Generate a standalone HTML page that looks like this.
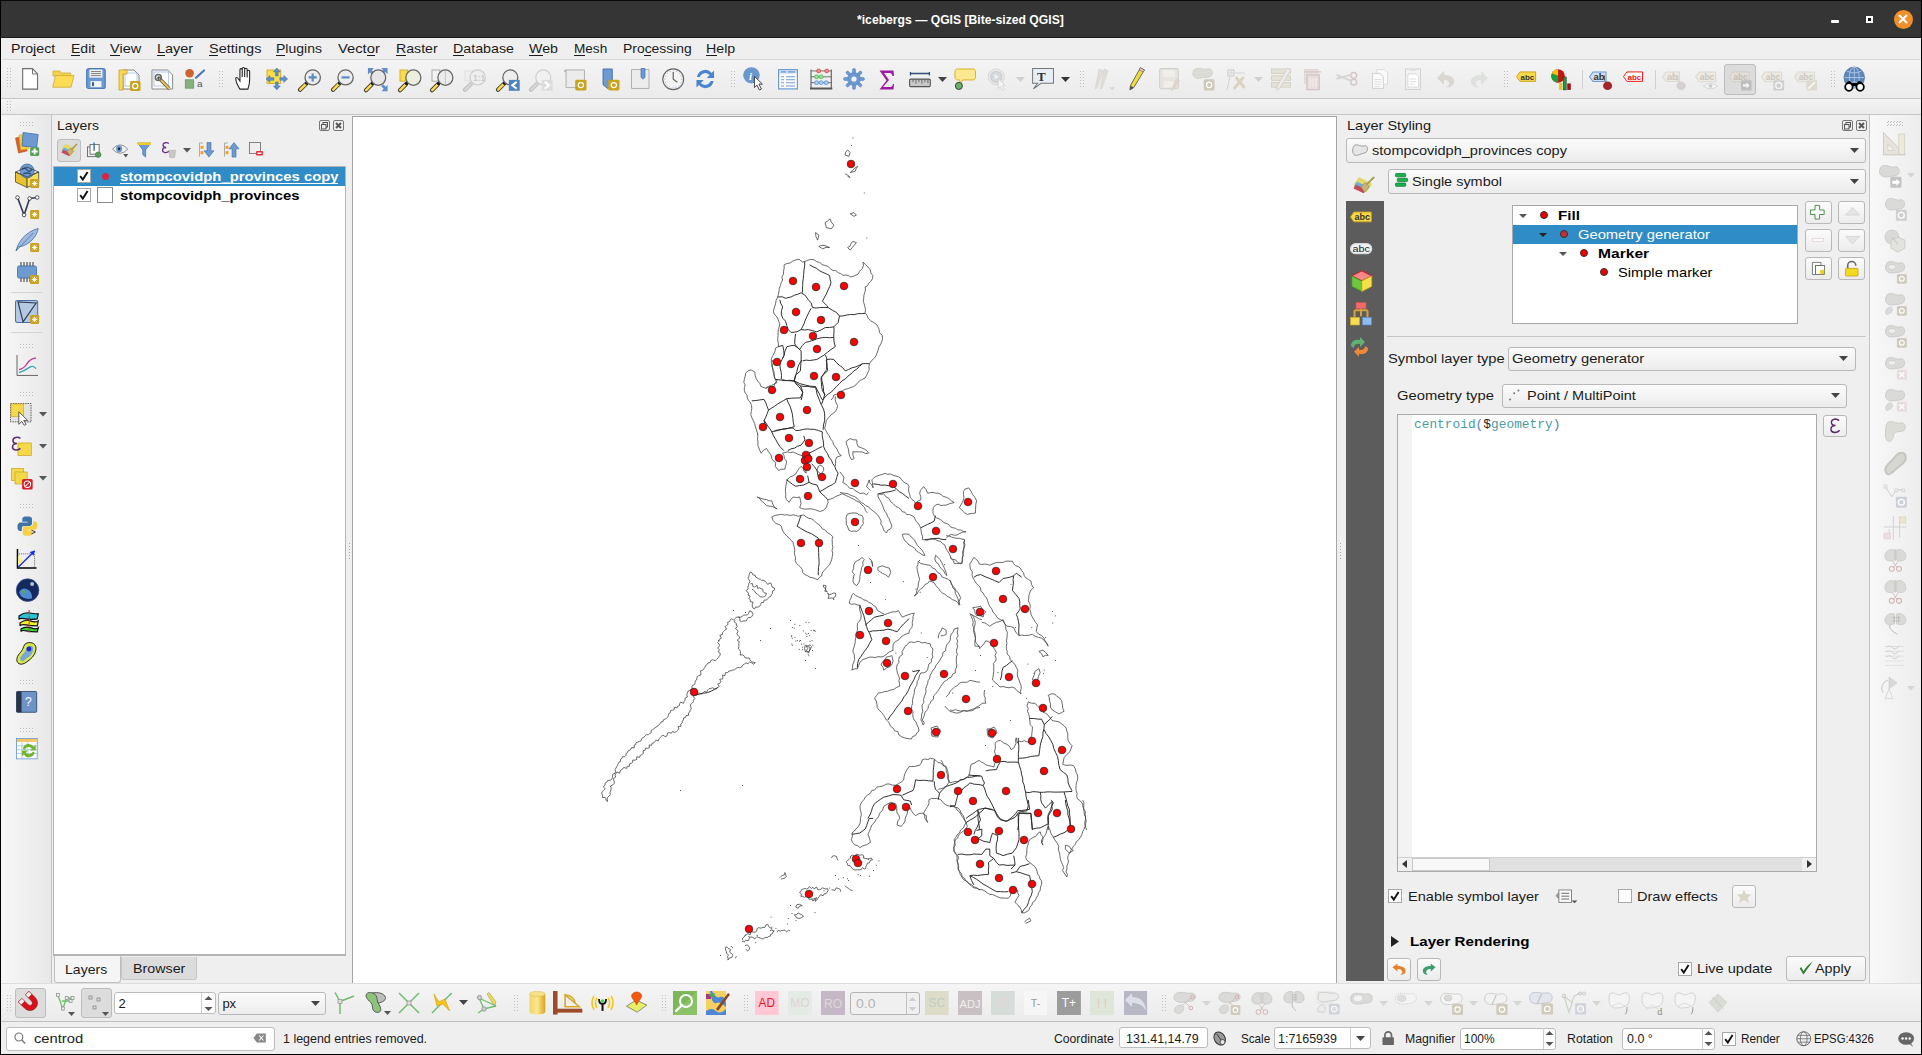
<!DOCTYPE html><html><head><meta charset="utf-8"><style>
*{margin:0;padding:0;box-sizing:border-box}
html,body{width:1922px;height:1055px;overflow:hidden;background:#efefef;font-family:"Liberation Sans",sans-serif;font-size:13px;color:#1b1b1b}
.a{position:absolute}
.t{position:absolute;white-space:nowrap;line-height:1;transform-origin:0 0}
svg{position:absolute;overflow:visible}
.btn{position:absolute;border:1px solid #b8b8b8;border-radius:3px;background:linear-gradient(#fbfbfb,#ececec)}
.pr{position:absolute;border:1px solid #bdbdbd;border-radius:3px;background:#dcdcdc}
.inp{position:absolute;border:1px solid #bcbcbc;border-radius:3px;background:#fff}
.cb{position:absolute;width:14px;height:14px;border:1px solid #a8a8a8;background:#fff}
</style></head><body><div class="a" style="left:0px;top:0px;width:1922px;height:38px;background:#353535"></div><div class="a" style="left:0px;top:0px;width:1922px;height:1px;background:#0a0a0a"></div><div class="a" style="left:0px;top:37px;width:1922px;height:1px;background:#1a1a1a"></div><div class="t" style="left:857.00px;top:13.00px;font-size:13.2px;font-family:'Liberation Sans',sans-serif;font-weight:bold;color:#ffffff;transform:scaleX(0.9222);">*icebergs — QGIS [Bite-sized QGIS]</div><div class="a" style="left:1831px;top:20px;width:8px;height:3px;background:#fff;border-radius:1px"></div><div class="a" style="left:1866px;top:16px;width:7px;height:7px;border:2px solid #fff;background:#111"></div><div class="a" style="left:1893.5px;top:9.6px;width:19px;height:19px;border-radius:50%;background:#f0902a"></div><svg style="left:1898px;top:14px" width="10" height="10" viewBox="0 0 10 10"><path d="M1 1L9 9M9 1L1 9" stroke="#fff" stroke-width="2"/></svg><div class="a" style="left:1px;top:38px;width:1920px;height:21px;background:#efefef"></div><div class="t" style="left:11.20px;top:43.00px;font-size:12.2px;font-family:'Liberation Sans',sans-serif;font-weight:normal;color:#1b1b1b;transform:scaleX(1.1649);">Project</div><div class="a" style="left:33.3px;top:55px;width:3.2px;height:1.1px;background:#1b1b1b"></div><div class="t" style="left:70.70px;top:43.00px;font-size:12.2px;font-family:'Liberation Sans',sans-serif;font-weight:normal;color:#1b1b1b;transform:scaleX(1.1499);">Edit</div><div class="a" style="left:70.7px;top:55px;width:9.4px;height:1.1px;background:#1b1b1b"></div><div class="t" style="left:109.90px;top:43.00px;font-size:12.2px;font-family:'Liberation Sans',sans-serif;font-weight:normal;color:#1b1b1b;transform:scaleX(1.1895);">View</div><div class="a" style="left:109.9px;top:55px;width:9.7px;height:1.1px;background:#1b1b1b"></div><div class="t" style="left:156.60px;top:43.00px;font-size:12.2px;font-family:'Liberation Sans',sans-serif;font-weight:normal;color:#1b1b1b;transform:scaleX(1.1869);">Layer</div><div class="a" style="left:156.6px;top:55px;width:8.1px;height:1.1px;background:#1b1b1b"></div><div class="t" style="left:208.50px;top:43.00px;font-size:12.2px;font-family:'Liberation Sans',sans-serif;font-weight:normal;color:#1b1b1b;transform:scaleX(1.1904);">Settings</div><div class="a" style="left:208.5px;top:55px;width:9.7px;height:1.1px;background:#1b1b1b"></div><div class="t" style="left:276.00px;top:43.00px;font-size:12.2px;font-family:'Liberation Sans',sans-serif;font-weight:normal;color:#1b1b1b;transform:scaleX(1.1495);">Plugins</div><div class="a" style="left:276.0px;top:55px;width:9.4px;height:1.1px;background:#1b1b1b"></div><div class="t" style="left:337.70px;top:43.00px;font-size:12.2px;font-family:'Liberation Sans',sans-serif;font-weight:normal;color:#1b1b1b;transform:scaleX(1.2114);">Vector</div><div class="a" style="left:366.5px;top:55px;width:8.2px;height:1.1px;background:#1b1b1b"></div><div class="t" style="left:395.90px;top:43.00px;font-size:12.2px;font-family:'Liberation Sans',sans-serif;font-weight:normal;color:#1b1b1b;transform:scaleX(1.1606);">Raster</div><div class="a" style="left:395.9px;top:55px;width:10.2px;height:1.1px;background:#1b1b1b"></div><div class="t" style="left:453.30px;top:43.00px;font-size:12.2px;font-family:'Liberation Sans',sans-serif;font-weight:normal;color:#1b1b1b;transform:scaleX(1.1682);">Database</div><div class="a" style="left:453.3px;top:55px;width:10.3px;height:1.1px;background:#1b1b1b"></div><div class="t" style="left:529.30px;top:43.00px;font-size:12.2px;font-family:'Liberation Sans',sans-serif;font-weight:normal;color:#1b1b1b;transform:scaleX(1.1652);">Web</div><div class="a" style="left:529.3px;top:55px;width:13.4px;height:1.1px;background:#1b1b1b"></div><div class="t" style="left:573.80px;top:43.00px;font-size:12.2px;font-family:'Liberation Sans',sans-serif;font-weight:normal;color:#1b1b1b;transform:scaleX(1.1130);">Mesh</div><div class="a" style="left:573.8px;top:55px;width:11.3px;height:1.1px;background:#1b1b1b"></div><div class="t" style="left:622.50px;top:43.00px;font-size:12.2px;font-family:'Liberation Sans',sans-serif;font-weight:normal;color:#1b1b1b;transform:scaleX(1.1404);">Processing</div><div class="a" style="left:644.2px;top:55px;width:7.0px;height:1.1px;background:#1b1b1b"></div><div class="t" style="left:706.30px;top:43.00px;font-size:12.2px;font-family:'Liberation Sans',sans-serif;font-weight:normal;color:#1b1b1b;transform:scaleX(1.1647);">Help</div><div class="a" style="left:706.3px;top:55px;width:10.3px;height:1.1px;background:#1b1b1b"></div><div class="a" style="left:1px;top:59px;width:1920px;height:1px;background:#d9d9d9"></div><div class="a" style="left:1px;top:60px;width:1920px;height:38px;background:linear-gradient(#f4f4f4,#ebebeb)"></div><div class="a" style="left:1px;top:98px;width:1920px;height:1px;background:#c6c6c6"></div><div class="a" style="left:1px;top:99px;width:1920px;height:15px;background:linear-gradient(#f4f4f4,#ebebeb)"></div><div class="a" style="left:1px;top:114px;width:1920px;height:1px;background:#c6c6c6"></div><svg style="left:7px;top:68px" width="6" height="21" viewBox="0 0 6 21" shape-rendering="crispEdges"><g fill="#bdbdbd"><rect x="0" y="0" width="1" height="1"/><rect x="0" y="3" width="1" height="1"/><rect x="0" y="6" width="1" height="1"/><rect x="0" y="9" width="1" height="1"/><rect x="0" y="12" width="1" height="1"/><rect x="0" y="15" width="1" height="1"/><rect x="0" y="18" width="1" height="1"/><rect x="3" y="0" width="1" height="1"/><rect x="3" y="3" width="1" height="1"/><rect x="3" y="6" width="1" height="1"/><rect x="3" y="9" width="1" height="1"/><rect x="3" y="12" width="1" height="1"/><rect x="3" y="15" width="1" height="1"/><rect x="3" y="18" width="1" height="1"/></g></svg><svg style="left:7px;top:101px" width="6" height="12" viewBox="0 0 6 12" shape-rendering="crispEdges"><g fill="#bdbdbd"><rect x="0" y="0" width="1" height="1"/><rect x="0" y="3" width="1" height="1"/><rect x="0" y="6" width="1" height="1"/><rect x="0" y="9" width="1" height="1"/><rect x="3" y="0" width="1" height="1"/><rect x="3" y="3" width="1" height="1"/><rect x="3" y="6" width="1" height="1"/><rect x="3" y="9" width="1" height="1"/></g></svg><div class="pr" style="left:1724.4px;top:64px;width:31.6px;height:30.5px"></div><svg style="left:21.9px;top:68px" width="16.20" height="21.80" viewBox="0 0 17 22" preserveAspectRatio="none"><path d="M0.7 0.7H11L16.3 6V21.3H0.7Z" fill="#fff" stroke="#6e6e6e" stroke-width="1.2"/><path d="M11 0.7V6H16.3" fill="none" stroke="#6e6e6e" stroke-width="1"/></svg><svg style="left:51.8px;top:70px" width="22.50" height="18.00" viewBox="0 0 23 18" preserveAspectRatio="none"><path d="M1 1H8L9.5 3H19V6H1Z" fill="#f5d04a" stroke="#cfae3a" stroke-width="0.8"/><path d="M0.8 17.2L3.5 5.5H22.5L19.5 17.2Z" fill="#fcdb55" stroke="#d2b03c" stroke-width="0.9"/></svg><svg style="left:86.2px;top:68px" width="19.90" height="21.20" viewBox="0 0 20 21" preserveAspectRatio="none"><rect x="0.7" y="0.7" width="18.6" height="19.6" rx="2" fill="#6b9ad3" stroke="#4c7bb8" stroke-width="1.2"/><rect x="3.5" y="1.5" width="13" height="8" fill="#f2f2f2"/><path d="M5 3.5H15M5 5.5H15M5 7.5H15" stroke="#666" stroke-width="0.8"/><rect x="4.5" y="13" width="11" height="6" fill="#f2f2f2"/><rect x="6" y="14" width="2" height="4" fill="#3d5f8c"/></svg><svg style="left:118px;top:69px" width="23.00" height="22.00" viewBox="0 0 23 22" preserveAspectRatio="none"><path d="M5 1H16L21 6V20H5Z" fill="#fff" stroke="#888" stroke-width="1"/><rect x="7" y="4" width="12" height="13" fill="none" stroke="#9db9e8" stroke-width="0.8"/><path d="M1 1H9V5H5V21H1Z" fill="#f7d85a" stroke="#c9a21e" stroke-width="0.8"/><rect x="12" y="12" width="10.5" height="10" rx="1.5" fill="#c9a21e"/><circle cx="17.2" cy="17" r="2.6" fill="none" stroke="#fff" stroke-width="1.2"/></svg><svg style="left:151px;top:69px" width="22.60" height="22.00" viewBox="0 0 23 22" preserveAspectRatio="none"><path d="M1 1H17L22 6V20H1Z" fill="#fff" stroke="#888" stroke-width="1"/><rect x="3" y="3" width="15" height="14" fill="none" stroke="#9db9e8" stroke-width="0.8"/><path d="M8 9L18 19" stroke="#555" stroke-width="3.4" stroke-linecap="round"/><path d="M9 10L18.5 19.5" stroke="#e9c34a" stroke-width="2" stroke-linecap="round"/><circle cx="7.5" cy="8.5" r="3" fill="none" stroke="#666" stroke-width="1.6"/></svg><svg style="left:184.8px;top:69px" width="20.00" height="19.60" viewBox="0 0 20 20" preserveAspectRatio="none"><circle cx="4.6" cy="4.4" r="4.3" fill="#d0622b"/><path d="M11 9L19 1.5" stroke="#4f76b6" stroke-width="2.2" stroke-linecap="round"/><rect x="0.2" y="11" width="8.6" height="8.6" fill="#86b07e" stroke="#5c8a55" stroke-width="0.6"/><text x="12" y="18.5" font-size="10" font-family="Liberation Sans" fill="#555">a</text></svg><svg style="left:235px;top:66.8px" width="18.80" height="23.10" viewBox="0 0 19 23" preserveAspectRatio="none"><path d="M5 22C3 19 1 15 0.8 12C0.6 10 2.5 10 3.5 12L5 14V3C5 1.2 7.2 1.2 7.3 3V10V1.8C7.3 0 9.7 0 9.8 1.8V10V2.5C9.9 0.8 12.2 0.8 12.3 2.5V10.5V4.5C12.4 2.8 14.8 2.8 14.8 4.5V13C14.8 17 14 19 13 22Z" fill="#fff" stroke="#222" stroke-width="1.1"/></svg><svg style="left:266.3px;top:68px" width="21.70" height="21.90" viewBox="0 0 22 22" preserveAspectRatio="none"><rect x="1" y="2" width="14" height="13.5" fill="#f9dd4b" stroke="#c9a21e" stroke-width="0.8"/><path d="M11 0L14.5 4H12.3V8H9.7V4H7.5Z M11 22L7.5 18H9.7V14H12.3V18H14.5Z M0 11L4 7.5V9.7H8V12.3H4V14.5Z M22 11L18 14.5V12.3H14V9.7H18V7.5Z" fill="#5f8fc9" stroke="#466fa5" stroke-width="0.5"/></svg><svg style="left:298px;top:68px" width="23.30" height="22.80" viewBox="0 0 23 23" preserveAspectRatio="none"><path d="M2 22L8 16" stroke="#333" stroke-width="4.2" stroke-linecap="round"/><path d="M2.2 21.8L7.6 16.4" stroke="#fbd84a" stroke-width="2.6" stroke-linecap="round"/><circle cx="8.6" cy="15.4" r="1.6" fill="#111"/><circle cx="14.5" cy="9.5" r="7.6" fill="#ececec" stroke="#666" stroke-width="1.3"/><path d="M14.5 5.5V13.5M10.5 9.5H18.5" stroke="#5a8ac6" stroke-width="2.2"/></svg><svg style="left:331.3px;top:68px" width="23.10" height="22.80" viewBox="0 0 23 23" preserveAspectRatio="none"><path d="M2 22L8 16" stroke="#333" stroke-width="4.2" stroke-linecap="round"/><path d="M2.2 21.8L7.6 16.4" stroke="#fbd84a" stroke-width="2.6" stroke-linecap="round"/><circle cx="8.6" cy="15.4" r="1.6" fill="#111"/><circle cx="14.5" cy="9.5" r="7.6" fill="#ececec" stroke="#666" stroke-width="1.3"/><path d="M10.5 9.5H18.5" stroke="#5a8ac6" stroke-width="2.2"/></svg><svg style="left:364.4px;top:67.5px" width="23.60" height="23.30" viewBox="0 0 24 23" preserveAspectRatio="none"><path d="M4 0H10L8 2.5L10.5 5L8.5 7L6 4.5L4 6.5Z M24 0V6L21.5 4L19 6.5L17 4.5L19.5 2L17.5 0Z M24 23H18L20 20.5L17.5 18L19.5 16L22 18.5L24 16.5Z" fill="#5f8fc9"/><path d="M2 22L8 16" stroke="#333" stroke-width="4.2" stroke-linecap="round"/><path d="M2.2 21.8L7.6 16.4" stroke="#fbd84a" stroke-width="2.6" stroke-linecap="round"/><circle cx="8.6" cy="15.4" r="1.6" fill="#111"/><circle cx="14.5" cy="9.5" r="7.6" fill="#e6e6e6" stroke="#666" stroke-width="1.3"/></svg><svg style="left:397.5px;top:67.5px" width="23.80" height="23.30" viewBox="0 0 24 23" preserveAspectRatio="none"><rect x="2" y="2" width="8" height="11" fill="#f9dd4b" stroke="#c9a21e" stroke-width="0.8"/><path d="M2 22L8 16" stroke="#333" stroke-width="4.2" stroke-linecap="round"/><path d="M2.2 21.8L7.6 16.4" stroke="#fbd84a" stroke-width="2.6" stroke-linecap="round"/><circle cx="8.6" cy="15.4" r="1.6" fill="#111"/><circle cx="15.5" cy="9.5" r="7.6" fill="#eeeedd" stroke="#666" stroke-width="1.3"/></svg><svg style="left:430px;top:67.5px" width="23.80" height="23.30" viewBox="0 0 24 23" preserveAspectRatio="none"><rect x="2" y="2" width="8" height="11" fill="#f2f2f2" stroke="#999" stroke-width="0.8"/><path d="M2 22L8 16" stroke="#333" stroke-width="4.2" stroke-linecap="round"/><path d="M2.2 21.8L7.6 16.4" stroke="#fbd84a" stroke-width="2.6" stroke-linecap="round"/><circle cx="8.6" cy="15.4" r="1.6" fill="#111"/><circle cx="15.5" cy="9.5" r="7.6" fill="#ececec" stroke="#666" stroke-width="1.3"/><path d="M15.5 3V16" stroke="#bbb" stroke-width="0.8"/></svg><svg style="left:463px;top:68px" width="23.30" height="22.80" viewBox="0 0 23 23" preserveAspectRatio="none"><rect x="2" y="3" width="8" height="10" fill="#eee" stroke="#ddd" stroke-width="0.8"/><path d="M2 22L8 16" stroke="#bbb" stroke-width="4.2" stroke-linecap="round"/><path d="M2.2 21.8L7.6 16.4" stroke="#d8d6d0" stroke-width="2.6" stroke-linecap="round"/><circle cx="8.6" cy="15.4" r="1.6" fill="#cfcfcf"/><circle cx="14.5" cy="9.5" r="7.6" fill="#eee" stroke="#cfcfcf" stroke-width="1.3"/><text x="9.8" y="13" font-size="8.5" font-weight="bold" font-family="Liberation Sans" fill="#ccc">1:1</text></svg><svg style="left:496.3px;top:68px" width="23.70" height="22.80" viewBox="0 0 24 23" preserveAspectRatio="none"><path d="M2 22L8 16" stroke="#333" stroke-width="4.2" stroke-linecap="round"/><path d="M2.2 21.8L7.6 16.4" stroke="#fbd84a" stroke-width="2.6" stroke-linecap="round"/><circle cx="8.6" cy="15.4" r="1.6" fill="#111"/><circle cx="14.5" cy="9.5" r="7.6" fill="#eeeeee" stroke="#666" stroke-width="1.3"/><rect x="13" y="12" width="11" height="11" fill="#4f82c2"/><path d="M21 14L16.5 17.5L21 21" fill="none" stroke="#fff" stroke-width="2"/></svg><svg style="left:529.4px;top:68px" width="23.60" height="22.80" viewBox="0 0 24 23" preserveAspectRatio="none"><path d="M2 22L8 16" stroke="#bbb" stroke-width="4.2" stroke-linecap="round"/><path d="M2.2 21.8L7.6 16.4" stroke="#d8d6d0" stroke-width="2.6" stroke-linecap="round"/><circle cx="8.6" cy="15.4" r="1.6" fill="#cfcfcf"/><circle cx="14.5" cy="9.5" r="7.6" fill="#f0f0f0" stroke="#cfcfcf" stroke-width="1.3"/><rect x="13" y="12" width="11" height="11" fill="#dcdcdc"/><path d="M16 14L20.5 17.5L16 21" fill="none" stroke="#fff" stroke-width="2"/></svg><svg style="left:563.8px;top:68px" width="22.50" height="22.50" viewBox="0 0 22 23" preserveAspectRatio="none"><path d="M2 2H20V20H2Z" fill="#ececec" stroke="#aaa" stroke-width="0.9"/><path d="M2 2C0 2 0 4 2 4" fill="none" stroke="#aaa"/><rect x="11" y="12" width="11" height="11" rx="1.5" fill="#c9a21e"/><circle cx="16.5" cy="17.5" r="2.6" fill="none" stroke="#fff" stroke-width="1.2"/></svg><svg style="left:601.9px;top:68px" width="17.50" height="22.50" viewBox="0 0 17 23" preserveAspectRatio="none"><path d="M1 1H10V17L5.5 21L1 17Z" fill="#6d9ad0" stroke="#3f6fae" stroke-width="0.9"/><rect x="6" y="12" width="11" height="11" rx="1.5" fill="#c9a21e"/><circle cx="11.5" cy="17.5" r="2.6" fill="none" stroke="#fff" stroke-width="1.2"/></svg><svg style="left:630px;top:68px" width="20.00" height="21.50" viewBox="0 0 20 21" preserveAspectRatio="none"><path d="M1.5 1.5H19V20H1.5Z" fill="#ececec" stroke="#aaa" stroke-width="0.9"/><path d="M11 0.5H15V9L13 11L11 9Z" fill="#6d9ad0" stroke="#3f6fae" stroke-width="0.7"/></svg><svg style="left:661.9px;top:68px" width="22.50" height="22.50" viewBox="0 0 22 22" preserveAspectRatio="none"><circle cx="11" cy="11" r="10.2" fill="#f4f4f4" stroke="#666" stroke-width="1.1"/><circle cx="11" cy="11" r="8.3" fill="none" stroke="#7aa0d8" stroke-width="0.9" stroke-dasharray="0.9 2.3"/><path d="M11 4V11L15 14" fill="none" stroke="#666" stroke-width="1.2"/></svg><svg style="left:693.8px;top:68px" width="22.50" height="22.00" viewBox="0 0 23 22" preserveAspectRatio="none"><path d="M3 9A8.5 8.5 0 0 1 18 5L20.5 2.5V10H13L16 7A6 6 0 0 0 6 9Z" fill="#4a86cf"/><path d="M20 13A8.5 8.5 0 0 1 5 17L2.5 19.5V12H10L7 15A6 6 0 0 0 17 13Z" fill="#4a86cf"/></svg><svg style="left:743px;top:67px" width="23.90" height="23.50" viewBox="0 0 24 24" preserveAspectRatio="none"><circle cx="8.5" cy="8.5" r="8.3" fill="#6b97cf"/><text x="6" y="13.5" font-size="11" font-style="italic" font-weight="bold" font-family="Liberation Serif" fill="#fff">i</text><path d="M11.5 9.5V21L14 18.5L16.5 23.5L18.5 22.5L16 17.5H19.5Z" fill="#fff" stroke="#333" stroke-width="0.9"/></svg><svg style="left:778px;top:69px" width="20.00" height="20.50" viewBox="0 0 20 20" preserveAspectRatio="none"><rect x="0.6" y="0.6" width="18.8" height="18.8" fill="#fff" stroke="#6d9ad0" stroke-width="1.2"/><rect x="1" y="1" width="18" height="3.5" fill="#c5d8f0"/><path d="M3 2.8H8M10 2.8H17M3 7.5H6M8 7.5H17M3 10.5H6M8 10.5H17M3 13.5H6M8 13.5H17M3 16.5H6M8 16.5H17" stroke="#6d9ad0" stroke-width="1"/></svg><svg style="left:810px;top:69px" width="22.30" height="20.50" viewBox="0 0 22 21" preserveAspectRatio="none"><path d="M1 0.5V20M21 0.5V20" stroke="#555" stroke-width="1"/><rect x="0" y="19" width="22" height="2" fill="#555"/><path d="M1 2H21M1 8H21M1 14H21" stroke="#555" stroke-width="0.8"/><g fill="#f08a8a" stroke="#c33" stroke-width="0.6"><circle cx="8.5" cy="2" r="2"/><circle cx="16.5" cy="2" r="2"/></g><g fill="#9be09b" stroke="#3a3" stroke-width="0.6"><circle cx="6.5" cy="8" r="2"/><circle cx="11" cy="8" r="2"/></g><g fill="#a8d0f0" stroke="#47c" stroke-width="0.6"><circle cx="6.5" cy="14" r="2"/><circle cx="11" cy="14" r="2"/><circle cx="16" cy="14" r="2"/></g></svg><svg style="left:843px;top:68px" width="22.00" height="22.00" viewBox="0 0 22 22" preserveAspectRatio="none"><g fill="#6d9ad0" stroke="#4f7cb8" stroke-width="0.5"><circle cx="11" cy="11" r="6.5"/><rect x="9.5" y="0.5" width="3" height="5" rx="1.4" transform="rotate(0 11 11)"/><rect x="9.5" y="0.5" width="3" height="5" rx="1.4" transform="rotate(45 11 11)"/><rect x="9.5" y="0.5" width="3" height="5" rx="1.4" transform="rotate(90 11 11)"/><rect x="9.5" y="0.5" width="3" height="5" rx="1.4" transform="rotate(135 11 11)"/><rect x="9.5" y="0.5" width="3" height="5" rx="1.4" transform="rotate(180 11 11)"/><rect x="9.5" y="0.5" width="3" height="5" rx="1.4" transform="rotate(225 11 11)"/><rect x="9.5" y="0.5" width="3" height="5" rx="1.4" transform="rotate(270 11 11)"/><rect x="9.5" y="0.5" width="3" height="5" rx="1.4" transform="rotate(315 11 11)"/></g><circle cx="11" cy="11" r="2.6" fill="#f2f2f2"/></svg><svg style="left:879.4px;top:69.5px" width="15.00" height="20.00" viewBox="0 0 15 20" preserveAspectRatio="none"><path d="M0.5 0.5H14.5L15 6H13.5C13 3.5 12 3 10 3H5L10 10L4 17H10.5C12.5 17 13.5 16.5 14 14H15L14.5 19.5H0.5L7.5 10.5Z" fill="#9d1aa8"/></svg><svg style="left:909.4px;top:71.5px" width="21.90" height="15.20" viewBox="0 0 22 15" preserveAspectRatio="none"><path d="M1.5 1.5H20.5M1.5 0V3.5M20.5 0V3.5" stroke="#2f4f78" stroke-width="1.3"/><rect x="0.6" y="7" width="20.8" height="7.4" rx="1" fill="#c8c8c8" stroke="#555" stroke-width="1.1"/><path d="M4 7V10M7 7V11.5M10 7V10M13 7V11.5M16 7V10M19 7V11" stroke="#555" stroke-width="0.8"/></svg><svg style="left:953.8px;top:68px" width="22.50" height="21.90" viewBox="0 0 23 22" preserveAspectRatio="none"><path d="M4 1H19C21 1 22 2 22 4V9C22 11 21 12 19 12H9L6 16L6 12H4C2 12 1 11 1 9V4C1 2 2 1 4 1Z" fill="#fce98f" stroke="#d5b22d" stroke-width="1"/><circle cx="5" cy="18" r="3.6" fill="#6ab06a" stroke="#333" stroke-width="0.9"/></svg><svg style="left:985.6px;top:67px" width="24.40" height="23.50" viewBox="0 0 24 24" preserveAspectRatio="none"><g fill="#e9e9e9" stroke="#d2d2d2" stroke-width="0.8"><circle cx="10" cy="10" r="8"/></g><circle cx="10" cy="10" r="5.5" fill="#d6d9dc" stroke="#c8c8c8"/><path d="M8.5 7.5V12.5L12.5 10Z" fill="#f4f4f4"/><path d="M12 12V22L14 20L16 24L18 23L16 19H19Z" fill="#f6f6f6" stroke="#cfcfcf" stroke-width="0.8"/></svg><svg style="left:1031.9px;top:68px" width="22.10" height="21.90" viewBox="0 0 22 22" preserveAspectRatio="none"><path d="M0.6 0.6H21.4V15.4H9L1.5 21L5.5 15.4H0.6Z" fill="#e8eef6" stroke="#777" stroke-width="1"/><text x="5" y="13.5" font-size="13" font-weight="bold" font-family="Liberation Serif" fill="#333">T</text></svg><svg style="left:1093.8px;top:67px" width="21.20" height="23.00" viewBox="0 0 21 24" preserveAspectRatio="none"><g fill="#e0ddd8" stroke="#d5d2cc" stroke-width="0.6"><path d="M5 2L9 4L3 22L1 23Z"/><path d="M10 2L14 4L8 22L6 23Z"/></g><path d="M15 21H21L18 24Z" fill="#d5d5d5"/></svg><svg style="left:1128.8px;top:67px" width="16.20" height="23.50" viewBox="0 0 17 24" preserveAspectRatio="none"><path d="M12 0.8L16.2 3L5 21L1 23.5L1.5 19Z" fill="#f0dc3a" stroke="#555" stroke-width="0.9"/><path d="M1.5 19L5 21L1 23.5Z" fill="#555"/><path d="M12 0.8L16.2 3L15 5L10.8 2.8Z" fill="#f4c6c6" stroke="#555" stroke-width="0.6"/></svg><svg style="left:1159.4px;top:68px" width="21.10" height="22.50" viewBox="0 0 21 22" preserveAspectRatio="none"><rect x="0.6" y="0.6" width="18.6" height="19.6" rx="2" fill="#e6e4e0" stroke="#d2cfca" stroke-width="1"/><rect x="4" y="2" width="12" height="7" fill="#f1efec"/><rect x="4.5" y="13" width="10" height="6" fill="#f1efec"/><path d="M17 10L21 12L14 22L12 22.5L12.5 20Z" fill="#dcd5cc"/></svg><svg style="left:1191.9px;top:68px" width="22.50" height="22.50" viewBox="0 0 23 22" preserveAspectRatio="none"><path d="M3 1C8 -1 11 2 15 1C20 0 22 3 20 7C18 10 12 9 8 10C4 11 0 8 1 5C1 3 2 2 3 1Z" fill="#dcdcd6" stroke="#cdcdc6" stroke-width="0.8"/><rect x="12" y="11" width="11" height="11" rx="1.5" fill="#cfc9bc"/><circle cx="17.5" cy="16.5" r="2.6" fill="none" stroke="#fff" stroke-width="1.2"/></svg><svg style="left:1226.3px;top:69px" width="20.60" height="21.00" viewBox="0 0 21 21" preserveAspectRatio="none"><rect x="2" y="1" width="6" height="6" fill="#f4f4f4" stroke="#c6c6c6" stroke-width="1"/><circle cx="5" cy="4" r="1.3" fill="none" stroke="#c6c6c6" stroke-width="0.7"/><path d="M9 4H19M4 8L1 21" stroke="#d0d0d0" stroke-width="1"/><path d="M8 20L18 8M10 8L19 19" stroke="#d8d3c2" stroke-width="3"/></svg><svg style="left:1271px;top:67px" width="20.90" height="23.50" viewBox="0 0 22 24" preserveAspectRatio="none"><g fill="#e4e2d6" stroke="#d0cdbf" stroke-width="0.8"><rect x="0.5" y="2" width="20" height="4.6"/><rect x="0.5" y="9" width="20" height="4.6"/><rect x="0.5" y="16" width="20" height="4.6"/></g><path d="M17 1L21 3L9 22L6 23.5L6.5 20Z" fill="#eeeaea" stroke="#d0cbc6" stroke-width="0.8"/></svg><svg style="left:1303.8px;top:69px" width="18.10" height="21.50" viewBox="0 0 19 22" preserveAspectRatio="none"><rect x="0.6" y="0.5" width="14" height="14" fill="#e4e2de" stroke="#d8d6d0" stroke-width="0.8"/><path d="M1 3H18M3 6H16V21H3Z" fill="#e8dcdc" stroke="#d6c3c3" stroke-width="1.3"/><path d="M6.5 9V19M9.5 9V19M12.5 9V19" stroke="#f4efef" stroke-width="1.2"/></svg><svg style="left:1336.3px;top:71px" width="21.70" height="15.50" viewBox="0 0 22 16" preserveAspectRatio="none"><path d="M0.5 4L15 10M0.5 8L15 4" stroke="#d6d6d6" stroke-width="2"/><circle cx="18" cy="4.5" r="3" fill="none" stroke="#d2c7c7" stroke-width="1.4"/><circle cx="18" cy="11.5" r="3" fill="none" stroke="#d2c7c7" stroke-width="1.4"/></svg><svg style="left:1371.9px;top:69px" width="16.10" height="20.00" viewBox="0 0 17 21" preserveAspectRatio="none"><path d="M5 0.6H13L16.4 4V16H5Z" fill="#fafafa" stroke="#d8d8d8" stroke-width="0.9"/><path d="M0.6 4.6H8.5L12 8V20.4H0.6Z" fill="#fbfbfb" stroke="#cfcfcf" stroke-width="1"/><path d="M2.5 11H10M2.5 13.5H10M2.5 16H10M2.5 18.5H8" stroke="#d0d0d0" stroke-width="0.7"/></svg><svg style="left:1405px;top:68px" width="16.00" height="22.00" viewBox="0 0 17 22" preserveAspectRatio="none"><rect x="0.6" y="1" width="15.8" height="20.4" fill="#f3f3f3" stroke="#cfcfcf" stroke-width="1"/><rect x="5" y="0" width="7" height="3" fill="#e0e0e0"/><path d="M3 6H12L14.5 8.5V19H3Z" fill="#fff" stroke="#d0d0d0" stroke-width="0.8"/><path d="M5 11H12M5 13.5H12M5 16H10" stroke="#d0d0d0" stroke-width="0.7"/></svg><svg style="left:1436.9px;top:70px" width="18.10" height="18.00" viewBox="0 0 18 18" preserveAspectRatio="none"><path d="M0 8L7 1V5C14 5 18 8 17 13C16 16 12 18 9 17C12 16 13 13 11 11C10 10 9 10 7 10V15Z" fill="#dad6d0"/></svg><svg style="left:1470px;top:70px" width="18.00" height="18.00" viewBox="0 0 18 18" preserveAspectRatio="none"><path d="M18 8L11 1V5C4 5 0 8 1 13C2 16 6 18 9 17C6 16 5 13 7 11C8 10 9 10 11 10V15Z" fill="#dde0dc"/></svg><svg style="left:1516.3px;top:70.5px" width="20.60" height="11.30" viewBox="0 0 21 12" preserveAspectRatio="none"><path d="M4 1H20V11H4L0.5 6Z" fill="#f7da45" stroke="#c9a21e" stroke-width="1"/><text x="4.6" y="9.4" font-size="8.6" font-weight="bold" font-family="Liberation Sans" fill="#333" textLength="14" lengthAdjust="spacingAndGlyphs">abc</text></svg><svg style="left:1551px;top:69px" width="20.30" height="20.90" viewBox="0 0 20 21" preserveAspectRatio="none"><circle cx="7" cy="7" r="6.7" fill="#c21515"/><path d="M7 7V0.3A6.7 6.7 0 0 0 0.8 4.6Z" fill="#f2c20b"/><path d="M7 7L0.8 4.6A6.7 6.7 0 0 0 7 13.7Z" fill="#14a33a"/><rect x="8" y="14" width="3" height="7" fill="#f2c20b"/><rect x="12" y="8" width="3" height="13" fill="#14a33a" stroke="#222" stroke-width="0.5"/><rect x="16" y="14.5" width="3.5" height="6.5" fill="#a01010"/></svg><svg style="left:1589.4px;top:70.5px" width="23.10" height="19.00" viewBox="0 0 23 20" preserveAspectRatio="none"><path d="M4 1H17V11H4L0.5 6Z" fill="#cfe0f7" stroke="#6d9ad0" stroke-width="1"/><text x="4.6" y="9.4" font-size="8.6" font-weight="bold" font-family="Liberation Sans" fill="#333" textLength="11" lengthAdjust="spacingAndGlyphs">ab</text><path d="M16 5C15 5 15 7 15.5 10" stroke="#555" stroke-width="1.3" fill="none"/><circle cx="18.5" cy="15.5" r="4.5" fill="#a3262a"/></svg><svg style="left:1622.5px;top:70.5px" width="20.50" height="11.30" viewBox="0 0 21 12" preserveAspectRatio="none"><path d="M4 1H20V11H4L0.5 6Z" fill="#fff" stroke="#e11" stroke-width="1"/><text x="4.6" y="9.4" font-size="8.6" font-weight="bold" font-family="Liberation Sans" fill="#e11" textLength="14" lengthAdjust="spacingAndGlyphs">abc</text></svg><svg style="left:1661.9px;top:70.5px" width="23.70" height="19.00" viewBox="0 0 23 20" preserveAspectRatio="none"><path d="M4 1H17V11H4L0.5 6Z" fill="#eceae2" stroke="#dcd9cf" stroke-width="1"/><text x="4.6" y="9.4" font-size="8.6" font-weight="bold" font-family="Liberation Sans" fill="#c9c6bd" textLength="11" lengthAdjust="spacingAndGlyphs">ab</text><path d="M16 5C15 5 15 7 15.5 10" stroke="#ccc" stroke-width="1.3" fill="none"/><circle cx="18.5" cy="15.5" r="4.5" fill="#d6d0d0"/></svg><svg style="left:1695px;top:70.5px" width="23.80" height="19.50" viewBox="0 0 23 20" preserveAspectRatio="none"><path d="M4 1H20V11H4L0.5 6Z" fill="#eceae2" stroke="#dcd9cf" stroke-width="1"/><text x="4.6" y="9.4" font-size="8.6" font-weight="bold" font-family="Liberation Sans" fill="#c9c6bd" textLength="14" lengthAdjust="spacingAndGlyphs">abc</text><path d="M8 15.5Q15 10 22 15.5Q15 21 8 15.5Z" fill="#f4f4f4" stroke="#cfcfcf" stroke-width="0.8"/><circle cx="15" cy="15.5" r="1.8" fill="#c8c8c8"/></svg><svg style="left:1729px;top:70.5px" width="23.00" height="19.50" viewBox="0 0 23 20" preserveAspectRatio="none"><path d="M4 1H20V11H4L0.5 6Z" fill="#e2e0d8" stroke="#d0cdc3" stroke-width="1"/><text x="4.6" y="9.4" font-size="8.6" font-weight="bold" font-family="Liberation Sans" fill="#c0bdb4" textLength="14" lengthAdjust="spacingAndGlyphs">abc</text><rect x="12" y="9.5" width="10.5" height="10.5" rx="1" fill="#bdbdbd"/><path d="M14 13.5H17.5V11.5L20.5 14.8L17.5 18V16H14Z" fill="#f5f5f5"/></svg><svg style="left:1761.3px;top:70.5px" width="23.70" height="19.50" viewBox="0 0 23 20" preserveAspectRatio="none"><path d="M4 1H20V11H4L0.5 6Z" fill="#eceae2" stroke="#dcd9cf" stroke-width="1"/><text x="4.6" y="9.4" font-size="8.6" font-weight="bold" font-family="Liberation Sans" fill="#c9c6bd" textLength="14" lengthAdjust="spacingAndGlyphs">abc</text><rect x="12" y="9.5" width="10.5" height="10.5" rx="1" fill="#cfcfcf"/><circle cx="17.2" cy="14.8" r="3" fill="none" stroke="#f5f5f5" stroke-width="1.4"/></svg><svg style="left:1794.4px;top:70.5px" width="23.60" height="19.50" viewBox="0 0 23 20" preserveAspectRatio="none"><path d="M4 1H20V11H4L0.5 6Z" fill="#eceae2" stroke="#dcd9cf" stroke-width="1"/><text x="4.6" y="9.4" font-size="8.6" font-weight="bold" font-family="Liberation Sans" fill="#c9c6bd" textLength="14" lengthAdjust="spacingAndGlyphs">abc</text><rect x="12" y="9.5" width="10.5" height="10.5" rx="1" fill="#dedad0"/><path d="M14 18L20.5 11.5" stroke="#f7f7f7" stroke-width="1.8"/></svg><svg style="left:1843px;top:66.8px" width="24.50" height="24.00" viewBox="0 0 25 24" preserveAspectRatio="none"><circle cx="11.5" cy="10.5" r="10.5" fill="#5e87bd" stroke="#3d5f8f" stroke-width="0.6"/><path d="M1.5 10.5H21.5M11.5 0V21M4 4Q11.5 8 19 4M4 17Q11.5 13 19 17" stroke="#b8cde6" stroke-width="0.8" fill="none"/><ellipse cx="11.5" cy="10.5" rx="5" ry="10.5" fill="none" stroke="#b8cde6" stroke-width="0.8"/><path d="M3 19Q3 14 7 14L9 16H14L16 14Q20 14 20 19" fill="#000"/><circle cx="6" cy="20" r="3.8" fill="#fff" stroke="#000" stroke-width="1.8"/><circle cx="17.5" cy="20" r="3.8" fill="#fff" stroke="#000" stroke-width="1.8"/></svg><svg style="left:937.5px;top:77px" width="9" height="5" viewBox="0 0 9 5"><path d="M0 0H9L4.5 5Z" fill="#444"/></svg><svg style="left:1015.5px;top:77px" width="9" height="5" viewBox="0 0 9 5"><path d="M0 0H9L4.5 5Z" fill="#d0d0d0"/></svg><svg style="left:1060.5px;top:77px" width="9" height="5" viewBox="0 0 9 5"><path d="M0 0H9L4.5 5Z" fill="#333"/></svg><svg style="left:1253.5px;top:77px" width="9" height="5" viewBox="0 0 9 5"><path d="M0 0H9L4.5 5Z" fill="#d0d0d0"/></svg><svg style="left:219px;top:71px" width="6" height="18" viewBox="0 0 6 18" shape-rendering="crispEdges"><g fill="#bdbdbd"><rect x="0" y="0" width="1" height="1"/><rect x="0" y="3" width="1" height="1"/><rect x="0" y="6" width="1" height="1"/><rect x="0" y="9" width="1" height="1"/><rect x="0" y="12" width="1" height="1"/><rect x="0" y="15" width="1" height="1"/><rect x="3" y="0" width="1" height="1"/><rect x="3" y="3" width="1" height="1"/><rect x="3" y="6" width="1" height="1"/><rect x="3" y="9" width="1" height="1"/><rect x="3" y="12" width="1" height="1"/><rect x="3" y="15" width="1" height="1"/></g></svg><svg style="left:731px;top:71px" width="6" height="18" viewBox="0 0 6 18" shape-rendering="crispEdges"><g fill="#bdbdbd"><rect x="0" y="0" width="1" height="1"/><rect x="0" y="3" width="1" height="1"/><rect x="0" y="6" width="1" height="1"/><rect x="0" y="9" width="1" height="1"/><rect x="0" y="12" width="1" height="1"/><rect x="0" y="15" width="1" height="1"/><rect x="3" y="0" width="1" height="1"/><rect x="3" y="3" width="1" height="1"/><rect x="3" y="6" width="1" height="1"/><rect x="3" y="9" width="1" height="1"/><rect x="3" y="12" width="1" height="1"/><rect x="3" y="15" width="1" height="1"/></g></svg><svg style="left:1080px;top:71px" width="6" height="18" viewBox="0 0 6 18" shape-rendering="crispEdges"><g fill="#bdbdbd"><rect x="0" y="0" width="1" height="1"/><rect x="0" y="3" width="1" height="1"/><rect x="0" y="6" width="1" height="1"/><rect x="0" y="9" width="1" height="1"/><rect x="0" y="12" width="1" height="1"/><rect x="0" y="15" width="1" height="1"/><rect x="3" y="0" width="1" height="1"/><rect x="3" y="3" width="1" height="1"/><rect x="3" y="6" width="1" height="1"/><rect x="3" y="9" width="1" height="1"/><rect x="3" y="12" width="1" height="1"/><rect x="3" y="15" width="1" height="1"/></g></svg><svg style="left:1504px;top:71px" width="6" height="18" viewBox="0 0 6 18" shape-rendering="crispEdges"><g fill="#bdbdbd"><rect x="0" y="0" width="1" height="1"/><rect x="0" y="3" width="1" height="1"/><rect x="0" y="6" width="1" height="1"/><rect x="0" y="9" width="1" height="1"/><rect x="0" y="12" width="1" height="1"/><rect x="0" y="15" width="1" height="1"/><rect x="3" y="0" width="1" height="1"/><rect x="3" y="3" width="1" height="1"/><rect x="3" y="6" width="1" height="1"/><rect x="3" y="9" width="1" height="1"/><rect x="3" y="12" width="1" height="1"/><rect x="3" y="15" width="1" height="1"/></g></svg><svg style="left:1831px;top:71px" width="6" height="18" viewBox="0 0 6 18" shape-rendering="crispEdges"><g fill="#bdbdbd"><rect x="0" y="0" width="1" height="1"/><rect x="0" y="3" width="1" height="1"/><rect x="0" y="6" width="1" height="1"/><rect x="0" y="9" width="1" height="1"/><rect x="0" y="12" width="1" height="1"/><rect x="0" y="15" width="1" height="1"/><rect x="3" y="0" width="1" height="1"/><rect x="3" y="3" width="1" height="1"/><rect x="3" y="6" width="1" height="1"/><rect x="3" y="9" width="1" height="1"/><rect x="3" y="12" width="1" height="1"/><rect x="3" y="15" width="1" height="1"/></g></svg><div class="a" style="left:1581.5px;top:70px;width:1px;height:19px;background:#cfcfcf"></div><div class="a" style="left:1655px;top:70px;width:1px;height:19px;background:#cfcfcf"></div><div class="a" style="left:1px;top:115px;width:50px;height:869px;background:linear-gradient(90deg,#f7f7f7,#e8e8e8)"></div><div class="a" style="left:51px;top:115px;width:1px;height:869px;background:#c4c4c4"></div><div class="a" style="left:52px;top:115px;width:300px;height:869px;background:#efefef"></div><div class="t" style="left:57.30px;top:120.00px;font-size:12.7px;font-family:'Liberation Sans',sans-serif;font-weight:normal;color:#1b1b1b;transform:scaleX(1.0997);">Layers</div><div class="a" style="left:319px;top:120px;width:11px;height:11px;border:1px solid #777;border-radius:2px"></div><div class="a" style="left:333px;top:120px;width:11px;height:11px;border:1px solid #777;border-radius:2px"></div><svg style="left:319px;top:120px" width="11" height="11" viewBox="0 0 11 11"><rect x="4" y="2.5" width="4.5" height="4.5" fill="none" stroke="#555" stroke-width="1"/><rect x="2.5" y="4.5" width="4.5" height="4.5" fill="#efefef" stroke="#555" stroke-width="1"/></svg><svg style="left:333px;top:120px" width="11" height="11" viewBox="0 0 11 11"><path d="M3 3L8 8M8 3L3 8" stroke="#555" stroke-width="1.8"/></svg><div class="pr" style="left:57px;top:139px;width:24px;height:23px;"></div><div class="a" style="left:53px;top:166px;width:293px;height:789px;background:#fff;border:1px solid #b4b4b4"></div><div class="a" style="left:54px;top:167px;width:291px;height:19px;background:#308cc6"></div><div class="cb" style="left:77px;top:169px;width:14px;height:14px;"></div><svg style="left:77px;top:169px" width="14" height="14" viewBox="0 0 14 14"><path d="M3.2 7.2L5.8 10.6L10.6 3" fill="none" stroke="#111" stroke-width="1.9"/></svg><div class="cb" style="left:77px;top:188px;width:14px;height:14px;"></div><svg style="left:77px;top:188px" width="14" height="14" viewBox="0 0 14 14"><path d="M3.2 7.2L5.8 10.6L10.6 3" fill="none" stroke="#111" stroke-width="1.9"/></svg><div class="a" style="left:101.5px;top:172.8px;width:7px;height:7px;border-radius:50%;background:#d7263d"></div><div class="a" style="left:97px;top:187px;width:16px;height:16px;background:#fff;border:1px solid #8a8a8a"></div><div class="t" style="left:119.50px;top:171.00px;font-size:12.5px;font-family:'Liberation Sans',sans-serif;font-weight:bold;color:#ffffff;transform:scaleX(1.1871);">stompcovidph_provinces copy</div><div class="a" style="left:119.5px;top:182.6px;width:218.5px;height:1px;background:#fff"></div><div class="t" style="left:119.50px;top:190.00px;font-size:12.5px;font-family:'Liberation Sans',sans-serif;font-weight:bold;color:#000000;transform:scaleX(1.1853);">stompcovidph_provinces</div><div class="a" style="left:53px;top:955px;width:293px;height:1px;background:#b4b4b4"></div><div class="a" style="left:53.5px;top:956px;width:67px;height:27px;background:#f5f5f5;border:1px solid #c0c0c0;border-top:none;border-radius:0 0 3px 3px"></div><div class="a" style="left:121px;top:957px;width:76px;height:23px;background:#dcdcdc;border:1px solid #c6c6c6;border-top:none;border-radius:0 0 3px 3px"></div><div class="t" style="left:65.20px;top:964.00px;font-size:12.7px;font-family:'Liberation Sans',sans-serif;font-weight:normal;color:#1b1b1b;transform:scaleX(1.1076);">Layers</div><div class="t" style="left:133.00px;top:963.00px;font-size:12.7px;font-family:'Liberation Sans',sans-serif;font-weight:normal;color:#1b1b1b;transform:scaleX(1.1242);">Browser</div><div class="a" style="left:352px;top:116px;width:985px;height:868px;background:#fff;border:1px solid #a5a5a5"></div><svg style="left:0;top:0" width="1922" height="1055" viewBox="0 0 1922 1055"><g fill="none" stroke="#444" stroke-width="0.8" stroke-linejoin="round"><path d="M831.0 400.0 L833.0 397.8 L833.8 395.0 L836.9 394.0 L839.5 392.1 L842.4 390.8 L845.1 389.3 L848.1 388.6 L850.8 387.4 L853.7 386.5 L856.2 384.7 L858.0 382.2 L860.2 380.5 L862.7 379.3 L865.1 378.0 L866.7 375.2 L868.0 372.3 L869.2 369.6 L868.9 366.6 L869.4 363.7 L871.6 360.6 L874.4 358.1 L876.0 355.9 L876.9 353.4 L877.9 350.9 L878.9 347.2 L880.8 343.8 L882.0 341.1 L882.6 338.3 L882.2 335.3 L879.3 332.5 L879.2 329.5 L877.9 326.8 L876.3 324.1 L873.6 322.5 L870.6 320.7 L868.0 318.2 L866.9 315.2 L865.1 312.6 L865.5 309.6 L864.9 306.8 L864.2 304.0 L863.3 301.3 L863.7 298.3 L863.9 295.5 L864.6 292.7 L865.5 289.9 L865.1 287.0 L867.6 285.7 L868.9 283.1 L870.8 281.3 L872.5 278.7 L872.9 275.6 L870.9 273.0 L870.1 269.6 L868.0 267.1 L865.5 264.5 L863.0 262.1 L863.5 265.4 L862.3 268.5 L859.8 271.1 L858.0 274.2 L854.5 275.8 L850.9 277.0 L848.5 275.6 L845.9 275.0 L842.9 275.3 L840.7 273.6 L838.1 272.7 L835.9 270.7 L832.8 270.3 L830.3 268.8 L828.2 266.5 L825.3 265.6 L822.2 264.6 L819.7 262.5 L816.6 261.6 L813.9 259.7 L810.7 259.4 L807.7 260.3 L804.7 261.4 L802.6 262.1 L799.0 259.2 L795.5 260.0 L792.6 261.2 L790.1 263.0 L786.9 263.5 L784.1 264.9 L784.2 268.0 L783.6 271.1 L783.4 274.2 L781.9 276.8 L782.6 280.0 L781.2 282.7 L780.4 285.5 L779.4 288.3 L779.0 291.2 L778.4 294.1 L777.7 296.9 L776.1 300.3 L775.5 304.0 L774.4 307.6 L773.4 311.1 L774.1 313.9 L776.1 316.0 L777.7 318.2 L778.6 321.1 L779.8 323.9 L779.2 326.8 L778.4 329.6 L778.0 332.5 L778.1 335.3 L777.7 338.2 L777.8 341.0 L778.5 343.8 L778.4 346.7 L775.5 348.1 L775.0 351.1 L773.9 354.0 L772.2 356.6 L771.3 359.5 L771.4 363.1 L772.0 366.6 L772.7 369.4 L774.1 372.1 L773.7 375.2 L774.8 378.0 L777.0 380.8 L774.9 383.3 L774.1 386.5 L771.1 386.5 L768.3 387.3 L765.6 388.6"/><path d="M772.3 360.0 L773.2 363.0 L772.2 366.1 L773.1 369.1 L773.1 372.2 L774.5 375.1 L774.6 378.2 L776.9 382.7 L774.0 384.1 L771.2 385.5 L768.2 386.5 L765.5 388.1 L760.9 386.5 L759.9 383.6 L757.9 381.2 L756.2 378.4 L755.1 375.4 L754.9 372.1 L751.1 369.9 L748.1 370.8 L745.8 372.9 L745.1 376.3 L744.3 379.7 L743.8 382.4 L745.2 385.0 L744.4 387.7 L744.3 390.3 L745.1 392.9 L747.1 395.0 L747.2 398.0 L748.5 400.4 L750.3 402.5 L751.5 405.4 L751.8 408.4 L751.2 411.6 L750.8 414.7 L751.8 417.6 L753.2 420.6 L754.6 423.5 L755.4 426.7 L756.4 429.8 L757.9 434.3"/><path d="M835.3 396.4 L835.2 399.6 L836.0 402.7 L837.5 405.5 L837.0 408.4 L835.7 410.9 L833.7 413.1 L831.4 414.5 L829.6 416.6 L827.8 418.5 L826.2 420.7 L825.7 424.5 L824.6 428.2 L826.0 430.9 L827.5 433.4 L829.2 435.8 L830.6 438.9 L832.8 441.6 L833.7 444.9 L835.4 447.0 L836.9 449.1 L838.0 451.5 L839.1 453.9 L841.3 455.5 L836.8 457.1 L835.5 460.0 L835.7 463.1 L835.3 466.2"/><path d="M757.3 433.3 L757.9 436.2 L757.5 439.2 L758.0 442.2 L757.9 445.2 L758.8 447.9 L759.9 450.6 L761.2 453.2 L763.4 450.3 L766.5 448.5 L768.5 451.8 L771.0 454.8 L771.8 458.5 L773.4 460.9 L775.8 462.5 L775.2 466.4 L778.5 470.4 L781.7 469.3 L785.1 469.1 L785.3 466.3 L786.4 463.8 L786.3 460.8 L784.4 458.5 L784.0 455.6 L782.5 453.2 L785.1 452.5 L787.8 451.8 L790.4 452.5 L793.2 452.1 L795.7 453.2 L799.0 454.7 L802.4 455.8 L803.7 459.8 L803.6 462.6 L804.7 465.1 L804.9 467.9 L805.5 470.5 L806.3 473.1 L804.0 471.4 L803.2 468.4 L801.0 466.4 L798.9 468.7 L797.3 471.3 L795.7 474.0 L793.1 475.7 L789.7 477.2 L787.1 479.7 L786.5 483.0 L785.8 486.3 L785.5 489.0 L785.4 491.7 L785.8 494.3 L785.6 497.0 L786.4 499.6 L789.1 502.3 L790.9 499.5 L793.1 497.0 L796.4 497.5 L799.7 497.0 L800.5 500.3 L801.0 503.6 L799.7 507.6 L802.7 508.8 L805.8 509.1 L809.0 508.9 L811.8 508.9 L814.5 509.6 L817.1 510.4 L819.6 511.6 L823.4 510.3 L826.3 507.6 L827.1 504.9 L828.2 502.3 L827.6 499.6 L830.3 499.2 L832.9 498.3 L835.8 496.4 L839.1 495.2 L842.2 493.6 L846.2 495.6 L848.9 496.8 L851.5 498.3 L854.2 499.4 L856.7 501.1 L859.4 502.3 L862.0 505.0 L864.7 507.6 L865.4 510.6 L867.4 512.9"/><path d="M771.8 516.9 L775.0 515.4 L778.5 514.9 L781.5 514.3 L784.5 515.0 L787.5 514.8 L790.4 515.5 L793.1 514.8 L795.7 515.4 L798.4 516.3 L801.0 515.5 L803.7 514.9 L806.1 516.8 L808.8 518.3 L811.9 518.9 L814.3 520.8 L816.3 522.9 L818.6 524.5 L820.7 526.4 L822.3 528.8 L825.4 530.2 L827.6 532.8 L830.5 534.4 L832.9 536.8 L832.1 539.4 L832.3 542.1 L832.3 544.7 L832.9 547.4 L832.0 550.5 L832.8 553.7 L832.2 556.9 L831.6 560.0 L829.6 564.6 L827.7 566.7 L825.8 568.7 L823.9 570.8 L822.2 572.9 L821.6 576.0 L819.2 577.6 L817.6 579.9 L815.2 578.6 L812.6 577.8 L809.8 577.2 L807.5 575.7 L805.0 574.6 L802.8 572.7 L802.3 569.5 L800.6 567.2 L798.5 565.3 L796.4 563.2 L795.1 560.7 L795.6 557.9 L794.8 555.3 L794.4 552.7 L794.8 550.0 L794.4 547.3 L793.4 544.7 L793.1 542.1 L791.0 540.2 L789.2 538.0 L787.0 536.2 L785.1 534.1 L783.3 532.1 L782.2 529.6 L781.6 526.9 L779.8 524.8 L776.1 523.5 L773.2 520.8 L771.8 516.9"/><path d="M757.3 497.0 L760.3 498.1 L763.3 499.2 L766.5 499.6 L769.1 500.8 L771.8 500.9 L773.2 504.9 L774.6 507.5 L777.2 508.9 L774.6 507.6 L772.1 506.4 L769.2 506.3 L766.1 505.2 L763.9 502.8 L761.2 500.9 L759.8 498.4 L757.3 497.0"/><path d="M846.2 441.2 L850.1 438.6 L853.4 439.8 L856.8 439.9 L856.9 443.3 L858.1 446.5 L861.4 447.8 L864.7 449.2 L867.0 450.9 L868.7 453.2 L865.5 453.6 L862.6 452.0 L859.4 451.8 L856.1 451.9 L852.8 451.8 L853.0 455.3 L854.1 458.5 L851.5 459.8 L849.9 456.6 L848.8 453.2 L848.6 449.8 L847.5 446.5 L846.4 444.0 L846.2 441.2"/><path d="M847.5 514.2 L850.7 513.2 L854.1 512.9 L857.0 513.2 L859.3 514.9 L862.1 515.5 L863.3 518.1 L862.9 520.9 L863.4 523.5 L861.4 526.3 L859.6 529.3 L856.8 531.5 L854.1 531.0 L851.3 531.4 L848.8 530.1 L847.8 527.1 L846.3 524.2 L846.2 520.8 L846.1 517.4 L847.5 514.2"/><path d="M818.3 466.4 L820.9 465.1 L823.6 467.8 L823.6 470.5 L821.9 472.9 L822.3 475.7 L819.6 473.1 L817.0 470.4 L818.3 466.4"/><path d="M840.0 471.9 L842.0 474.6 L844.0 477.3 L843.5 480.0 L842.7 482.6 L845.7 484.0 L848.0 486.5 L850.0 488.4 L853.0 488.4 L854.9 490.5 L857.3 491.8 L860.1 493.5 L863.7 493.1 L866.5 494.8 L868.5 492.5"/><path d="M840.0 492.5 L842.6 493.1 L845.3 493.3 L848.0 493.8 L851.0 495.5 L854.4 496.5 L857.3 498.5 L859.1 500.7 L861.3 502.5 L863.9 503.8 L865.9 505.8 L868.7 506.9 L870.5 509.1 L873.2 511.1 L875.8 513.1 L878.1 515.5 L879.8 518.4 L881.1 520.9 L880.8 524.0 L882.5 526.3 L883.7 530.1 L886.4 533.0 L887.6 530.3 L890.5 529.0 L891.8 526.3 L891.0 523.6 L889.8 521.1 L889.1 518.4 L887.4 516.3 L886.7 513.6 L885.0 511.5 L883.8 509.1 L882.8 505.9 L881.4 502.8 L879.8 499.8 L878.2 497.0 L877.8 493.8 L880.8 494.3 L883.8 493.8 L885.9 496.8 L889.1 498.5 L890.7 501.7 L893.4 503.9 L895.7 506.4 L898.5 507.6 L900.7 509.3 L902.4 511.8 L905.0 512.2 L906.8 514.6 L909.7 514.6 L912.0 515.8 L914.3 517.1 L915.7 520.7 L918.3 523.7 L919.9 526.2 L920.9 529.0 L921.2 531.7 L921.7 534.3 L922.7 536.9 L922.3 539.6 L924.9 539.8 L927.6 540.2 L930.2 539.0 L932.9 539.1 L935.5 539.6 L937.9 540.8 L940.6 541.5 L942.5 543.6 L944.8 544.9 L945.6 547.8 L947.2 550.4 L948.8 552.9 L950.1 555.6 L950.9 558.5 L953.4 560.6 L954.1 563.5 L956.8 563.6 L959.4 563.3 L962.1 563.5 L962.6 560.9 L962.0 558.1 L963.5 555.6 L962.5 552.8 L963.0 550.2 L964.4 547.6 L964.9 545.0 L964.3 542.3 L964.7 539.6 L962.0 539.1 L959.4 538.3 L956.7 538.3 L954.1 537.8 L951.5 537.0 L948.9 536.1 L946.2 535.6"/><path d="M870.5 490.5 L868.5 488.6 L866.5 486.5 L868.0 483.3 L869.2 479.9 L869.8 482.9 L871.9 485.2 L873.2 487.9 L872.7 485.2 L872.4 482.5 L871.8 479.9 L874.2 477.5 L877.2 475.9 L879.8 475.1 L882.5 474.4 L885.1 473.3 L887.6 474.4 L890.6 473.9 L893.1 475.3 L895.9 476.0 L898.7 476.8 L901.0 478.6 L902.6 481.0 L904.8 482.8 L907.6 484.0 L909.0 486.5 L908.5 489.3 L908.8 492.0 L909.7 494.5 L910.3 497.2 L911.9 499.5 L914.3 501.2 L915.6 503.8 L917.8 501.1 L920.9 499.8 L920.8 496.7 L919.7 493.7 L920.3 490.5 L923.6 486.5 L926.1 489.6 L927.6 493.2 L930.2 492.7 L932.9 492.3 L935.5 493.1 L938.2 493.2 L940.9 494.4 L943.2 496.4 L946.1 497.2 L948.8 498.5 L951.3 500.7 L954.1 502.5 L951.5 503.3 L948.7 504.0 L946.2 505.1 L943.5 505.2 L940.8 505.5 L938.2 504.2 L935.5 505.1 L933.4 507.4 L932.9 510.4 L933.0 513.2 L934.2 515.7 L936.3 517.7 L939.1 518.8 L941.5 520.3 L943.5 522.4 L946.0 523.4 L948.5 524.3 L950.2 526.8 L952.8 527.7 L955.5 528.3 L957.9 529.9 L960.8 529.9 L963.2 531.6 L966.1 531.7 L962.6 532.1 L959.4 533.6 L956.9 535.0 L954.2 535.2 L951.3 534.4 L948.8 535.6 L946.2 538.3"/><path d="M959.4 507.8 L960.7 505.1 L962.3 502.6 L963.4 499.8 L964.0 497.2 L963.4 494.4 L963.5 491.7 L964.7 489.2 L968.7 487.9 L970.9 491.1 L972.7 494.5 L975.0 497.6 L976.7 501.1 L975.8 504.1 L975.7 507.1 L975.5 510.1 L975.4 513.1 L972.7 513.4 L970.0 513.7 L967.4 514.4 L964.3 512.7 L962.0 510.1 L959.4 507.8"/><path d="M902.4 534.3 L905.7 533.9 L909.0 534.3 L911.4 537.2 L914.3 539.6 L915.8 542.5 L917.3 545.3 L919.6 547.6 L921.9 549.9 L923.6 552.6 L924.9 555.5 L922.0 554.8 L919.6 552.9 L916.6 551.1 L914.6 548.1 L911.7 546.3 L909.0 545.0 L907.3 542.7 L905.0 540.9 L903.2 537.8 L902.4 534.3"/><path d="M840.0 460.0"/><path d="M918.1 561.2 L920.8 563.5 L924.2 564.3 L928.0 565.0 L930.7 565.5 L932.3 567.9 L934.8 568.8 L937.8 572.6 L940.5 573.9 L941.8 576.8 L944.7 577.9 L948.4 579.4 L950.9 581.5 L951.4 584.9 L953.8 587.0 L955.8 590.2 L958.3 593.1 L960.6 597.6 L959.2 601.3 L959.1 605.2 L957.9 602.4 L955.3 600.7 L952.4 599.6 L950.0 597.6 L947.3 596.4 L945.1 594.3 L942.4 593.1 L940.2 591.1 L938.6 588.5 L936.0 585.8 L934.0 582.5 L929.5 581.0 L927.8 583.3 L925.0 584.5 L923.4 587.0 L920.7 588.8 L918.5 591.2 L916.9 594.2 L914.3 596.1 L916.3 593.4 L916.9 590.1 L918.1 587.0 L918.4 583.1 L919.6 579.4 L918.8 576.4 L918.0 573.4 L917.4 570.3 L916.9 567.2 L918.0 564.3 L918.1 561.2"/><path d="M935.6 555.2 L938.0 557.3 L940.1 559.7 L941.7 562.7 L943.3 565.7 L944.7 568.8 L945.9 572.2 L946.9 575.6 L945.0 573.5 L943.6 570.9 L941.6 568.8 L939.6 566.6 L938.4 563.8 L935.8 561.9 L934.8 559.0 L935.6 555.2"/><path d="M855.2 562.0 L857.5 560.5 L860.0 559.4 L862.0 557.4 L864.3 559.7 L862.7 562.1 L863.1 565.1 L861.5 567.5 L861.2 570.3 L860.4 573.3 L859.9 576.4 L859.7 579.4 L858.8 582.8 L856.7 585.5 L854.1 583.8 L852.9 581.0 L853.4 577.5 L854.4 574.1 L852.1 571.9 L853.6 568.7 L853.7 565.1 L855.2 562.0"/><path d="M868.8 558.2 L871.2 560.1 L872.6 562.8 L872.6 566.5 L872.1 563.8 L871.1 561.2"/><path d="M877.9 567.3 L882.5 565.8 L885.8 567.2 L889.3 568.1 L890.8 572.6 L888.5 577.2 L885.8 574.8 L882.5 573.4 L880.2 571.8 L877.9 570.3 L877.9 567.3"/><path d="M853.3 593.3 L851.6 595.5 L851.0 598.1 L849.8 600.6 L849.3 603.2 L851.8 604.4 L854.7 603.8 L857.2 605.0 L859.9 605.2 L859.5 608.0 L859.9 610.6 L860.8 613.2 L861.2 615.8 L860.8 618.7 L859.4 621.2 L857.4 623.5 L857.3 626.4 L857.6 629.2 L856.9 631.8 L855.5 634.3 L855.9 637.1 L855.3 640.1 L855.1 643.1 L854.3 646.1 L853.3 649.0 L852.9 651.7 L854.2 654.3 L854.4 656.9 L854.6 659.6 L853.7 662.2 L852.7 664.8 L852.6 667.6 L851.9 670.2 L854.4 668.8 L857.3 668.9 L858.7 665.6 L859.9 662.3 L862.8 659.6 L866.5 658.3 L869.3 657.2 L872.2 657.1 L875.2 657.6 L878.0 656.6 L881.0 657.0 L883.8 656.3 L886.4 654.3 L889.4 651.8 L893.1 650.3 L892.8 647.6 L893.1 644.9 L894.4 642.4 L896.8 640.9 L899.2 639.3 L901.0 637.1 L903.5 635.3 L906.1 634.0 L909.0 633.1 L909.5 630.0 L911.7 627.8 L912.4 625.2 L912.2 622.4 L913.0 619.8 L913.0 616.4 L914.3 613.2 L911.6 613.6 L909.0 614.5 L905.6 615.7 L902.4 617.2 L900.3 613.9 L898.4 610.5 L895.9 611.8 L893.1 611.8 L890.3 612.5 L887.7 613.5 L885.1 614.5 L882.4 613.3 L879.8 611.8 L877.2 610.1 L875.9 606.9 L873.2 605.2 L871.2 603.3 L868.7 602.3 L866.7 600.5 L863.9 599.9 L861.3 598.1 L858.4 596.8 L855.6 595.5 L853.3 593.3"/><path d="M881.1 664.9 L882.4 661.9 L885.0 659.8 L886.4 657.0 L889.2 656.5 L891.8 655.6 L892.5 658.3 L893.1 660.9 L892.2 663.8 L890.4 666.3 L886.8 667.8 L883.8 670.2 L883.0 667.3 L881.1 664.9"/><path d="M897.1 664.9 L898.9 662.6 L898.7 659.4 L899.6 656.6 L902.3 654.7 L902.1 651.4 L903.7 649.0 L904.9 646.4 L907.4 644.7 L909.0 642.4 L911.6 641.9 L914.4 642.7 L916.9 641.4 L919.6 641.7 L922.1 643.0 L925.0 642.4 L927.5 643.4 L930.2 643.7 L930.9 646.7 L932.9 649.0 L932.6 651.7 L932.1 654.3 L932.9 657.0 L931.4 659.2 L931.4 662.2 L928.9 664.0 L928.3 666.6 L927.7 669.3 L926.3 671.6 L923.7 672.8 L920.9 672.9 L919.4 675.7 L918.8 678.8 L917.2 681.6 L917.0 684.8 L915.6 687.3 L914.4 689.9 L914.3 692.8 L913.7 695.4 L912.9 698.0 L912.5 700.7 L912.6 703.5 L911.7 706.1 L911.4 709.0 L913.0 711.6 L912.8 714.5 L913.0 717.4 L914.3 720.0"/><path d="M897.1 664.9 L896.6 667.7 L896.9 670.3 L897.4 673.0 L898.4 675.5 L899.5 678.1 L898.9 680.9 L899.5 683.5 L899.7 686.2 L896.6 687.4 L893.8 689.4 L890.4 690.1 L887.6 691.3 L884.5 691.6 L881.6 692.6 L878.5 692.8 L876.6 695.5 L874.5 698.1 L876.2 701.0 L877.0 704.1 L877.2 707.4 L879.1 710.3 L881.7 712.6 L883.8 715.4 L885.1 717.7 L886.4 720.0"/><path d="M954.1 629.1 L958.1 627.8 L957.6 630.4 L957.2 633.0 L958.2 635.8 L956.5 638.3 L957.8 641.1 L956.8 643.7 L957.7 646.4 L956.8 649.0 L956.3 651.7 L957.4 654.3 L956.4 657.0 L956.4 659.6 L956.3 662.3 L956.8 664.9 L956.4 667.6 L955.2 670.1 L955.4 672.9 L952.7 674.0 L951.5 677.0 L948.8 678.2 L946.8 680.2 L944.2 681.6 L942.5 683.9 L940.8 686.2 L939.2 688.9 L937.6 691.7 L935.5 694.1 L933.5 696.0 L933.5 699.1 L931.2 700.9 L930.2 703.4 L928.4 705.4 L928.1 708.4 L926.5 710.5 L924.9 712.7 L923.9 716.5 L922.3 720.0"/><path d="M954.1 629.1 L953.3 631.8 L951.3 634.1 L950.4 636.8 L950.4 639.9 L948.8 642.4 L946.9 644.7 L945.9 647.6 L945.6 650.7 L942.8 652.6 L942.6 655.8 L940.8 658.3 L939.5 660.9 L937.8 663.1 L935.9 665.4 L935.0 668.2 L932.9 670.2 L931.5 672.8 L930.2 675.3 L929.7 678.2 L928.1 680.7 L927.6 683.5 L926.7 686.1 L925.7 688.7 L926.1 691.6 L925.2 694.2 L924.3 696.8 L923.6 699.4 L923.9 702.5 L922.0 705.2 L922.2 708.2 L922.8 711.3 L921.6 714.1 L921.5 717.1 L920.9 720.0"/><path d="M946.2 696.8 L948.7 694.4 L950.2 691.1 L952.8 688.8 L954.8 686.7 L957.5 685.6 L959.3 683.2 L962.1 682.2 L964.8 682.3 L967.4 682.0 L969.9 680.4 L972.7 680.8 L976.3 681.8 L980.0 682.2"/><path d="M944.8 706.1 L947.3 708.9 L950.1 711.4 L953.2 712.2 L956.2 713.1 L959.4 712.7 L961.9 711.5 L964.5 710.6 L967.5 711.3 L970.0 710.0 L973.3 708.9 L976.6 708.1 L980.0 707.4"/><path d="M938.2 638.4 L938.5 635.5 L939.6 632.8 L941.3 630.5 L942.2 627.8 L946.2 630.4 L946.2 634.4 L943.6 635.6 L940.8 635.7"/><path d="M970.0 613.2 L971.3 616.5 L972.7 619.8 L973.2 622.4 L972.6 625.2 L973.9 627.7 L973.7 630.4 L974.0 633.1 L975.0 635.7 L975.5 638.3 L975.2 641.2 L976.7 643.7 L978.9 646.0 L980.0 649.0"/><path d="M969.9 563.9 L972.0 560.6 L973.9 557.3 L976.0 559.2 L978.1 561.1 L979.2 563.9 L981.8 564.5 L984.6 564.0 L987.2 564.4 L989.8 565.2 L993.1 563.7 L996.4 562.6 L999.6 562.4 L1002.8 562.5 L1005.7 561.2 L1009.0 561.2 L1012.4 561.2 L1013.6 563.7 L1015.5 565.6 L1018.3 566.5 L1020.3 568.1 L1021.7 570.5 L1023.5 572.9 L1024.3 575.8 L1026.1 578.1 L1028.6 579.5 L1030.9 581.1 L1031.6 584.7 L1033.6 587.8 L1030.9 589.9 L1029.6 593.1 L1028.9 595.7 L1028.7 598.4 L1028.3 601.0 L1029.7 603.5 L1030.4 606.1 L1029.7 609.1 L1030.6 611.7 L1031.1 614.4 L1032.3 617.0 L1033.9 619.7 L1035.5 622.4 L1037.6 624.9 L1036.7 628.2 L1036.3 631.6 L1038.5 634.1 L1041.6 635.5 L1043.8 637.8 L1044.9 640.8 L1046.8 643.3 L1048.2 646.2 L1046.4 643.1 L1044.3 640.4 L1041.6 638.2 L1038.3 637.3 L1035.1 636.2 L1032.3 634.2 L1029.7 635.1 L1027.0 635.4 L1024.3 635.5 L1021.7 635.1 L1019.0 635.5 L1016.3 632.9 L1014.9 630.3 L1013.7 627.6 L1010.5 626.5 L1007.1 626.3 L1004.8 623.8 L1003.1 620.9 L1000.4 619.6 L997.8 618.3 L995.1 614.3 L992.9 612.0 L991.8 608.9 L989.8 606.3 L988.5 603.7 L987.7 600.7 L986.6 598.0 L984.5 595.7 L983.2 593.1 L980.9 591.2 L980.5 588.0 L978.8 585.6 L976.5 583.8 L974.5 580.5 L972.6 577.2 L972.0 574.5 L972.3 571.7 L970.5 569.3 L970.0 566.6 L969.9 563.9"/><path d="M971.2 614.3 L973.3 616.6 L974.5 619.3 L975.2 622.3 L975.0 625.0 L974.0 627.5 L973.9 630.2 L974.9 632.8 L975.2 635.5 L975.4 638.1 L975.2 640.8 L974.7 643.5 L975.2 646.2 L978.0 646.2 L980.5 647.5 L982.6 645.5 L984.3 643.2 L985.8 640.8 L988.8 641.6 L991.1 643.5 L992.4 645.9 L993.9 648.1 L995.3 650.4 L996.4 652.8 L995.0 655.3 L996.1 658.2 L995.7 660.9 L993.5 663.3 L993.8 666.1 L993.7 668.9 L993.8 671.7 L993.3 674.5 L993.0 677.2 L992.5 680.0"/><path d="M981.8 622.3 L984.8 622.9 L987.4 624.5 L989.8 626.3 L992.9 624.0 L996.4 622.3 L1000.0 621.6 L1003.1 619.6 L1004.4 622.9 L1005.7 626.3 L1005.8 629.4 L1007.3 632.3 L1007.1 635.5 L1007.0 638.2 L1006.4 640.8 L1007.0 643.5 L1006.3 646.2 L1006.4 648.8 L1007.3 651.5 L1007.1 654.1 L1009.6 656.3 L1010.2 659.7 L1012.4 662.1 L1014.9 664.3 L1016.3 667.4 L1017.9 670.4 L1017.3 673.8 L1017.7 677.0 L1019.0 680.0"/><path d="M971.2 614.3 L973.8 615.8 L976.4 617.2 L978.9 618.8 L981.8 619.6"/><path d="M972.6 607.7 L975.2 607.3 L977.9 606.9 L980.5 606.3 L982.7 609.4 L985.8 611.7 L983.9 614.0 L983.2 617.0 L980.0 615.6 L976.5 615.6 L975.0 613.1 L974.6 610.0 L972.6 607.7"/><path d="M1032.3 680.0 L1033.2 677.1 L1034.5 674.4 L1034.9 671.4 L1038.9 668.7 L1040.2 672.7 L1038.5 676.2 L1037.6 680.0"/><path d="M1038.9 651.5 L1042.9 650.1 L1045.8 652.6 L1048.2 655.4 L1045.3 655.3 L1042.9 656.8 L1041.6 653.6 L1038.9 651.5"/><path d="M950.0 557.3 L952.5 559.2 L955.7 559.9 L957.8 562.4 L960.6 563.9 L961.9 561.4 L962.5 558.7 L962.6 555.9 L963.3 553.3 L963.8 550.6 L963.6 547.9 L964.1 545.3 L963.6 542.6 L964.6 540.0"/><path d="M950.0 579.8 L950.9 582.6 L952.3 585.1 L952.9 587.9 L955.1 590.1 L955.2 593.2 L956.6 595.7 L958.0 598.8 L958.7 602.0 L960.0 605.0"/><path d="M922.3 760.0 L921.4 762.9 L919.6 765.3 L917.0 765.8 L914.4 766.5 L911.7 766.5 L909.0 766.6 L906.9 769.9 L905.0 773.3 L904.1 776.5 L903.7 779.9 L901.3 782.0 L898.5 783.7 L895.7 785.2 L892.3 785.1 L889.1 783.9 L885.8 784.2 L883.0 786.0 L879.8 786.5 L876.8 787.2 L874.8 789.9 L871.8 790.5 L870.3 793.4 L867.5 795.0 L865.2 797.2 L864.0 799.5 L862.2 801.6 L860.7 803.8 L859.9 806.4 L860.3 809.5 L861.1 812.6 L861.2 815.7 L860.4 818.3 L860.4 821.1 L859.9 823.7 L858.3 826.6 L855.9 829.0 L854.2 831.2 L851.9 833.0 L852.5 836.4 L851.3 839.6 L852.6 842.5 L854.6 844.9 L857.6 845.5 L859.9 847.6 L863.0 845.7 L866.5 844.9 L870.5 842.3 L869.8 839.5 L869.0 836.9 L867.9 834.3 L869.4 831.3 L870.7 828.2 L871.8 825.0 L874.3 822.7 L875.8 819.7 L878.5 816.8 L879.8 813.1 L882.5 810.2 L883.8 806.4 L887.0 804.3 L890.4 802.5 L893.1 802.9 L895.7 803.8 L896.8 806.8 L896.7 810.0 L897.1 813.1 L898.9 815.5 L899.7 818.4 L897.7 821.4 L897.1 825.0 L901.0 826.3 L903.4 824.0 L905.0 821.0 L905.2 818.3 L906.3 815.7 L907.3 813.2 L907.7 810.4 L910.3 807.8 L911.3 810.6 L913.0 813.1 L915.6 815.7 L918.7 813.7 L922.3 813.1 L926.3 815.7 L926.4 819.2 L927.6 822.4 L924.9 818.4 L924.7 815.6 L923.6 813.1 L925.5 809.7 L927.6 806.4 L929.0 803.3 L928.9 799.8 L931.4 798.4 L934.2 798.5 L937.7 798.3 L940.8 799.8 L943.2 802.7 L946.2 805.1 L949.4 806.1 L952.8 806.4 L955.6 807.5 L957.1 810.1 L959.4 811.8 L961.3 815.2 L963.4 818.4 L966.1 822.4 L964.6 825.1 L963.3 828.0 L960.6 830.0 L959.4 833.0 L957.1 834.8 L955.8 837.3 L954.1 839.6 L954.6 842.6 L954.0 845.6 L953.9 848.6 L954.1 851.6 L956.8 855.5 L957.1 858.2 L956.9 860.9 L958.3 863.4 L958.1 866.2 L958.4 869.1 L959.7 871.6 L961.7 873.9 L962.1 876.8 L964.6 878.2 L965.7 881.1 L968.3 882.5 L970.0 884.7 L972.2 886.7 L974.7 888.1 L977.7 888.4 L980.0 890.0"/><path d="M940.8 760.0 L942.6 762.6 L943.6 765.7 L946.5 767.5 L947.5 770.6 L948.2 773.6 L947.3 776.7 L948.2 779.6 L948.8 782.6 L946.6 785.7 L943.5 787.9 L940.9 788.8 L938.2 789.2"/><path d="M950.0 782.9 L952.6 782.2 L955.2 781.5 L958.0 781.6 L960.3 779.7 L963.6 779.6 L966.0 777.7 L968.6 776.3 L969.6 773.3 L970.0 770.3 L970.4 767.3 L971.2 764.3 L974.1 763.4 L976.6 761.8 L979.2 760.3 L981.3 762.1 L983.7 763.2 L985.9 764.8 L988.5 765.6 L991.2 766.2 L993.8 767.0 L994.6 764.0 L995.9 761.4 L997.8 759.0 L996.8 756.2 L995.1 753.7 L994.5 751.0 L995.4 748.4 L995.3 745.7 L995.1 743.1 L997.4 741.0 L1000.4 740.4 L1003.5 742.9 L1007.1 744.4 L1009.7 746.6 L1011.0 749.7 L1013.5 748.2 L1015.0 745.7 L1016.1 743.2 L1015.4 740.3 L1016.3 737.8 L1016.6 740.5 L1017.7 743.1 L1019.0 741.1 L1021.6 741.7 L1024.4 740.7 L1026.9 741.9 L1029.6 741.8 L1029.6 738.6 L1031.7 735.9 L1031.9 732.9 L1032.3 729.8 L1032.4 726.9 L1030.2 724.7 L1030.0 721.9 L1029.6 719.2 L1029.3 716.5 L1028.7 713.8 L1027.5 711.3 L1028.2 708.4 L1027.0 705.9 L1028.3 701.9 L1031.5 703.2 L1034.9 703.3 L1037.0 705.3 L1039.0 707.3 L1040.2 709.9 L1042.7 711.9 L1045.6 713.3 L1048.2 715.2 L1050.0 718.0 L1052.2 720.5 L1055.5 721.2 L1058.8 721.8 L1061.6 723.7 L1064.1 725.8 L1066.2 728.1 L1066.8 731.1 L1067.9 734.1 L1067.7 737.3 L1068.1 740.4 L1069.8 743.3 L1072.1 745.7 L1070.9 749.1 L1069.4 752.4 L1066.5 754.7 L1064.1 757.7 L1063.4 761.0 L1062.8 764.3 L1065.4 765.3 L1068.1 765.3 L1070.8 765.0 L1073.4 765.6 L1075.3 768.7 L1076.1 772.3 L1077.3 774.8 L1077.8 777.4 L1077.4 780.2 L1076.4 782.8 L1076.1 785.5 L1075.9 788.1 L1076.1 790.8 L1077.2 793.4 L1076.7 796.2 L1077.4 798.8 L1080.5 801.0 L1082.7 804.1 L1082.9 807.0 L1084.2 809.5 L1085.4 812.1 L1085.1 815.1 L1085.6 818.1 L1086.2 821.0 L1085.6 824.1 L1085.6 827.1 L1086.7 830.0"/><path d="M950.0 709.9 L952.6 710.5 L955.4 709.7 L958.0 710.5 L960.6 711.2 L963.2 710.5 L966.0 711.1 L968.6 710.8 L971.3 710.9 L973.9 709.9 L975.6 707.6 L978.2 706.3 L980.5 704.6 L983.0 703.1 L985.8 703.3 L985.1 700.7 L985.3 698.0 L984.2 695.4 L984.2 692.7 L984.5 690.0"/><path d="M1048.2 695.3 L1051.3 693.8 L1054.8 694.0 L1056.8 696.4 L1059.7 698.0 L1061.5 700.6 L1062.2 703.3 L1062.5 706.0 L1062.9 708.7 L1064.1 711.2 L1061.5 712.6 L1058.8 713.9 L1055.5 711.9 L1052.2 709.9 L1050.5 707.2 L1050.5 704.1 L1049.6 701.2 L1049.6 698.1 L1048.2 695.3"/><path d="M988.5 729.8 L992.5 729.1 L995.8 732.5 L993.8 736.4 L989.8 735.8 L989.0 732.8 L988.5 729.8"/><path d="M950.0 805.3 L952.8 805.8 L955.3 807.1 L958.0 808.0 L959.9 810.0 L960.9 812.6 L962.6 814.8 L964.0 817.1 L964.6 819.9 L966.3 823.1 L967.3 826.5 L965.5 829.2 L963.1 831.2 L960.6 833.2 L958.5 835.1 L957.7 838.1 L955.3 839.8 L954.8 842.4 L955.3 845.2 L953.8 847.7 L954.0 850.4 L955.6 853.3 L958.0 855.7 L958.5 858.4 L957.3 861.0 L957.6 863.7 L958.7 866.3 L958.0 869.0 L959.4 871.6 L960.3 874.5 L961.9 877.0 L963.6 879.7 L966.8 881.0 L968.6 883.6 L971.4 884.5 L973.7 886.7 L976.5 887.6 L978.8 889.7 L982.2 889.6 L984.8 890.9 L987.2 892.9 L989.7 894.3 L992.6 894.6 L995.2 895.7 L997.8 896.9 L1000.3 897.9 L1003.0 898.0 L1005.7 898.2 L1008.4 898.2 L1010.3 895.8 L1011.0 892.9 L1014.5 891.9 L1017.7 890.2 L1017.8 893.0 L1019.0 895.5 L1016.8 898.7 L1015.0 902.2 L1016.9 904.3 L1019.0 906.2 L1021.1 909.2 L1021.7 912.8 L1024.5 912.8 L1027.0 911.5 L1029.1 909.8 L1029.9 907.1 L1031.9 905.2 L1032.6 902.5 L1034.9 900.8 L1036.3 898.2 L1037.8 895.6 L1038.6 892.7 L1040.2 890.2 L1040.5 887.1 L1041.7 884.1 L1041.6 880.9 L1039.9 878.8 L1039.4 876.2 L1037.7 874.1 L1037.1 871.5 L1036.3 869.0 L1034.5 866.3 L1032.0 864.4 L1029.6 862.4 L1026.9 860.2 L1025.6 857.1 L1026.7 854.1 L1026.8 850.9 L1027.0 847.8 L1027.9 845.1 L1028.4 842.3 L1029.6 839.8 L1032.8 837.5 L1036.3 835.8 L1037.8 833.4 L1040.2 831.8 L1040.9 834.6 L1042.8 836.9 L1042.9 839.8 L1042.1 842.5 L1042.9 845.1 L1041.5 842.6 L1041.6 839.8 L1043.7 837.3 L1045.5 834.5 L1046.6 831.9 L1047.1 829.1 L1048.2 826.5 L1049.9 829.7 L1050.8 833.2 L1052.9 836.4 L1054.8 839.8 L1057.1 843.0 L1058.8 846.4 L1058.3 849.2 L1059.2 851.8 L1059.8 854.4 L1060.1 857.1 L1060.5 859.8 L1061.5 862.4 L1062.7 864.9 L1063.6 867.5 L1062.6 870.5 L1064.1 873.0 L1066.8 877.0 L1067.4 874.3 L1066.0 871.7 L1067.0 869.0 L1066.8 866.3 L1067.8 863.8 L1068.5 861.2 L1067.6 858.2 L1068.2 855.6 L1069.4 853.1 L1071.3 849.7 L1073.4 846.4 L1075.3 844.3 L1076.4 841.6 L1078.7 839.8 L1080.4 837.3 L1081.8 834.7 L1082.6 831.8 L1084.0 829.2 L1085.1 826.2 L1084.7 823.0 L1085.4 819.9 L1085.6 817.0 L1084.4 814.2 L1084.0 811.4 L1083.6 808.6 L1083.8 805.6 L1083.8 802.8 L1082.7 800.0"/><path d="M1065.4 845.1 L1069.4 846.4 L1070.9 848.9 L1073.4 850.4 L1069.4 853.1 L1067.3 851.2 L1065.4 849.1 L1065.4 845.1"/><path d="M1024.3 922.1 L1026.8 919.9 L1029.6 918.1 L1030.9 920.8 L1028.3 922.2 L1025.6 923.4"/><path d="M805.2 645.1 L807.7 646.4 L810.2 647.6 L809.0 652.6 L805.2 651.3 L804.6 648.2 L805.2 645.1"/><path d="M845.1 155.0 L845.7 152.2 L847.6 150.0 L850.2 152.5 L848.9 156.3 L845.1 155.0"/><path d="M850.2 172.5 L852.6 170.5 L854.9 168.0 L857.7 166.3 L856.2 168.7 L855.2 171.3 L850.2 172.5"/><path d="M845.1 173.8 L847.9 175.3 L850.2 177.5 L847.6 176.3"/><path d="M850.2 213.8 L853.9 212.6 L856.4 215.1 L853.9 216.3 L850.2 213.8"/><path d="M825.1 222.6 L827.8 220.9 L830.1 218.8 L831.4 222.3 L833.9 225.1 L831.4 228.8 L826.4 227.6 L825.1 222.6"/><path d="M815.6 232.6 L815.9 236.5 L817.6 240.1 L818.9 235.1 L815.6 232.6"/><path d="M818.9 246.4 L821.9 245.3 L825.1 245.6 L829.6 247.6 L826.0 247.4 L822.6 248.9 L818.9 246.4"/><path d="M847.6 247.6 L850.0 246.1 L851.1 243.5 L852.7 241.4 L856.4 242.6 L854.4 245.1 L852.2 247.6 L850.2 250.1 L847.6 247.6"/><path d="M922.0 760.0 L924.8 758.9 L927.8 759.6 L930.5 758.3 L933.5 758.9 L935.9 760.4 L938.0 762.6 L941.1 763.0 L942.9 765.5 L945.8 766.2 L946.2 769.3 L946.4 772.5 L948.5 775.3 L948.3 778.6 L950.0 783.0"/><path d="M992.5 680.0 L994.7 682.1 L997.0 684.0 L1000.0 687.0 L1003.0 686.5 L1006.0 687.3 L1009.0 687.8 L1012.0 687.0 L1014.8 688.1 L1016.6 690.4 L1018.9 692.0 L1021.0 694.0 L1020.4 691.3 L1021.2 688.4 L1021.1 685.7 L1020.0 683.0 L1019.0 680.0"/><path d="M886.4 720.0 L889.0 722.4 L890.2 725.8 L893.0 728.0 L894.6 730.7 L897.9 731.7 L898.9 735.0 L901.5 736.7 L904.7 737.9 L908.0 738.6 L911.3 739.1 L912.6 736.5 L915.6 735.5 L916.9 732.9 L919.0 731.0 L918.5 727.8 L917.1 725.0 L916.0 722.0 L914.3 720.0"/><path d="M921.0 720.0 L922.3 722.4 L923.0 725.0 L924.5 723.0 L922.3 720.0"/><path d="M931.0 728.0 L934.0 727.0 L937.0 726.0 L938.9 728.6 L941.0 731.0 L939.0 733.8 L938.0 737.0 L934.9 736.8 L932.0 736.0 L931.3 733.4 L931.7 730.6 L931.0 728.0"/><path d="M987.0 729.0 L990.7 728.7 L994.0 727.0 L996.0 729.7 L997.0 733.0 L994.3 735.0 L993.0 738.0 L990.3 737.4 L988.0 736.0 L987.4 732.5 L987.0 729.0"/><path d="M740.2 617.6 L738.3 617.1 L736.5 617.0 L735.1 618.6 L733.7 620.0 L731.6 618.8 L730.1 620.1 L729.6 621.7 L727.6 622.3 L728.1 624.5 L726.6 625.5 L725.2 626.5 L726.5 629.2 L724.8 630.1 L723.7 631.3 L722.6 632.6 L722.4 634.5 L719.8 635.3 L721.4 638.2 L719.4 639.3 L719.0 641.2 L717.6 642.6 L719.1 644.1 L719.5 645.9 L717.5 648.2 L719.5 649.7 L718.1 651.8 L720.2 653.2 L720.1 655.1 L719.0 656.6 L717.9 658.1 L716.6 659.4 L715.4 660.6 L712.5 659.8 L710.8 660.5 L710.1 662.6 L707.9 662.9 L707.1 664.6 L705.5 665.5 L704.9 667.4 L703.9 668.9 L702.6 670.1 L700.6 670.8 L700.8 672.8 L701.0 674.8 L699.1 675.5 L697.4 676.4 L696.9 678.0 L696.7 679.8 L695.3 680.8 L695.1 682.6 L694.7 684.5 L692.6 685.3 L691.8 686.9 L692.3 689.4 L690.1 690.1 L688.0 691.2 L687.5 693.0 L686.8 694.7 L687.4 697.1 L685.1 698.1 L685.1 700.1 L684.1 701.5 L683.5 703.3 L680.5 702.1 L679.7 703.6 L679.3 705.7 L677.7 706.2 L677.0 707.9 L674.3 707.2 L674.2 709.6 L672.6 710.2 L670.6 710.5 L670.4 712.7 L668.9 713.5 L668.4 715.3 L667.8 717.0 L666.6 718.2 L665.1 719.1 L663.5 719.7 L663.0 721.6 L661.0 721.9 L660.3 723.6 L659.1 724.7 L657.7 725.6 L656.7 727.0 L655.1 727.7 L653.9 728.8 L652.4 729.5 L651.2 730.5 L651.1 732.9 L649.5 733.6 L648.4 734.7 L646.3 734.7 L645.1 735.7 L644.1 737.1 L642.6 737.7 L641.6 739.0 L641.0 740.8 L639.4 741.4 L637.8 742.1 L636.0 742.7 L635.7 744.7 L634.0 745.3 L634.3 747.9 L631.6 747.5 L631.0 749.2 L629.7 750.3 L628.0 750.9 L627.5 752.7 L626.0 753.5 L625.9 755.5 L624.8 756.7 L622.4 756.8 L622.0 758.5 L620.4 759.3 L620.6 761.5 L618.9 762.2 L618.2 763.7 L617.5 765.2 L616.7 766.7 L615.9 768.2 L615.1 769.7 L615.5 771.6 L615.1 773.3 L612.8 774.2 L612.5 775.9 L612.5 777.7 L611.6 779.3 L610.1 780.3 L607.7 780.4 L606.9 782.1 L605.2 782.9 L605.0 785.2 L603.3 786.6 L605.1 788.8 L603.7 790.2 L602.2 791.6 L601.6 793.2 L602.5 795.2 L602.3 797.5 L605.1 797.3 L605.9 798.7 L606.1 800.5 L607.5 801.5 L607.3 799.5 L607.3 797.6 L609.0 796.2 L610.3 794.7 L610.0 792.7 L610.5 791.1 L611.0 789.6 L611.2 787.9 L610.5 786.0 L612.9 784.9 L614.0 783.5 L614.4 781.9 L613.6 780.0 L613.7 778.3 L615.7 777.1 L615.0 775.2 L615.8 773.5 L616.8 772.0 L619.8 773.2 L620.1 770.9 L621.4 769.8 L622.8 768.9 L623.7 767.4 L626.6 768.4 L627.1 766.3 L629.3 766.4 L629.5 763.9 L631.2 763.4 L632.5 762.4 L632.8 760.0 L635.0 760.2 L636.8 759.4 L636.7 756.8 L639.7 757.3 L640.2 755.4 L641.9 754.5 L643.3 753.4 L643.0 750.7 L645.1 750.2 L645.5 748.1 L647.7 748.3 L649.4 747.8 L649.1 744.9 L651.6 745.4 L652.0 743.3 L653.8 742.9 L654.9 741.6 L655.8 740.2 L658.4 740.8 L659.0 738.9 L660.1 737.7 L661.4 736.3 L662.7 735.0 L665.2 736.6 L666.9 736.0 L667.5 733.1 L669.2 732.5 L671.4 733.3 L672.5 731.4 L674.8 732.4 L676.3 731.6 L677.6 730.2 L678.8 728.9 L678.1 726.5 L681.0 726.3 L680.7 724.2 L682.1 723.0 L682.3 721.2 L683.4 719.9 L683.5 718.0 L685.7 717.3 L686.0 715.6 L688.7 715.3 L688.3 713.0 L689.9 712.0 L690.1 710.2 L691.4 708.7 L690.7 706.7 L690.3 704.7 L691.9 703.3 L693.3 701.9 L693.4 700.1 L694.8 698.7 L693.1 696.3 L695.1 695.1 L696.8 694.9 L697.9 693.1 L699.7 693.1 L701.8 693.8 L703.2 692.7 L704.5 691.5 L706.6 692.2 L707.6 690.1 L709.0 688.6 L710.8 688.6 L712.3 687.7 L714.4 688.9 L716.2 688.9 L717.6 687.6 L719.3 686.5 L717.7 684.0 L720.0 683.1 L721.0 681.7 L719.6 679.4 L722.9 678.8 L722.8 677.0 L722.6 675.1 L724.9 675.6 L725.5 672.6 L727.7 672.7 L728.9 671.0 L730.9 670.8 L732.6 670.1 L734.6 669.8 L736.0 668.5 L737.6 667.6 L739.7 667.6 L741.6 667.1 L742.7 665.1 L744.3 664.1 L745.9 662.9 L747.9 663.7 L749.5 662.1 L751.5 662.7 L753.7 664.3 L755.2 662.6 L753.2 662.3 L751.5 661.7 L750.2 660.1 L749.1 658.0 L747.0 658.0 L745.0 657.8 L744.0 655.7 L742.4 654.8 L740.2 655.1 L740.5 653.4 L740.5 651.7 L739.8 650.1 L738.2 648.6 L739.0 646.8 L738.8 645.1 L738.8 643.4 L739.3 641.6 L737.2 640.2 L739.7 638.2 L739.1 636.6 L737.6 635.1 L736.9 633.5 L737.9 631.6 L737.4 630.0 L735.5 628.6 L737.2 626.6 L736.4 625.0 L736.3 623.3 L734.2 621.9 L735.1 620.1"/><path d="M847.3 860.5 L849.0 859.5 L850.3 858.2 L850.7 856.0 L852.6 855.2 L854.5 856.1 L856.3 854.4 L858.2 854.4 L860.1 855.4 L861.9 854.6 L863.6 855.5 L863.6 858.2 L865.9 858.5 L867.6 858.7 L869.3 858.8 L871.2 858.0 L872.5 859.9 L870.3 860.3 L869.5 862.8 L867.2 863.2 L866.9 865.0 L865.8 866.6 L865.9 868.5 L864.3 868.9 L862.3 867.7 L861.0 869.8 L859.3 869.8 L857.5 869.7 L855.7 870.0 L854.0 869.7 L852.5 868.8 L851.3 867.2 L850.1 865.7 L847.8 865.4 L847.3 863.2 L846.0 861.9 L847.3 860.5"/><path d="M799.5 892.4 L800.9 891.4 L801.6 889.5 L803.2 889.0 L804.8 888.4 L806.6 889.1 L808.1 888.5 L809.4 886.6 L811.4 888.6 L812.8 887.1 L814.0 888.8 L816.7 887.0 L817.6 889.5 L819.4 889.7 L821.0 889.1 L822.4 887.9 L824.1 888.4 L825.9 889.1 L827.4 888.4 L828.2 890.5 L827.1 892.1 L826.1 893.7 L824.2 893.8 L823.1 895.8 L820.7 894.6 L819.4 896.4 L817.9 898.2 L816.8 900.3 L815.1 899.5 L812.9 900.9 L811.5 899.0 L809.1 899.4 L808.1 896.9 L806.2 896.4 L804.4 897.4 L802.6 896.3 L800.9 896.4 L801.4 894.0 L799.5 892.4"/><path d="M742.5 940.2 L742.6 938.2 L744.1 937.2 L744.7 935.6 L746.4 934.8 L747.9 933.6 L750.2 934.7 L750.9 931.4 L753.1 932.2 L755.1 932.2 L756.6 931.2 L757.2 928.5 L758.8 927.7 L761.0 928.2 L762.8 927.4 L765.0 927.3 L765.9 925.0 L767.7 924.2 L768.5 926.1 L769.6 927.6 L771.7 928.2 L771.9 930.6 L774.3 930.9 L773.0 931.9 L772.7 933.8 L770.7 934.4 L770.3 936.2 L768.6 936.5 L767.1 937.6 L765.0 937.2 L763.7 938.8 L761.9 938.9 L760.2 937.9 L758.5 937.5 L756.8 936.7 L754.7 938.9 L753.1 937.5 L751.2 937.0 L749.5 937.3 L748.7 940.4 L747.0 940.5 L745.1 940.2"/><path d="M725.9 946.8 L727.5 947.6 L728.9 948.8 L730.5 949.4 L729.8 951.2 L730.3 952.8 L732.3 954.1 L732.7 955.6 L731.9 957.4 L729.4 958.1 L727.9 960.1 L728.1 958.3 L727.6 956.7 L728.4 954.8 L726.5 953.4 L726.5 951.8 L725.6 950.2 L725.5 948.5 L725.9 946.8"/><path d="M795.6 907.0 L796.9 904.7 L799.5 904.3 L802.2 905.6 L799.6 906.1 L798.2 908.3 L795.6 907.0"/><path d="M794.2 914.9 L796.6 914.7 L798.2 912.9 L800.0 914.0 L801.9 914.8 L803.5 916.3 L801.8 917.2 L800.2 918.3 L798.2 918.3 L796.3 917.8 L795.6 916.0 L794.2 914.9"/><path d="M779.6 877.8 L780.9 876.4 L782.5 875.4 L784.6 874.8 L784.9 872.5 L785.6 874.4 L786.3 876.4 L784.9 878.1 L782.9 878.6 L781.0 879.1"/><path d="M844.7 885.7 L846.6 887.2 L848.6 888.4 L850.4 889.9 L852.6 890.4"/><path d="M831.4 889.7 L833.2 890.0 L835.0 890.4 L836.2 887.8 L838.0 888.4 L840.2 889.4 L840.7 891.7"/><path d="M811.5 899.0 L813.4 899.1 L815.1 898.3 L816.8 897.7 L815.3 899.4 L815.5 901.7"/><path d="M745.1 945.5 L747.5 944.9 L749.1 946.8 L749.6 949.2 L747.8 950.8 L745.8 949.4"/><path d="M777.0 932.2 L778.2 930.3 L780.1 931.2 L781.6 930.5 L783.3 930.3 L784.9 930.2 L786.5 931.8 L788.5 930.3 L790.2 930.9"/><path d="M831.4 857.9 L832.8 855.9 L834.6 855.8 L836.7 856.5 L837.0 858.7 L838.0 860.5"/><path d="M749.1 574.5 L750.4 571.8 L752.1 572.9 L752.8 574.8 L755.1 575.2 L755.7 577.2 L757.4 577.7 L758.6 579.1 L760.4 579.2 L761.7 580.4 L763.6 580.4 L765.1 581.2 L766.3 582.5 L767.6 584.4 L770.6 582.8 L771.7 585.1 L772.0 587.1 L774.5 588.1 L774.3 590.4 L772.4 591.1 L772.5 593.3 L771.4 594.7 L770.8 596.3 L769.0 597.1 L767.9 598.6 L766.6 600.0 L764.1 600.1 L763.7 602.4 L761.3 602.6 L760.6 604.6 L759.7 606.3 L757.9 607.2 L755.6 607.0 L754.4 609.0 L752.8 607.9 L752.3 606.2 L752.3 604.4 L753.1 602.2 L750.2 601.7 L750.4 599.7 L748.7 598.6 L750.2 596.1 L748.0 595.2 L748.7 593.1 L747.1 592.0 L746.4 590.4 L748.2 589.0 L747.8 587.0 L748.6 585.3 L748.8 583.5 L749.9 581.9 L749.1 579.8 L747.9 578.0 L748.9 576.3 L749.1 574.5"/><path d="M750.4 583.8 L752.4 583.5 L752.9 586.5 L754.5 587.0 L757.1 585.3 L757.6 588.4 L759.7 587.8 L761.1 588.7 L762.8 589.3 L763.1 591.7 L764.3 592.9 L766.3 593.1 L766.0 595.4 L764.4 596.5 L762.4 597.1 L760.3 596.8 L758.8 595.5 L757.3 594.1 L755.7 593.1 L754.8 591.3 L753.4 590.1 L751.8 589.1"/><path d="M738.5 617.0 L740.5 617.2 L742.2 616.7 L743.5 615.1 L745.4 615.1 L747.3 614.9 L748.6 613.4 L749.5 610.9 L751.8 611.7 L753.1 614.3 L752.1 616.0 L750.9 617.5 L748.3 617.5 L747.1 618.9 L746.4 620.9 L744.8 620.9 L743.1 620.9 L741.5 621.7 L739.8 620.9 L739.9 618.7 L738.5 617.0"/><path d="M823.4 585.1 L826.1 585.8 L825.5 588.0 L825.5 590.1 L827.4 591.8 L824.7 591.1 L825.8 588.8 L823.5 587.2 L823.4 585.1"/><path d="M827.4 593.1 L829.4 594.5 L831.4 594.1 L833.4 593.1 L835.4 593.1 L835.8 594.9 L835.4 596.5 L833.4 597.9 L834.0 599.7 L832.3 598.0 L830.2 598.1 L828.1 598.4 L828.8 596.5 L828.6 594.7 L827.4 593.1"/><path d="M806.2 646.2 L808.3 645.8 L810.1 644.8 L811.6 646.6 L810.7 648.4 L810.1 650.1 L808.3 651.6 L806.2 650.8 L807.7 648.5 L806.2 646.2"/></g><g fill="#555"><rect x="852.5" y="137.5" width="1" height="1"/><rect x="851.0" y="145.0" width="1" height="1"/><rect x="863.8" y="192.5" width="1" height="1"/><rect x="866.3" y="237.5" width="1" height="1"/><rect x="853.0" y="577.0" width="1" height="1"/><rect x="870.0" y="582.0" width="1" height="1"/><rect x="858.0" y="545.0" width="1" height="1"/><rect x="1045.0" y="637.0" width="1" height="1"/><rect x="1055.0" y="660.0" width="1" height="1"/><rect x="919.0" y="560.0" width="1" height="1"/><rect x="760.0" y="640.0" width="1" height="1"/><rect x="770.0" y="628.0" width="1" height="1"/><rect x="745.0" y="612.0" width="1" height="1"/><rect x="800.0" y="640.0" width="1" height="1"/><rect x="812.0" y="650.0" width="1" height="1"/><rect x="805.0" y="660.0" width="1" height="1"/><rect x="815.0" y="668.0" width="1" height="1"/><rect x="733.0" y="610.0" width="1" height="1"/><rect x="718.0" y="640.0" width="1" height="1"/><rect x="790.0" y="620.0" width="1" height="1"/><rect x="680.0" y="790.0" width="1" height="1"/><rect x="742.0" y="785.0" width="1" height="1"/><rect x="860.0" y="875.0" width="1" height="1"/><rect x="848.0" y="880.0" width="1" height="1"/><rect x="835.0" y="875.0" width="1" height="1"/><rect x="873.0" y="870.0" width="1" height="1"/><rect x="790.0" y="905.0" width="1" height="1"/><rect x="770.0" y="930.0" width="1" height="1"/><rect x="720.0" y="955.0" width="1" height="1"/><rect x="980.0" y="655.0" width="1" height="1"/><rect x="975.0" y="670.0" width="1" height="1"/><rect x="1010.0" y="720.0" width="1" height="1"/><rect x="985.0" y="745.0" width="1" height="1"/><rect x="799.3" y="625.0" width="1" height="1"/><rect x="808.4" y="622.2" width="1" height="1"/><rect x="805.2" y="632.7" width="1" height="1"/><rect x="791.8" y="637.8" width="1" height="1"/><rect x="791.3" y="635.2" width="1" height="1"/><rect x="802.1" y="649.2" width="1" height="1"/><rect x="793.7" y="627.6" width="1" height="1"/><rect x="807.7" y="653.6" width="1" height="1"/><rect x="806.3" y="633.8" width="1" height="1"/><rect x="814.2" y="630.0" width="1" height="1"/><rect x="794.3" y="623.8" width="1" height="1"/><rect x="798.8" y="648.9" width="1" height="1"/><rect x="795.3" y="640.5" width="1" height="1"/><rect x="808.0" y="633.0" width="1" height="1"/><rect x="805.5" y="621.9" width="1" height="1"/><rect x="791.9" y="627.0" width="1" height="1"/><rect x="809.2" y="634.9" width="1" height="1"/><rect x="799.0" y="640.6" width="1" height="1"/><rect x="802.9" y="630.4" width="1" height="1"/><rect x="812.4" y="644.7" width="1" height="1"/><rect x="797.0" y="640.2" width="1" height="1"/><rect x="804.9" y="651.0" width="1" height="1"/><rect x="810.6" y="629.9" width="1" height="1"/><rect x="801.9" y="646.7" width="1" height="1"/><rect x="794.5" y="637.1" width="1" height="1"/><rect x="791.3" y="643.6" width="1" height="1"/><rect x="811.5" y="640.1" width="1" height="1"/><rect x="814.6" y="630.9" width="1" height="1"/><rect x="809.6" y="640.9" width="1" height="1"/><rect x="806.4" y="636.0" width="1" height="1"/><rect x="803.4" y="643.4" width="1" height="1"/><rect x="791.9" y="644.8" width="1" height="1"/><rect x="808.3" y="655.2" width="1" height="1"/><rect x="813.1" y="629.8" width="1" height="1"/><rect x="801.0" y="643.6" width="1" height="1"/><rect x="790.9" y="636.2" width="1" height="1"/><rect x="744.9" y="934.5" width="1" height="1"/><rect x="838.1" y="878.7" width="1" height="1"/><rect x="791.5" y="913.0" width="1" height="1"/><rect x="795.4" y="920.1" width="1" height="1"/><rect x="857.8" y="874.2" width="1" height="1"/><rect x="787.1" y="923.4" width="1" height="1"/><rect x="867.9" y="859.0" width="1" height="1"/><rect x="756.7" y="935.0" width="1" height="1"/><rect x="812.5" y="892.3" width="1" height="1"/><rect x="787.8" y="918.0" width="1" height="1"/><rect x="875.8" y="864.8" width="1" height="1"/><rect x="823.5" y="890.3" width="1" height="1"/><rect x="868.9" y="875.8" width="1" height="1"/><rect x="846.9" y="878.2" width="1" height="1"/><rect x="743.2" y="940.8" width="1" height="1"/><rect x="730.8" y="946.0" width="1" height="1"/><rect x="770.5" y="916.7" width="1" height="1"/><rect x="742.1" y="941.0" width="1" height="1"/><rect x="734.9" y="957.3" width="1" height="1"/><rect x="744.1" y="941.0" width="1" height="1"/><rect x="775.4" y="927.9" width="1" height="1"/><rect x="878.4" y="860.4" width="1" height="1"/><rect x="731.9" y="947.1" width="1" height="1"/><rect x="771.3" y="926.6" width="1" height="1"/><rect x="735.8" y="956.2" width="1" height="1"/><rect x="748.4" y="936.1" width="1" height="1"/><rect x="814.5" y="912.1" width="1" height="1"/><rect x="829.1" y="887.6" width="1" height="1"/><rect x="755.2" y="942.2" width="1" height="1"/><rect x="843.0" y="877.2" width="1" height="1"/><rect x="1026.1" y="697.9" width="1" height="1"/><rect x="1033.5" y="672.9" width="1" height="1"/><rect x="1027.3" y="663.6" width="1" height="1"/><rect x="920.8" y="632.5" width="1" height="1"/><rect x="944.0" y="564.1" width="1" height="1"/><rect x="885.0" y="599.1" width="1" height="1"/><rect x="926.7" y="657.0" width="1" height="1"/><rect x="1052.2" y="622.6" width="1" height="1"/><rect x="1048.7" y="698.3" width="1" height="1"/><rect x="1051.9" y="611.0" width="1" height="1"/><rect x="919.7" y="591.8" width="1" height="1"/><rect x="915.4" y="588.6" width="1" height="1"/><rect x="992.3" y="686.0" width="1" height="1"/><rect x="1031.3" y="627.1" width="1" height="1"/><rect x="997.5" y="672.0" width="1" height="1"/><rect x="895.3" y="652.5" width="1" height="1"/><rect x="1043.8" y="669.5" width="1" height="1"/><rect x="1015.0" y="626.9" width="1" height="1"/><rect x="912.1" y="670.5" width="1" height="1"/><rect x="939.9" y="672.1" width="1" height="1"/><rect x="1054.9" y="615.4" width="1" height="1"/><rect x="952.2" y="692.6" width="1" height="1"/><rect x="1010.5" y="583.8" width="1" height="1"/><rect x="902.9" y="581.2" width="1" height="1"/><rect x="1042.9" y="672.9" width="1" height="1"/></g><g fill="none" stroke="#262626" stroke-width="0.95" stroke-linejoin="round"><path d="M804.7 261.4 L804.7 265.7 L804.0 269.9 L803.7 274.2 L803.3 278.4 L802.8 282.0 L802.7 285.5 L802.5 289.1 L802.6 292.7"/><path d="M809.7 264.9 L813.0 266.8 L816.4 268.2 L819.4 270.6 L822.8 272.4 L826.3 273.8 L829.6 275.6 L830.1 279.2 L831.0 282.7 L829.8 286.4 L828.2 289.8 L826.2 294.2 L823.9 298.3 L822.5 301.2 L826.7 305.5 L828.2 307.6"/><path d="M777.7 296.9 L782.7 296.9 L785.5 298.3 L791.2 296.9 L794.4 295.2 L797.9 294.2 L801.1 292.7 L805.4 295.5 L808.2 299.8 L811.1 302.6 L812.5 307.6"/><path d="M812.5 307.6 L816.1 308.0 L819.6 307.6 L823.9 307.5 L828.2 307.6 L832.3 310.2 L836.7 312.6 L839.5 316.1 L843.2 315.9 L846.8 315.0 L850.5 314.5 L854.2 314.6 L857.8 313.7 L861.5 313.6 L865.1 313.3"/><path d="M779.8 299.8 L780.8 303.5 L782.7 306.9 L781.6 310.4 L781.2 314.0 L782.7 318.2 L785.5 321.1 L786.7 325.4 L788.3 329.6 L791.2 332.5 L796.9 331.8 L801.1 329.6 L804.0 323.9 L805.2 320.3 L806.8 316.8 L808.8 312.5 L811.1 308.3"/><path d="M801.1 329.6 L804.7 330.0 L808.2 329.6 L812.5 330.6 L816.8 331.8 L821.2 329.9 L825.3 327.5 L829.6 327.5 L833.8 326.8 L838.1 322.5 L839.5 316.1"/><path d="M795.5 333.9 L794.9 338.8 L794.7 343.8 L797.0 346.9 L799.7 349.5 L802.2 345.7 L805.4 342.4 L809.3 341.6 L813.1 340.3 L816.8 338.9 L821.0 337.8 L825.3 337.4 L829.6 337.7 L833.8 337.4"/><path d="M833.8 326.8 L834.1 330.3 L833.8 333.9 L833.8 337.4 L834.1 342.1 L835.3 346.7 L831.0 349.5 L827.4 352.3 L823.9 355.2 L820.3 357.4 L816.8 359.5 L813.2 360.0 L809.7 360.5 L806.1 360.1 L802.6 360.9"/><path d="M778.4 346.7 L782.7 345.3 L783.7 350.2 L784.1 355.2 L782.7 358.1"/><path d="M786.9 346.7 L790.4 345.8 L794.0 345.3 L798.3 348.1 L801.1 350.9 L801.2 355.9 L801.1 360.9 L800.7 365.9 L800.4 370.9 L795.5 375.1 L794.0 380.8"/><path d="M786.9 346.7 L785.1 350.8 L784.1 355.2 L782.0 359.5 L779.8 363.7 L780.2 368.1 L781.2 372.3 L781.5 375.8 L781.2 379.4"/><path d="M775.5 379.4 L781.2 380.1 L785.5 380.6 L789.8 380.3 L794.0 380.8 L799.7 383.6 L805.4 385.1 L810.3 386.2 L815.4 386.5 L817.1 389.9 L819.0 393.2 L820.6 396.7 L822.5 400.0"/><path d="M825.3 355.2 L826.7 358.1 L826.7 361.8 L826.6 365.6 L826.7 369.4 L823.8 373.6 L821.0 378.0 L821.3 382.2 L821.6 386.5 L822.5 390.8 L825.3 395.0"/><path d="M826.7 359.5 L830.3 359.1 L833.8 359.5 L836.4 362.6 L839.4 365.3 L842.7 367.7 L845.2 370.9 L848.6 369.5 L851.9 367.8 L855.6 366.9 L859.0 365.5 L862.3 363.7 L865.8 363.6 L869.4 363.7"/><path d="M862.3 363.7 L859.6 366.4 L856.8 369.0 L853.6 371.1 L851.1 373.9 L848.0 376.1 L845.4 378.9 L842.1 380.8 L839.5 383.6 L836.6 386.3 L834.0 389.2 L831.3 392.1 L827.9 394.3 L825.1 397.0 L822.5 400.0"/><path d="M794.0 380.8 L795.9 383.9 L798.5 386.3 L800.7 389.1 L802.6 392.2 L802.2 396.2 L801.1 400.0"/><path d="M782.2 379.7 L786.2 380.5 L790.3 380.8 L794.3 381.2 L797.2 383.7 L800.4 385.8 L801.9 389.1 L802.7 392.6 L800.4 397.9 L795.8 398.0 L791.3 398.2 L786.7 398.7 L783.7 400.5 L780.7 402.2 L777.6 404.0 L774.7 406.2 L771.6 408.1 L768.5 410.0 L767.1 406.5 L765.8 402.8 L764.0 399.4 L759.9 399.9 L755.9 400.5 L751.8 400.9"/><path d="M768.5 410.0 L767.2 413.7 L765.8 417.2 L764.0 420.7 L765.5 426.7"/><path d="M786.7 398.7 L788.1 402.5 L790.0 406.1 L791.3 410.0 L792.4 414.2 L792.9 418.4 L793.3 422.6 L794.3 426.7 L791.3 427.5 L787.1 428.6 L782.9 429.0 L778.7 430.2 L774.6 431.3"/><path d="M800.4 385.8 L804.1 386.5 L808.0 386.3 L811.7 387.2 L815.5 387.3 L816.5 390.8 L817.1 394.5 L818.6 397.9 L820.0 401.7 L821.7 405.5 L823.5 409.1 L824.6 413.1 L824.7 416.9 L824.6 420.7 L823.5 425.1 L823.1 429.8"/><path d="M794.3 381.2 L795.8 375.2 L796.9 371.6 L797.6 368.0 L798.9 364.5 L801.9 360.0"/><path d="M826.2 360.0 L827.0 363.5 L827.1 367.1 L827.7 370.6 L824.7 373.7 L821.6 376.7 L821.8 380.4 L822.7 384.0 L823.4 387.6 L823.6 391.3 L824.6 394.9 L823.3 399.5 L821.6 404.0"/><path d="M763.9 420.0 L765.9 423.0 L767.8 426.0 L770.0 428.9 L771.8 431.9 L773.5 435.8 L775.6 439.3 L777.6 443.0 L779.8 446.5 L783.8 450.5"/><path d="M771.8 431.9 L775.3 430.7 L778.8 429.8 L782.5 429.3 L786.0 428.8 L789.5 428.1 L793.1 428.0 L795.7 430.6 L799.8 430.3 L803.7 429.3 L807.2 428.9 L810.8 429.3 L814.3 429.3 L818.3 430.5 L822.3 431.9"/><path d="M822.3 431.9 L822.2 435.6 L822.9 439.2 L823.6 442.9 L823.6 446.5 L825.1 450.2 L827.4 453.4 L828.9 457.0 L831.4 460.1 L832.9 463.8 L834.9 466.7 L836.1 470.2 L838.2 473.1 L836.6 477.6 L835.5 482.4 L832.6 484.6 L829.2 486.1 L826.0 488.0 L822.9 490.0 L819.6 491.7"/><path d="M803.7 435.9 L805.0 439.9 L801.0 445.2 L797.6 446.2 L794.5 448.1 L791.0 448.9 L787.8 450.5"/><path d="M822.3 446.5 L818.9 448.1 L815.6 449.8 L812.3 451.6 L809.0 453.2 L811.7 458.5"/><path d="M811.7 463.8 L814.6 466.9 L817.0 470.4 L818.3 477.1"/><path d="M809.0 482.4 L812.9 484.1 L817.0 485.0 L818.5 488.3 L819.6 491.7 L822.3 494.3 L825.2 496.7 L827.6 499.6"/><path d="M786.4 479.7 L789.5 482.0 L792.5 484.3 L795.7 486.3 L799.7 485.5 L803.7 485.0 L809.0 482.4 L807.7 475.7"/><path d="M801.0 515.5 L799.7 519.1 L798.6 522.7 L797.1 526.2 L800.5 528.3 L804.0 530.4 L807.6 532.2 L811.4 533.7 L814.9 535.9 L818.3 538.1 L818.5 541.7 L818.1 545.4 L818.5 549.1 L818.7 552.7 L818.7 556.4 L819.0 560.0 L819.1 563.8 L818.5 567.6 L818.3 571.4 L818.3 575.3"/><path d="M873.2 483.9 L877.2 484.3 L881.1 485.2 L885.2 485.1 L889.1 485.8 L893.1 486.5 L896.3 488.8 L899.2 491.6 L902.7 493.6 L905.8 496.2 L909.0 498.5"/><path d="M878.5 493.8 L881.9 493.0 L885.4 492.2 L888.9 491.8 L892.4 491.0 L895.7 489.9"/><path d="M920.9 527.7 L924.3 526.0 L927.6 524.3 L931.0 522.9 L934.2 521.0 L935.5 515.7"/><path d="M924.9 539.6 L929.3 539.2 L933.7 538.5 L938.2 538.3 L942.1 539.4 L946.2 539.6"/><path d="M859.9 605.2 L861.1 608.8 L862.5 612.3 L863.9 615.8 L864.7 619.4 L865.7 622.9 L866.5 626.4 L867.6 629.9 L869.5 633.0 L870.7 636.3 L871.8 639.7 L869.6 643.2 L867.7 647.0 L865.2 650.3 L862.9 653.4 L860.9 656.6 L858.6 659.6 L857.6 663.5 L857.3 667.6"/><path d="M865.2 625.1 L868.4 622.5 L871.4 619.8 L874.5 617.2 L879.1 616.1 L883.8 615.2"/><path d="M869.2 631.8 L872.7 630.9 L876.3 630.8 L879.8 630.4 L883.9 630.2 L887.8 629.1 L892.5 630.2 L897.1 631.8 L900.3 627.7 L903.7 623.8 L906.6 621.3 L909.0 618.5"/><path d="M913.0 671.6 L919.6 670.2 L915.6 675.5 L914.0 679.4 L912.0 683.0 L909.9 686.6 L908.4 690.5 L906.3 694.1 L904.0 696.8 L902.3 700.1 L900.2 703.1 L897.9 705.8 L895.7 708.7 L893.2 712.6 L890.3 716.1 L887.8 720.0"/><path d="M973.9 577.2 L977.0 575.4 L980.5 574.5 L985.1 576.7 L989.8 578.5 L994.4 580.5 L999.1 582.5 L1003.1 578.5 L1006.7 577.9 L1010.3 577.1 L1013.7 575.8 L1016.3 573.2 L1021.7 577.2"/><path d="M1013.7 575.8 L1013.1 579.5 L1013.4 583.2 L1012.9 586.8 L1012.4 590.4 L1015.7 594.4 L1019.0 598.4 L1019.8 601.9 L1019.7 605.5 L1020.3 609.0 L1016.3 614.3 L1017.7 617.7 L1018.4 621.3 L1019.0 624.9 L1018.8 628.5 L1018.7 632.0 L1019.0 635.5"/><path d="M1012.4 660.8 L1009.3 663.0 L1006.4 665.5 L1003.1 667.4 L1001.9 671.5 L1001.6 675.9 L1000.4 680.0"/><path d="M851.9 834.3 L855.9 833.7 L859.9 833.0 L865.2 829.0 L866.7 825.5 L867.9 821.9 L869.2 818.4 L873.2 818.4"/><path d="M867.9 818.4 L869.9 814.9 L871.5 811.2 L872.5 807.3 L874.5 803.8 L877.5 801.4 L880.6 799.2 L883.8 797.2 L888.5 796.0 L893.1 794.5 L897.1 794.8 L901.0 795.2 L903.7 799.8 L910.3 801.1 L911.7 805.1"/><path d="M902.4 795.2 L905.9 793.6 L909.4 792.0 L913.0 790.5 L914.3 787.1 L914.9 783.5 L915.6 779.9 L919.9 780.5 L924.3 780.2 L928.6 780.8 L932.9 781.2 L933.2 777.7 L933.3 774.2 L933.2 770.6 L933.7 767.1 L934.0 763.5 L934.2 760.0"/><path d="M934.2 781.2 L934.5 785.3 L935.5 789.2 L939.5 793.2 L938.2 799.8"/><path d="M939.5 793.2 L942.6 789.6 L946.2 786.5 L949.7 785.3 L953.3 784.1 L956.8 782.6 L960.1 780.4 L963.9 779.1 L967.4 777.3 L971.6 777.2 L975.8 776.2 L980.0 775.9"/><path d="M968.6 774.9 L973.0 775.5 L977.5 775.5 L981.8 776.3 L982.8 779.7 L984.5 782.9 L983.2 785.5"/><path d="M950.0 806.8 L955.3 805.4 L956.1 801.4 L957.2 797.5 L958.0 793.5 L961.2 791.2 L963.7 787.9 L967.0 785.7 L969.9 782.9 L974.2 784.2 L978.8 784.5 L983.2 785.5 L984.8 789.0 L985.8 792.6 L987.2 796.2 L989.7 800.0 L991.8 804.0 L993.8 808.1 L995.5 812.9 L997.8 817.4 L1001.7 819.5 L1005.7 821.4 L1010.4 819.5 L1015.0 817.4 L1019.0 812.1 L1023.0 811.3 L1027.0 810.8 L1028.3 805.4 L1027.3 801.0 L1026.1 796.7 L1025.6 792.2 L1024.7 788.8 L1024.2 785.2 L1022.8 781.9 L1022.7 778.3 L1021.7 774.9 L1020.9 770.4 L1019.5 766.1 L1018.3 761.7 L1018.4 757.7 L1018.3 753.7 L1018.8 749.7 L1018.8 745.7 L1018.3 741.8 L1018.3 737.8"/><path d="M985.8 770.9 L989.3 770.1 L992.9 769.8 L996.4 769.6 L998.1 765.5 L1000.4 761.7 L1004.0 761.4 L1007.6 762.2 L1011.2 762.1 L1014.8 762.1 L1018.3 762.3"/><path d="M1018.3 758.3 L1022.5 758.1 L1026.6 757.6 L1030.6 756.5 L1034.8 756.0 L1038.9 755.7 L1039.6 750.7 L1040.2 745.7 L1041.3 741.0 L1042.9 736.4 L1043.0 732.4 L1044.0 728.5 L1044.2 724.5 L1041.6 719.2 L1037.6 719.1 L1033.6 718.5 L1029.6 718.5"/><path d="M1044.2 724.5 L1047.0 722.0 L1049.7 719.4 L1052.2 716.5"/><path d="M1044.2 729.8 L1046.1 733.6 L1048.7 736.8 L1050.8 740.4 L1052.8 744.3 L1053.8 748.5 L1055.6 752.5 L1057.5 756.3 L1058.3 760.8 L1058.9 765.3 L1060.1 769.6 L1063.4 772.4 L1066.8 774.9 L1067.9 778.8 L1068.1 782.9 L1069.9 787.0 L1072.1 790.8"/><path d="M1025.6 792.2 L1029.2 792.6 L1032.8 791.7 L1036.4 791.8 L1039.9 792.3 L1043.5 792.3 L1047.1 791.9 L1050.6 791.9 L1054.2 792.1 L1057.8 792.1 L1061.4 792.0 L1064.9 791.9 L1068.5 791.6 L1072.1 791.5"/><path d="M1040.2 792.2 L1040.9 795.7 L1040.7 799.3 L1041.6 802.8 L1045.5 808.1 L1048.8 804.7 L1052.2 801.5 L1051.9 805.4 L1052.2 809.4 L1050.2 812.8 L1048.2 816.1 L1048.6 820.7 L1048.2 825.4 L1048.2 830.0"/><path d="M1064.1 792.2 L1065.1 795.6 L1066.2 799.1 L1067.0 802.6 L1067.9 806.1 L1069.4 809.4 L1069.4 813.2 L1070.0 816.9 L1070.2 820.6 L1070.2 824.3 L1070.8 828.0"/><path d="M1019.0 813.4 L1023.0 813.4 L1027.0 813.8 L1030.9 813.4 L1031.5 817.5 L1031.7 821.7 L1032.2 825.8 L1032.3 830.0"/><path d="M1019.0 813.4 L1018.6 817.5 L1018.6 821.7 L1018.4 825.9 L1017.7 830.0"/><path d="M977.9 809.4 L978.0 813.6 L978.0 817.7 L978.3 821.8 L979.3 825.9 L979.2 830.0"/><path d="M965.9 822.7 L969.4 820.4 L973.1 818.4 L976.5 816.1 L979.0 813.2 L982.1 811.0 L984.5 808.1 L988.5 808.9 L992.5 809.4"/><path d="M965.9 818.6 L969.0 816.0 L972.5 813.8 L975.7 811.4 L979.2 809.3 L985.8 808.0 L990.5 809.4 L995.1 810.6 L996.7 813.8 L998.6 816.8 L1000.4 819.9 L1007.1 821.2 L1011.1 817.9 L1015.0 814.6 L1017.7 810.6 L1021.7 810.5 L1025.7 809.9 L1029.6 809.3 L1028.9 804.6 L1028.3 800.0"/><path d="M977.9 810.6 L979.2 815.3 L980.5 819.9 L978.7 823.4 L977.2 827.1 L975.2 830.5 L973.9 834.5"/><path d="M976.5 830.5 L981.8 829.2 L981.8 835.8 L977.9 838.5 L983.2 841.1 L989.8 842.5 L991.1 837.2 L992.5 833.2 L997.8 835.8 L997.5 839.9 L996.4 843.8 L996.1 848.4 L996.4 853.1 L999.9 854.2 L1003.1 855.7 L1007.6 854.1 L1012.4 853.1"/><path d="M1012.4 853.1 L1016.3 847.8 L1017.7 843.8 L1019.0 839.8 L1019.0 833.2 L1018.7 829.2 L1018.5 825.2 L1018.2 821.2 L1018.3 817.2 L1017.7 813.3"/><path d="M1019.0 813.3 L1023.0 812.9 L1027.0 813.1 L1030.9 813.3 L1030.9 817.3 L1031.6 821.2 L1031.8 825.2 L1032.3 829.2 L1036.2 828.2 L1040.2 827.9 L1044.2 825.8 L1048.2 823.9 L1047.7 819.2 L1048.2 814.6 L1050.3 810.7 L1051.5 806.5 L1053.5 802.7 L1050.8 800.0"/><path d="M958.0 854.4 L961.9 854.0 L965.9 854.8 L969.9 854.8 L973.9 854.0 L977.9 854.2 L981.8 854.4 L985.8 849.1 L989.8 849.1 L989.8 855.7 L993.8 858.4 L996.4 862.4 L999.1 865.0 L1003.1 864.7 L1007.1 865.4 L1011.0 865.2 L1015.0 865.0"/><path d="M993.8 858.4 L988.5 862.4 L988.8 866.3 L988.4 870.3 L988.5 874.3 L984.8 874.6 L981.1 875.0 L977.4 875.5 L973.6 875.2 L969.9 875.6 L971.5 880.4 L973.9 884.9"/><path d="M969.9 875.6 L973.3 877.4 L976.7 879.3 L979.9 881.6 L983.0 884.0 L986.4 885.8 L989.7 887.8 L993.0 889.8 L996.4 891.6 L1000.4 891.6 L1004.4 891.9 L1008.4 891.6"/><path d="M1011.0 869.0 L1015.0 865.0 L1014.6 860.3 L1013.7 855.7"/><path d="M1011.0 873.0 L1016.3 871.7 L1020.8 872.8 L1025.2 874.4 L1029.6 875.6 L1030.9 882.3 L1031.6 886.9 L1032.3 891.6 L1031.3 895.3 L1029.4 898.8 L1028.4 902.6 L1027.0 906.2 L1024.1 909.3 L1021.7 912.8"/><path d="M1016.3 871.7 L1020.3 866.3 L1025.0 865.3 L1029.6 863.7"/><path d="M1053.5 837.2 L1057.1 835.8 L1060.4 834.0 L1064.0 832.8 L1067.2 830.5 L1070.8 829.2 L1070.2 825.5 L1069.8 821.8 L1069.1 818.2 L1067.8 814.6 L1067.9 810.9 L1066.6 807.3 L1065.8 803.7 L1065.4 800.0"/><path d="M695.1 695.1 L699.2 694.2 L703.4 693.2 L707.6 692.6 L711.1 691.2 L714.4 689.5 L717.6 687.6"/></g><g fill="#ff0000" stroke="#2b2b2b" stroke-width="0.8"><circle cx="851" cy="164" r="3.8"/><circle cx="793" cy="281" r="3.8"/><circle cx="816" cy="287" r="3.8"/><circle cx="844" cy="286" r="3.8"/><circle cx="796" cy="312" r="3.8"/><circle cx="821" cy="320" r="3.8"/><circle cx="784" cy="330" r="3.8"/><circle cx="813" cy="336" r="3.8"/><circle cx="854" cy="342" r="3.8"/><circle cx="817" cy="349" r="3.8"/><circle cx="777" cy="362" r="3.8"/><circle cx="791" cy="364" r="3.8"/><circle cx="814" cy="376" r="3.8"/><circle cx="836" cy="377" r="3.8"/><circle cx="772" cy="390" r="3.8"/><circle cx="841" cy="395" r="3.8"/><circle cx="807" cy="410" r="3.8"/><circle cx="780" cy="417" r="3.8"/><circle cx="763" cy="427" r="3.8"/><circle cx="789" cy="438" r="3.8"/><circle cx="809" cy="443" r="3.8"/><circle cx="779" cy="458" r="3.8"/><circle cx="806" cy="455" r="3.8"/><circle cx="805" cy="460.5" r="3.8"/><circle cx="808.3" cy="458.8" r="3.8"/><circle cx="820" cy="460" r="3.8"/><circle cx="807" cy="467" r="3.8"/><circle cx="822" cy="477" r="3.8"/><circle cx="800" cy="479" r="3.8"/><circle cx="855" cy="483" r="3.8"/><circle cx="893" cy="484" r="3.8"/><circle cx="808" cy="496" r="3.8"/><circle cx="918" cy="506" r="3.8"/><circle cx="968" cy="502" r="3.8"/><circle cx="855" cy="522" r="3.8"/><circle cx="936" cy="531" r="3.8"/><circle cx="801" cy="543" r="3.8"/><circle cx="819" cy="543" r="3.8"/><circle cx="953" cy="549" r="3.8"/><circle cx="868" cy="570" r="3.8"/><circle cx="933" cy="577" r="3.8"/><circle cx="996" cy="571" r="3.8"/><circle cx="1003" cy="599" r="3.8"/><circle cx="1025" cy="609" r="3.8"/><circle cx="980" cy="612" r="3.8"/><circle cx="869" cy="611" r="3.8"/><circle cx="888" cy="623" r="3.8"/><circle cx="860" cy="635" r="3.8"/><circle cx="886" cy="641" r="3.8"/><circle cx="994" cy="643" r="3.8"/><circle cx="887" cy="663" r="3.8"/><circle cx="905" cy="676" r="3.8"/><circle cx="944" cy="674" r="3.8"/><circle cx="1009" cy="677" r="3.8"/><circle cx="1036" cy="683" r="3.8"/><circle cx="966" cy="699" r="3.8"/><circle cx="694" cy="692" r="3.8"/><circle cx="908" cy="711" r="3.8"/><circle cx="1043" cy="708" r="3.8"/><circle cx="936" cy="732" r="3.8"/><circle cx="992" cy="733" r="3.8"/><circle cx="1032" cy="741" r="3.8"/><circle cx="1062" cy="750" r="3.8"/><circle cx="997" cy="759" r="3.8"/><circle cx="941" cy="775" r="3.8"/><circle cx="1044" cy="771" r="3.8"/><circle cx="897" cy="789" r="3.8"/><circle cx="958" cy="791" r="3.8"/><circle cx="1006" cy="791" r="3.8"/><circle cx="973" cy="801" r="3.8"/><circle cx="892" cy="807" r="3.8"/><circle cx="906" cy="807" r="3.8"/><circle cx="1038" cy="813" r="3.8"/><circle cx="1057" cy="813" r="3.8"/><circle cx="1071" cy="829" r="3.8"/><circle cx="968" cy="832" r="3.8"/><circle cx="999" cy="831" r="3.8"/><circle cx="975" cy="840" r="3.8"/><circle cx="1024" cy="840" r="3.8"/><circle cx="856" cy="859" r="3.8"/><circle cx="858" cy="863" r="3.8"/><circle cx="980" cy="864" r="3.8"/><circle cx="999" cy="878" r="3.8"/><circle cx="1032" cy="884" r="3.8"/><circle cx="1013" cy="890" r="3.8"/><circle cx="809" cy="894" r="3.8"/><circle cx="749" cy="929" r="3.8"/></g></svg><div class="a" style="left:1337px;top:115px;width:532px;height:869px;background:#efefef"></div><div class="t" style="left:1347.30px;top:120.00px;font-size:12.7px;font-family:'Liberation Sans',sans-serif;font-weight:normal;color:#1b1b1b;transform:scaleX(1.1457);">Layer Styling</div><div class="a" style="left:1842px;top:120px;width:11px;height:11px;border:1px solid #777;border-radius:2px"></div><div class="a" style="left:1856px;top:120px;width:11px;height:11px;border:1px solid #777;border-radius:2px"></div><svg style="left:1842px;top:120px" width="11" height="11" viewBox="0 0 11 11"><rect x="4" y="2.5" width="4.5" height="4.5" fill="none" stroke="#555" stroke-width="1"/><rect x="2.5" y="4.5" width="4.5" height="4.5" fill="#efefef" stroke="#555" stroke-width="1"/></svg><svg style="left:1856px;top:120px" width="11" height="11" viewBox="0 0 11 11"><path d="M3 3L8 8M8 3L3 8" stroke="#555" stroke-width="1.8"/></svg><div class="btn" style="left:1346px;top:138px;width:520px;height:25px;"></div><div class="t" style="left:1371.70px;top:145.00px;font-size:12.7px;font-family:'Liberation Sans',sans-serif;font-weight:normal;color:#1b1b1b;transform:scaleX(1.1469);">stompcovidph_provinces copy</div><svg style="left:1849.8px;top:148.0px" width="9" height="5" viewBox="0 0 9 5"><path d="M0 0H9L4.5 5Z" fill="#444"/></svg><div class="btn" style="left:1388px;top:169px;width:478px;height:25px;"></div><div class="t" style="left:1412.20px;top:176.00px;font-size:12.7px;font-family:'Liberation Sans',sans-serif;font-weight:normal;color:#1b1b1b;transform:scaleX(1.1384);">Single symbol</div><svg style="left:1849.8px;top:179.0px" width="9" height="5" viewBox="0 0 9 5"><path d="M0 0H9L4.5 5Z" fill="#444"/></svg><div class="a" style="left:1346px;top:201px;width:38px;height:780px;background:#5c5c5c"></div><div class="a" style="left:1512px;top:205px;width:286px;height:119px;background:#fff;border:1px solid #a9a9a9"></div><div class="a" style="left:1513px;top:225px;width:284px;height:19px;background:#308cc6"></div><svg style="left:1519.0px;top:213.5px" width="8" height="4" viewBox="0 0 8 4"><path d="M0 0H8L4.0 4Z" fill="#555"/></svg><svg style="left:1539.0px;top:232.5px" width="8" height="4" viewBox="0 0 8 4"><path d="M0 0H8L4.0 4Z" fill="#222"/></svg><svg style="left:1559.0px;top:251.5px" width="8" height="4" viewBox="0 0 8 4"><path d="M0 0H8L4.0 4Z" fill="#555"/></svg><div class="a" style="left:1539.9px;top:211.2px;width:8px;height:8px;border-radius:50%;background:#e00;border:1px solid #333"></div><div class="a" style="left:1560.0px;top:230.2px;width:8px;height:8px;border-radius:50%;background:#c0303a;border:1px solid #333"></div><div class="a" style="left:1579.9px;top:249.3px;width:8px;height:8px;border-radius:50%;background:#e00;border:1px solid #333"></div><div class="a" style="left:1599.7px;top:268.2px;width:8px;height:8px;border-radius:50%;background:#e00;border:1px solid #333"></div><div class="t" style="left:1558.00px;top:210.00px;font-size:12.7px;font-family:'Liberation Sans',sans-serif;font-weight:bold;color:#000;transform:scaleX(1.1988);">Fill</div><div class="t" style="left:1578.40px;top:229.00px;font-size:12.7px;font-family:'Liberation Sans',sans-serif;font-weight:normal;color:#fff;transform:scaleX(1.1613);">Geometry generator</div><div class="t" style="left:1598.20px;top:248.00px;font-size:12.7px;font-family:'Liberation Sans',sans-serif;font-weight:bold;color:#000;transform:scaleX(1.2291);">Marker</div><div class="t" style="left:1618.00px;top:267.00px;font-size:12.7px;font-family:'Liberation Sans',sans-serif;font-weight:normal;color:#000;transform:scaleX(1.1545);">Simple marker</div><div class="btn" style="left:1805px;top:201px;width:27px;height:23px;"></div><div class="btn" style="left:1838px;top:201px;width:27px;height:23px;"></div><div class="btn" style="left:1805px;top:229px;width:27px;height:23px;"></div><div class="btn" style="left:1838px;top:229px;width:27px;height:23px;"></div><div class="btn" style="left:1805px;top:257px;width:27px;height:23px;"></div><div class="btn" style="left:1838px;top:257px;width:27px;height:23px;"></div><div class="a" style="left:1387px;top:336px;width:479px;height:1px;background:#c4c4c4"></div><div class="t" style="left:1388.40px;top:353.00px;font-size:12.7px;font-family:'Liberation Sans',sans-serif;font-weight:normal;color:#1b1b1b;transform:scaleX(1.1568);">Symbol layer type</div><div class="btn" style="left:1507.5px;top:346.5px;width:348px;height:24px;"></div><div class="t" style="left:1512.20px;top:353.00px;font-size:12.7px;font-family:'Liberation Sans',sans-serif;font-weight:normal;color:#1b1b1b;transform:scaleX(1.1639);">Geometry generator</div><svg style="left:1839.1px;top:356.0px" width="9" height="5" viewBox="0 0 9 5"><path d="M0 0H9L4.5 5Z" fill="#444"/></svg><div class="t" style="left:1397.00px;top:390.00px;font-size:12.7px;font-family:'Liberation Sans',sans-serif;font-weight:normal;color:#1b1b1b;transform:scaleX(1.1643);">Geometry type</div><div class="btn" style="left:1501.5px;top:383.5px;width:345px;height:24px;"></div><div class="t" style="left:1526.50px;top:390.00px;font-size:12.7px;font-family:'Liberation Sans',sans-serif;font-weight:normal;color:#1b1b1b;transform:scaleX(1.1425);">Point / MultiPoint</div><svg style="left:1830.5px;top:393.0px" width="9" height="5" viewBox="0 0 9 5"><path d="M0 0H9L4.5 5Z" fill="#444"/></svg><div class="a" style="left:1397px;top:413.5px;width:420px;height:458px;background:#fff;border:1px solid #a9a9a9"></div><div class="a" style="left:1398px;top:414.5px;width:14px;height:442px;background:#f3f3f3"></div><div class="btn" style="left:1823px;top:414.5px;width:24px;height:22px;"></div><div class="a" style="left:1398px;top:857px;width:418px;height:14px;background:#f0f0f0;border-top:1px solid #cfcfcf"></div><div class="a" style="left:1412px;top:858px;width:78px;height:13px;background:#f8f8f8;border:1px solid #c9c9c9"></div><div class="a" style="left:1490px;top:858px;width:312px;height:13px;background:#e0e0e0"></div><svg style="left:1401px;top:860px" width="7" height="8" viewBox="0 0 7 8"><path d="M6 0V8L1 4Z" fill="#333"/></svg><svg style="left:1806px;top:860px" width="7" height="8" viewBox="0 0 7 8"><path d="M1 0V8L6 4Z" fill="#333"/></svg><div class="cb" style="left:1388px;top:889px;width:14px;height:14px;"></div><svg style="left:1388px;top:889px" width="14" height="14" viewBox="0 0 14 14"><path d="M3.2 7.2L5.8 10.6L10.6 3" fill="none" stroke="#111" stroke-width="1.9"/></svg><div class="t" style="left:1407.60px;top:891.00px;font-size:12.7px;font-family:'Liberation Sans',sans-serif;font-weight:normal;color:#1b1b1b;transform:scaleX(1.1463);">Enable symbol layer</div><div class="cb" style="left:1618px;top:889px;width:14px;height:14px;"></div><div class="t" style="left:1637.20px;top:891.00px;font-size:12.7px;font-family:'Liberation Sans',sans-serif;font-weight:normal;color:#1b1b1b;transform:scaleX(1.1484);">Draw effects</div><div class="btn" style="left:1732px;top:885px;width:24px;height:23px;"></div><svg style="left:1390px;top:936px" width="10" height="11" viewBox="0 0 10 11"><path d="M1 0V11L9 5.5Z" fill="#222"/></svg><div class="t" style="left:1410.00px;top:936.00px;font-size:12.7px;font-family:'Liberation Sans',sans-serif;font-weight:bold;color:#000;transform:scaleX(1.1936);">Layer Rendering</div><div class="btn" style="left:1387px;top:957.5px;width:24px;height:23px;"></div><div class="btn" style="left:1417px;top:957.5px;width:24px;height:23px;"></div><div class="cb" style="left:1678px;top:962px;width:14px;height:14px;"></div><svg style="left:1678px;top:962px" width="14" height="14" viewBox="0 0 14 14"><path d="M3.2 7.2L5.8 10.6L10.6 3" fill="none" stroke="#111" stroke-width="1.9"/></svg><div class="t" style="left:1697.30px;top:963.00px;font-size:12.7px;font-family:'Liberation Sans',sans-serif;font-weight:normal;color:#1b1b1b;transform:scaleX(1.1468);">Live update</div><div class="btn" style="left:1786px;top:956px;width:80px;height:25px;"></div><div class="t" style="left:1815.30px;top:963.00px;font-size:12.7px;font-family:'Liberation Sans',sans-serif;font-weight:normal;color:#1b1b1b;transform:scaleX(1.1307);">Apply</div><div class="a" style="left:1869px;top:115px;width:1px;height:869px;background:#c4c4c4"></div><div class="a" style="left:1870px;top:115px;width:51px;height:869px;background:linear-gradient(90deg,#f8f8f8,#ededed)"></div><svg style="left:1888px;top:121px" width="15" height="6" viewBox="0 0 15 6" shape-rendering="crispEdges"><g fill="#bdbdbd"><rect x="0" y="0" width="1" height="1"/><rect x="0" y="3" width="1" height="1"/><rect x="3" y="0" width="1" height="1"/><rect x="3" y="3" width="1" height="1"/><rect x="6" y="0" width="1" height="1"/><rect x="6" y="3" width="1" height="1"/><rect x="9" y="0" width="1" height="1"/><rect x="9" y="3" width="1" height="1"/><rect x="12" y="0" width="1" height="1"/><rect x="12" y="3" width="1" height="1"/></g></svg><div class="a" style="left:1px;top:984px;width:1920px;height:37px;background:linear-gradient(#f5f5f5,#ebebeb)"></div><div class="a" style="left:1px;top:983px;width:1920px;height:1px;background:#dedede"></div><div class="a" style="left:1px;top:1021px;width:1920px;height:1px;background:#c0c0c0"></div><svg style="left:7px;top:995px" width="6" height="18" viewBox="0 0 6 18" shape-rendering="crispEdges"><g fill="#bdbdbd"><rect x="0" y="0" width="1" height="1"/><rect x="0" y="3" width="1" height="1"/><rect x="0" y="6" width="1" height="1"/><rect x="0" y="9" width="1" height="1"/><rect x="0" y="12" width="1" height="1"/><rect x="0" y="15" width="1" height="1"/><rect x="3" y="0" width="1" height="1"/><rect x="3" y="3" width="1" height="1"/><rect x="3" y="6" width="1" height="1"/><rect x="3" y="9" width="1" height="1"/><rect x="3" y="12" width="1" height="1"/><rect x="3" y="15" width="1" height="1"/></g></svg><div class="pr" style="left:14.5px;top:988px;width:31px;height:30px;"></div><div class="pr" style="left:80.5px;top:988px;width:31px;height:30px;"></div><div class="inp" style="left:113.5px;top:992px;width:102px;height:22px;"></div><div class="a" style="left:201px;top:993px;width:1px;height:20px;background:#cfcfcf"></div><div class="t" style="left:118.60px;top:997.00px;font-size:13px;font-family:'Liberation Sans',sans-serif;font-weight:normal;color:#1b1b1b;">2</div><svg style="left:204px;top:995px" width="9" height="17" viewBox="0 0 9 17"><path d="M0.5 5L4.5 1L8.5 5Z M0.5 12L4.5 16L8.5 12Z" fill="#555"/></svg><div class="btn" style="left:217.5px;top:992px;width:108px;height:23px;"></div><div class="t" style="left:222.40px;top:997.00px;font-size:13px;font-family:'Liberation Sans',sans-serif;font-weight:normal;color:#1b1b1b;">px</div><svg style="left:310.5px;top:1000.5px" width="9" height="5" viewBox="0 0 9 5"><path d="M0 0H9L4.5 5Z" fill="#444"/></svg><div class="a" style="left:1px;top:1022px;width:1920px;height:32px;background:#efefef"></div><div class="inp" style="left:5.5px;top:1026.5px;width:269px;height:24px;"></div><div class="t" style="left:34.30px;top:1033.00px;font-size:12.7px;font-family:'Liberation Sans',sans-serif;font-weight:normal;color:#1b1b1b;transform:scaleX(1.1616);">centrod</div><div class="t" style="left:283.30px;top:1033.00px;font-size:12.7px;font-family:'Liberation Sans',sans-serif;font-weight:normal;color:#1b1b1b;transform:scaleX(0.9818);">1 legend entries removed.</div><div class="t" style="left:1054.20px;top:1033.00px;font-size:12.7px;font-family:'Liberation Sans',sans-serif;font-weight:normal;color:#1b1b1b;transform:scaleX(0.9613);">Coordinate</div><div class="inp" style="left:1118.5px;top:1027.3px;width:89px;height:21px;"></div><div class="t" style="left:1126.40px;top:1033.00px;font-size:12.7px;font-family:'Liberation Sans',sans-serif;font-weight:normal;color:#1b1b1b;transform:scaleX(0.9816);">131.41,14.79</div><div class="t" style="left:1240.80px;top:1033.00px;font-size:12.7px;font-family:'Liberation Sans',sans-serif;font-weight:normal;color:#1b1b1b;transform:scaleX(0.9197);">Scale</div><div class="inp" style="left:1274px;top:1027px;width:96.5px;height:22px;"></div><div class="a" style="left:1350px;top:1028px;width:1px;height:20px;background:#cfcfcf"></div><div class="t" style="left:1278.30px;top:1033.00px;font-size:12.7px;font-family:'Liberation Sans',sans-serif;font-weight:normal;color:#1b1b1b;transform:scaleX(0.9815);">1:7165939</div><svg style="left:1356.0px;top:1035.5px" width="9" height="5" viewBox="0 0 9 5"><path d="M0 0H9L4.5 5Z" fill="#444"/></svg><div class="t" style="left:1404.60px;top:1033.00px;font-size:12.7px;font-family:'Liberation Sans',sans-serif;font-weight:normal;color:#1b1b1b;transform:scaleX(0.9663);">Magnifier</div><div class="inp" style="left:1460px;top:1027.5px;width:96px;height:22.5px;"></div><div class="a" style="left:1542.5px;top:1028px;width:1px;height:21px;background:#cfcfcf"></div><div class="t" style="left:1464.40px;top:1033.00px;font-size:12.7px;font-family:'Liberation Sans',sans-serif;font-weight:normal;color:#1b1b1b;transform:scaleX(0.9412);">100%</div><svg style="left:1545px;top:1030px" width="9" height="17" viewBox="0 0 9 17"><path d="M0.5 5L4.5 1L8.5 5Z M0.5 12L4.5 16L8.5 12Z" fill="#555"/></svg><div class="t" style="left:1566.50px;top:1033.00px;font-size:12.7px;font-family:'Liberation Sans',sans-serif;font-weight:normal;color:#1b1b1b;transform:scaleX(0.9702);">Rotation</div><div class="inp" style="left:1622px;top:1027.5px;width:93px;height:22.5px;"></div><div class="a" style="left:1701.5px;top:1028px;width:1px;height:21px;background:#cfcfcf"></div><div class="t" style="left:1626.80px;top:1033.00px;font-size:12.7px;font-family:'Liberation Sans',sans-serif;font-weight:normal;color:#1b1b1b;transform:scaleX(0.9814);">0.0 °</div><svg style="left:1704px;top:1030px" width="9" height="17" viewBox="0 0 9 17"><path d="M0.5 5L4.5 1L8.5 5Z M0.5 12L4.5 16L8.5 12Z" fill="#555"/></svg><div class="cb" style="left:1722px;top:1032px;width:14px;height:14px;"></div><svg style="left:1722px;top:1032px" width="14" height="14" viewBox="0 0 14 14"><path d="M3.2 7.2L5.8 10.6L10.6 3" fill="none" stroke="#111" stroke-width="1.9"/></svg><div class="t" style="left:1741.40px;top:1033.00px;font-size:12.7px;font-family:'Liberation Sans',sans-serif;font-weight:normal;color:#1b1b1b;transform:scaleX(0.9314);">Render</div><div class="t" style="left:1814.20px;top:1033.00px;font-size:12.7px;font-family:'Liberation Sans',sans-serif;font-weight:normal;color:#1b1b1b;transform:scaleX(0.8918);">EPSG:4326</div><div class="t" style="left:1413.70px;top:419px;font-size:12.5px;font-family:'Liberation Mono',monospace;transform:scaleX(1.0267)"><span style="color:#4a9ba0">centroid</span><span style="color:#5b7bbf">(</span><span style="color:#222">$</span><span style="color:#4a9ba0">geometry</span><span style="color:#5b7bbf">)</span></div><svg style="left:20px;top:122px" width="15" height="6" viewBox="0 0 15 6" shape-rendering="crispEdges"><g fill="#bdbdbd"><rect x="0" y="0" width="1" height="1"/><rect x="0" y="3" width="1" height="1"/><rect x="3" y="0" width="1" height="1"/><rect x="3" y="3" width="1" height="1"/><rect x="6" y="0" width="1" height="1"/><rect x="6" y="3" width="1" height="1"/><rect x="9" y="0" width="1" height="1"/><rect x="9" y="3" width="1" height="1"/><rect x="12" y="0" width="1" height="1"/><rect x="12" y="3" width="1" height="1"/></g></svg><svg style="left:15px;top:131.7px" width="24.20" height="24.00" viewBox="0 0 24 24" preserveAspectRatio="none"><path d="M0.5 6L9 4L12 19L3.5 21Z" fill="#d9632c" stroke="#a3441b" stroke-width="0.5"/><path d="M4 3L12 2L13.5 17L5.5 18Z" fill="#f5cf3d" stroke="#c9a21e" stroke-width="0.5"/><path d="M8 0.5L23 2.5L21.5 15.5L7 14Z" fill="#6d9ad0" stroke="#3f6fae" stroke-width="0.8"/><rect x="15" y="15" width="9" height="9" rx="1.5" fill="#5b9e5b"/><path d="M19.5 16.5V22.5M16.5 19.5H22.5" stroke="#fff" stroke-width="1.8"/></svg><svg style="left:15px;top:164px" width="24.20" height="24.00" viewBox="0 0 24 24" preserveAspectRatio="none"><path d="M0.5 8L12 13V23.5L0.5 18Z" fill="#e9c32c" stroke="#333" stroke-width="0.7"/><path d="M12 13L23.5 8V18L12 23.5Z" fill="#f7df5a" stroke="#333" stroke-width="0.7"/><circle cx="12" cy="7" r="7" fill="#6d9ad0" stroke="#3f5f8f" stroke-width="0.7"/><path d="M7 5Q10 3 12 6T17 5M8 10Q12 8 16 10" stroke="#2f4f78" stroke-width="1.3" fill="none"/><path d="M0.5 8L12 3L23.5 8L12 13Z" fill="none" stroke="#333" stroke-width="0.7"/><rect x="15" y="15" width="9" height="9" rx="1.3" fill="#c9a21e"/><path d="M19.5 16.8V22.2M16.8 19.5H22.2M17.6 17.6L21.4 21.4M21.4 17.6L17.6 21.4" stroke="#fff" stroke-width="0.9"/></svg><svg style="left:15px;top:195.3px" width="24.20" height="24.00" viewBox="0 0 24 24" preserveAspectRatio="none"><path d="M2.5 2.5L9 20L14.5 3.5L22 2.5" fill="none" stroke="#2f3f55" stroke-width="1.6"/><circle cx="2.5" cy="2.5" r="1.8" fill="#fff" stroke="#333" stroke-width="0.8"/><circle cx="9" cy="20" r="1.8" fill="#fff" stroke="#333" stroke-width="0.8"/><circle cx="14.5" cy="3.5" r="1.8" fill="#fff" stroke="#333" stroke-width="0.8"/><circle cx="22" cy="2.5" r="1.8" fill="#fff" stroke="#333" stroke-width="0.8"/><rect x="15" y="15" width="9" height="9" rx="1.3" fill="#c9a21e"/><path d="M19.5 16.8V22.2M16.8 19.5H22.2M17.6 17.6L21.4 21.4M21.4 17.6L17.6 21.4" stroke="#fff" stroke-width="0.9"/></svg><svg style="left:15px;top:227.6px" width="24.20" height="24.00" viewBox="0 0 24 24" preserveAspectRatio="none"><path d="M1 23C3 14 10 4 23 0.5C22 8 14 18 3 19Z" fill="#9fb9e0" stroke="#4a6fa5" stroke-width="0.8"/><path d="M1 23L18 5" stroke="#4a6fa5" stroke-width="0.8"/><rect x="15" y="15" width="9" height="9" rx="1.3" fill="#c9a21e"/><path d="M19.5 16.8V22.2M16.8 19.5H22.2M17.6 17.6L21.4 21.4M21.4 17.6L17.6 21.4" stroke="#fff" stroke-width="0.9"/></svg><svg style="left:17px;top:262px" width="22.00" height="22.00" viewBox="0 0 22 22" preserveAspectRatio="none"><rect x="0.5" y="4" width="19" height="12" rx="1.5" fill="#6d9ad0" stroke="#3f6fae" stroke-width="0.8"/><path d="M4 0V4M7 0V4M10 0V4M13 0V4M16 0V4M4 16V20M7 16V20M10 16V20M13 16V20" stroke="#333" stroke-width="1"/><rect x="13" y="13" width="9" height="9" rx="1.3" fill="#c9a21e"/><path d="M17.5 14.8V20.2M14.8 17.5H20.2M15.6 15.6L19.4 19.4M19.4 15.6L15.6 19.4" stroke="#fff" stroke-width="0.9"/></svg><svg style="left:15px;top:299.6px" width="24.20" height="23.90" viewBox="0 0 24 24" preserveAspectRatio="none"><rect x="0.5" y="0.5" width="22" height="22" rx="2" fill="#b6c9e3" stroke="#4a6fa5" stroke-width="1"/><path d="M8 22L3 2L21 3Z" fill="none" stroke="#2f3f55" stroke-width="1.2"/><rect x="15" y="15" width="9" height="9" rx="1.3" fill="#c9a21e"/><path d="M19.5 16.8V22.2M16.8 19.5H22.2M17.6 17.6L21.4 21.4M21.4 17.6L17.6 21.4" stroke="#fff" stroke-width="0.9"/></svg><svg style="left:15px;top:355px" width="23.00" height="22.40" viewBox="0 0 23 23" preserveAspectRatio="none"><path d="M2 0V21H23" fill="none" stroke="#666" stroke-width="1"/><path d="M4 15Q9 14 12 9T21 3" fill="none" stroke="#c0389c" stroke-width="1.4"/><path d="M4 18Q10 16 14 13T21 14" fill="none" stroke="#39a3b8" stroke-width="1.4"/></svg><svg style="left:9.8px;top:403px" width="22.50" height="22.30" viewBox="0 0 23 23" preserveAspectRatio="none"><rect x="0.5" y="0.5" width="21" height="19" fill="#e2e2e2" stroke="#333" stroke-width="0.8" stroke-dasharray="1.5 1"/><rect x="1" y="1" width="13" height="13" fill="#f5d94a" stroke="#c9a21e" stroke-width="0.6"/><path d="M9 9V22L12 19L14.5 23L16.5 22L14 18H18Z" fill="#fff" stroke="#333" stroke-width="0.8"/></svg><svg style="left:11.5px;top:435.7px" width="19.80" height="19.90" viewBox="0 0 20 20" preserveAspectRatio="none"><rect x="6" y="7" width="13.5" height="12.5" fill="#f5d94a" stroke="#c9a21e" stroke-width="0.7"/><path d="M8.5 2.5C6 0.5 1 1 1 4.5C1 6.5 3 7.5 5 7.5C2.5 7.5 0.5 9 0.5 11C0.5 14.5 6 15 8.5 12.5" fill="none" stroke="#5b2a6f" stroke-width="1.6"/></svg><svg style="left:10.8px;top:468px" width="22.20" height="22.00" viewBox="0 0 22 22" preserveAspectRatio="none"><rect x="0.5" y="0.5" width="12" height="12" fill="#f5d94a" stroke="#c9a21e" stroke-width="0.7"/><rect x="4" y="4" width="12" height="12" fill="#f5d94a" stroke="#c9a21e" stroke-width="0.7"/><rect x="11" y="11" width="10.5" height="10.5" rx="1.5" fill="#d91c2a"/><circle cx="16.25" cy="16.25" r="3.2" fill="none" stroke="#fff" stroke-width="1"/><path d="M14 18.5L18.5 14" stroke="#fff" stroke-width="1"/></svg><svg style="left:16.7px;top:516px" width="21.30" height="19.80" viewBox="0 0 22 21" preserveAspectRatio="none"><path d="M10.5 0.5C5 0.5 5.5 3 5.5 3V6H11V7H3.5C3.5 7 0.5 7 0.5 11.5C0.5 16 3 16 3 16H5V13C5 13 5 10.5 7.5 10.5H13C13 10.5 15.5 10.5 15.5 8V3C15.5 3 16 0.5 10.5 0.5Z" fill="#3d74a8"/><path d="M11 21C16.5 21 16 18.5 16 18.5V15.5H10.5V14.5H18C18 14.5 21 14.5 21 10C21 5.5 18.5 5.5 18.5 5.5H16.5V8.5C16.5 8.5 16.5 11 14 11H8.5C8.5 11 6 11 6 13.5V18.5C6 18.5 5.5 21 11 21Z" fill="#f6cf45"/><path d="M15 15L19 17L15 19" fill="none" stroke="#333" stroke-width="1"/></svg><svg style="left:15.9px;top:548.6px" width="20.50" height="20.50" viewBox="0 0 21 21" preserveAspectRatio="none"><path d="M1.5 0V19.5H21" fill="none" stroke="#000" stroke-width="1.5"/><path d="M3 5H19V19" fill="none" stroke="#000" stroke-width="0.6" stroke-dasharray="1 1"/><path d="M2 7L7 12L2 17Z" fill="#f2ef7a"/><path d="M2.5 18.5L19 2" stroke="#1a2af0" stroke-width="1.4"/><path d="M19.5 1.5L14 3L18 7Z" fill="#1a2af0"/></svg><svg style="left:15.9px;top:577.6px" width="23.20" height="24.30" viewBox="0 0 23 24" preserveAspectRatio="none"><circle cx="11.5" cy="12" r="11.2" fill="#142a5e" stroke="#3b4f8a" stroke-width="0.7"/><path d="M3 14Q6 9 11 11T16 20Q10 22 5 18Z" fill="#4e8ecf"/><path d="M5 13Q8 11 10 13L9 16Z" fill="#5aa36b"/><circle cx="16" cy="6" r="2" fill="#dfe6f5" opacity="0.8"/></svg><svg style="left:17.8px;top:610px" width="21.30" height="23.80" viewBox="0 0 21 24" preserveAspectRatio="none"><path d="M1 6Q6 2 12 3T20 4L19 9Q13 10 8 9T1 9Z" fill="#29c4d8" stroke="#111" stroke-width="1.2"/><path d="M2 13Q7 9 12 11T20 11L19 16Q13 16 8 15T2 16Z" fill="#f2f02a" stroke="#111" stroke-width="1.2"/><path d="M3 19Q8 16 13 18T20 18L19 22Q13 22 8 21T3 22Z" fill="#3cd43a" stroke="#111" stroke-width="1.2"/><path d="M11 0V24" stroke="#e32" stroke-width="1.1" stroke-dasharray="2 1"/></svg><svg style="left:15.5px;top:642.4px" width="20.90" height="22.80" viewBox="0 0 21 23" preserveAspectRatio="none"><path d="M3 22C-1 19 1 14 5 10C8 7 7 2 11 1C16 -0.5 21 2 20 8C19 14 15 17 11 20C8 22 6 23 3 22Z" fill="#dce84a" stroke="#222" stroke-width="1"/><path d="M5 19C3 17 5 14 8 11C10 9 10 5 13 4C16 3 18 5 17 9C16 13 13 15 10 17C8 19 7 20 5 19Z" fill="#79a5d9"/><circle cx="13" cy="7" r="2.5" fill="#1a2cc4"/></svg><svg style="left:16.4px;top:690.7px" width="21.20" height="21.80" viewBox="0 0 21 22" preserveAspectRatio="none"><rect x="0.5" y="0.5" width="20" height="21" rx="1" fill="#6d94c6" stroke="#2a3f5f" stroke-width="0.8"/><rect x="0.5" y="0.5" width="5" height="21" fill="#2a3448"/><text x="9" y="15" font-size="12" font-family="Liberation Sans" fill="#fff">?</text></svg><svg style="left:15.5px;top:738px" width="22.70" height="22.30" viewBox="0 0 23 23" preserveAspectRatio="none"><rect x="0.5" y="0.5" width="21" height="21" fill="#fff" stroke="#6d9ad0" stroke-width="0.9"/><rect x="1" y="1" width="20" height="3" fill="#f5c660"/><path d="M1 8H21M1 12H21M1 16H21M6 4V21M12 4V21" stroke="#9cc1e8" stroke-width="0.8"/><path d="M7 11A6 6 0 0 1 18 9L20 7V13H14L16 11A4 4 0 0 0 9 12Z" fill="#72b52c"/><path d="M19 15A6 6 0 0 1 8 17L6 19V13H12L10 15A4 4 0 0 0 17 14Z" fill="#72b52c"/></svg><div class="a" style="left:11px;top:292px;width:32px;height:1px;background:#d4d4d4"></div><div class="a" style="left:11px;top:331.5px;width:32px;height:1px;background:#d4d4d4"></div><svg style="left:20px;top:344px" width="15" height="6" viewBox="0 0 15 6" shape-rendering="crispEdges"><g fill="#bdbdbd"><rect x="0" y="0" width="1" height="1"/><rect x="0" y="3" width="1" height="1"/><rect x="3" y="0" width="1" height="1"/><rect x="3" y="3" width="1" height="1"/><rect x="6" y="0" width="1" height="1"/><rect x="6" y="3" width="1" height="1"/><rect x="9" y="0" width="1" height="1"/><rect x="9" y="3" width="1" height="1"/><rect x="12" y="0" width="1" height="1"/><rect x="12" y="3" width="1" height="1"/></g></svg><svg style="left:20px;top:392px" width="15" height="6" viewBox="0 0 15 6" shape-rendering="crispEdges"><g fill="#bdbdbd"><rect x="0" y="0" width="1" height="1"/><rect x="0" y="3" width="1" height="1"/><rect x="3" y="0" width="1" height="1"/><rect x="3" y="3" width="1" height="1"/><rect x="6" y="0" width="1" height="1"/><rect x="6" y="3" width="1" height="1"/><rect x="9" y="0" width="1" height="1"/><rect x="9" y="3" width="1" height="1"/><rect x="12" y="0" width="1" height="1"/><rect x="12" y="3" width="1" height="1"/></g></svg><svg style="left:20px;top:504px" width="15" height="6" viewBox="0 0 15 6" shape-rendering="crispEdges"><g fill="#bdbdbd"><rect x="0" y="0" width="1" height="1"/><rect x="0" y="3" width="1" height="1"/><rect x="3" y="0" width="1" height="1"/><rect x="3" y="3" width="1" height="1"/><rect x="6" y="0" width="1" height="1"/><rect x="6" y="3" width="1" height="1"/><rect x="9" y="0" width="1" height="1"/><rect x="9" y="3" width="1" height="1"/><rect x="12" y="0" width="1" height="1"/><rect x="12" y="3" width="1" height="1"/></g></svg><svg style="left:20px;top:680px" width="15" height="6" viewBox="0 0 15 6" shape-rendering="crispEdges"><g fill="#bdbdbd"><rect x="0" y="0" width="1" height="1"/><rect x="0" y="3" width="1" height="1"/><rect x="3" y="0" width="1" height="1"/><rect x="3" y="3" width="1" height="1"/><rect x="6" y="0" width="1" height="1"/><rect x="6" y="3" width="1" height="1"/><rect x="9" y="0" width="1" height="1"/><rect x="9" y="3" width="1" height="1"/><rect x="12" y="0" width="1" height="1"/><rect x="12" y="3" width="1" height="1"/></g></svg><svg style="left:20px;top:728px" width="15" height="6" viewBox="0 0 15 6" shape-rendering="crispEdges"><g fill="#bdbdbd"><rect x="0" y="0" width="1" height="1"/><rect x="0" y="3" width="1" height="1"/><rect x="3" y="0" width="1" height="1"/><rect x="3" y="3" width="1" height="1"/><rect x="6" y="0" width="1" height="1"/><rect x="6" y="3" width="1" height="1"/><rect x="9" y="0" width="1" height="1"/><rect x="9" y="3" width="1" height="1"/><rect x="12" y="0" width="1" height="1"/><rect x="12" y="3" width="1" height="1"/></g></svg><svg style="left:38.75px;top:411.55px" width="8" height="4.5" viewBox="0 0 8 4.5"><path d="M0 0H8L4.0 4.5Z" fill="#555"/></svg><svg style="left:38.75px;top:443.55px" width="8" height="4.5" viewBox="0 0 8 4.5"><path d="M0 0H8L4.0 4.5Z" fill="#555"/></svg><svg style="left:38.75px;top:475.65px" width="8" height="4.5" viewBox="0 0 8 4.5"><path d="M0 0H8L4.0 4.5Z" fill="#555"/></svg><svg style="left:1887px;top:122px" width="18" height="6" viewBox="0 0 18 6" shape-rendering="crispEdges"><g fill="#bdbdbd"><rect x="0" y="0" width="1" height="1"/><rect x="0" y="3" width="1" height="1"/><rect x="3" y="0" width="1" height="1"/><rect x="3" y="3" width="1" height="1"/><rect x="6" y="0" width="1" height="1"/><rect x="6" y="3" width="1" height="1"/><rect x="9" y="0" width="1" height="1"/><rect x="9" y="3" width="1" height="1"/><rect x="12" y="0" width="1" height="1"/><rect x="12" y="3" width="1" height="1"/><rect x="15" y="0" width="1" height="1"/><rect x="15" y="3" width="1" height="1"/></g></svg><svg style="left:1883px;top:132px" width="22.80" height="23.40" viewBox="0 0 23 23" preserveAspectRatio="none"><path d="M0.5 0.5V22.5H22.5Z" fill="#e6e2dc" stroke="#c9c4bb" stroke-width="0.8"/><path d="M5 12V18H11Z" fill="#f6f6f6" stroke="#c9c4bb" stroke-width="0.6"/><rect x="16" y="2" width="6" height="20" fill="#ecead8" stroke="#c9c4bb" stroke-width="0.6"/></svg><svg style="left:1878px;top:164.8px" width="23.50" height="22.70" viewBox="0 0 23 23" preserveAspectRatio="none"><path d="M4 1C9 -1 12 3 16 2C20 1 22 5 20 9C18 12 13 11 9 12C5 13 1 10 1.5 6C2 4 2.5 2 4 1Z" fill="#dadbd8" stroke="#c6c6c2" stroke-width="0.8"/><rect x="12" y="12" width="11" height="11" rx="1.3" fill="#c4c4c4"/><path d="M14 16H18V14L21.5 17.5L18 21V19H14Z" fill="#fff"/></svg><svg style="left:1883.6px;top:197.5px" width="22.80" height="22.70" viewBox="0 0 23 23" preserveAspectRatio="none"><path d="M4 1C9 -1 12 3 16 2C20 1 22 5 20 9C18 12 13 11 9 12C5 13 1 10 1.5 6C2 4 2.5 2 4 1Z" fill="#dadbd8" stroke="#c6c6c2" stroke-width="0.8"/><rect x="12" y="12" width="11" height="11" rx="1.3" fill="#cfcfcf"/><circle cx="17.5" cy="17.5" r="3" fill="none" stroke="#fff" stroke-width="1.3"/></svg><svg style="left:1883.6px;top:228.7px" width="22.80" height="24.20" viewBox="0 0 23 24" preserveAspectRatio="none"><circle cx="8" cy="8" r="7" fill="#dadbd8" stroke="#c6c6c2" stroke-width="0.8"/><path d="M14 8L21 11V19L14 23L7 19V11Z" fill="#e2e2df" stroke="#c6c6c2" stroke-width="0.8"/><path d="M8 8L14 15" stroke="#c8c8c8"/></svg><svg style="left:1883.6px;top:261.4px" width="22.80" height="22.80" viewBox="0 0 23 23" preserveAspectRatio="none"><path d="M4 1C9 -1 12 3 16 2C20 1 22 5 20 9C18 12 13 11 9 12C5 13 1 10 1.5 6C2 4 2.5 2 4 1Z" fill="#dadbd8" stroke="#c6c6c2" stroke-width="0.8"/><rect x="13" y="13" width="10" height="10" rx="1.3" fill="#d0cbbd"/><circle cx="18" cy="18" r="2.4" fill="none" stroke="#fff" stroke-width="1.1"/><ellipse cx="8" cy="6" rx="4" ry="2.5" fill="#eee" stroke="#c6c6c2" stroke-width="0.6"/></svg><svg style="left:1883.6px;top:292.7px" width="22.80" height="22.80" viewBox="0 0 23 23" preserveAspectRatio="none"><path d="M4 1C9 -1 12 3 16 2C20 1 22 5 20 9C18 12 13 11 9 12C5 13 1 10 1.5 6C2 4 2.5 2 4 1Z" fill="#dadbd8" stroke="#c6c6c2" stroke-width="0.8"/><rect x="13" y="13" width="10" height="10" rx="1.3" fill="#d0cbbd"/><circle cx="18" cy="18" r="2.4" fill="none" stroke="#fff" stroke-width="1.1"/><path d="M3 22C0 20 2 15 6 14C9 14 9 18 7 20Z" fill="#dadbd8" stroke="#c6c6c2" stroke-width="0.6"/></svg><svg style="left:1883.6px;top:325.4px" width="22.80" height="22.80" viewBox="0 0 23 23" preserveAspectRatio="none"><path d="M4 1C9 -1 12 3 16 2C20 1 22 5 20 9C18 12 13 11 9 12C5 13 1 10 1.5 6C2 4 2.5 2 4 1Z" fill="#dadbd8" stroke="#c6c6c2" stroke-width="0.8"/><rect x="13" y="13" width="10" height="10" rx="1.3" fill="#d0cbbd"/><circle cx="18" cy="18" r="2.4" fill="none" stroke="#fff" stroke-width="1.1"/><ellipse cx="8" cy="6" rx="4" ry="2.5" fill="#eee" stroke="#c6c6c2" stroke-width="0.6"/></svg><svg style="left:1883.6px;top:356.7px" width="22.80" height="22.70" viewBox="0 0 23 23" preserveAspectRatio="none"><path d="M4 1C9 -1 12 3 16 2C20 1 22 5 20 9C18 12 13 11 9 12C5 13 1 10 1.5 6C2 4 2.5 2 4 1Z" fill="#dadbd8" stroke="#c6c6c2" stroke-width="0.8"/><rect x="13" y="13" width="10" height="10" rx="1.3" fill="#e6dcdc"/><path d="M15.5 15.5L20.5 20.5M20.5 15.5L15.5 20.5" stroke="#fff" stroke-width="1.5"/><ellipse cx="8" cy="6" rx="4" ry="2.5" fill="#eee" stroke="#c6c6c2" stroke-width="0.6"/></svg><svg style="left:1883.6px;top:389.4px" width="22.80" height="22.70" viewBox="0 0 23 23" preserveAspectRatio="none"><path d="M4 1C9 -1 12 3 16 2C20 1 22 5 20 9C18 12 13 11 9 12C5 13 1 10 1.5 6C2 4 2.5 2 4 1Z" fill="#dadbd8" stroke="#c6c6c2" stroke-width="0.8"/><rect x="13" y="13" width="10" height="10" rx="1.3" fill="#e6dcdc"/><path d="M15.5 15.5L20.5 20.5M20.5 15.5L15.5 20.5" stroke="#fff" stroke-width="1.5"/><path d="M3 22C0 20 2 15 6 14C9 14 9 18 7 20Z" fill="#dadbd8" stroke="#c6c6c2" stroke-width="0.6"/></svg><svg style="left:1883.6px;top:420.7px" width="22.80" height="21.30" viewBox="0 0 23 22" preserveAspectRatio="none"><path d="M4 1C9 -1 12 3 16 2C20 1 23 5 21 9C19 12 14 10 11 12C9 14 10 20 6 21C2 22 1 16 1.5 10C2 6 2 3 4 1Z" fill="#dcdcd6" stroke="#c6c6c2" stroke-width="0.8"/></svg><svg style="left:1883.6px;top:452px" width="22.80" height="22.70" viewBox="0 0 23 22" preserveAspectRatio="none"><path d="M3 21C-1 17 3 12 8 8C12 4 14 0 19 1C23 2 23 8 19 11C15 14 12 17 8 20C6 22 4 22 3 21Z" fill="#d6d7d0" stroke="#c6c6c2" stroke-width="2"/></svg><svg style="left:1883.6px;top:484.7px" width="22.80" height="22.70" viewBox="0 0 23 23" preserveAspectRatio="none"><path d="M1 1L8 12L12 5H19" fill="none" stroke="#c8c8c8" stroke-width="0.9"/><rect x="0" y="0" width="3" height="3" fill="#eee" stroke="#c8c8c8" stroke-width="0.6"/><rect x="11" y="4" width="3" height="3" fill="#eee" stroke="#c8c8c8" stroke-width="0.6"/><rect x="18" y="4" width="3" height="3" fill="#eee" stroke="#c8c8c8" stroke-width="0.6"/><rect x="12" y="12" width="11" height="11" rx="1.3" fill="#cdd0d8"/><circle cx="17.5" cy="17.5" r="3" fill="none" stroke="#fff" stroke-width="1.3"/></svg><svg style="left:1883.6px;top:516px" width="22.80" height="24.00" viewBox="0 0 22 24" preserveAspectRatio="none"><path d="M9 0V24M0 11H22M5 13V20M15 6V22" stroke="#cfcfcf" stroke-width="0.9"/><rect x="15" y="1" width="6" height="6" fill="#eee4d0" stroke="#d4cbb8" stroke-width="0.6"/><rect x="0" y="17" width="6" height="6" fill="#eee0e0" stroke="#dccbcb" stroke-width="0.6"/></svg><svg style="left:1883.6px;top:548.6px" width="22.80" height="22.80" viewBox="0 0 22 23" preserveAspectRatio="none"><path d="M10 1C4 -1 0 4 1 9C2 12 6 13 10 11Z M12 1C18 -1 22 4 21 9C20 12 16 13 12 11Z" fill="#dadbd8" stroke="#c6c6c2" stroke-width="0.7"/><path d="M11 0V12M8 12L13 19M14 12L9 19" stroke="#c8b8b8" stroke-width="0.8"/><circle cx="7.5" cy="20" r="2.4" fill="none" stroke="#d2b2b2" stroke-width="1"/><circle cx="14.5" cy="20" r="2.4" fill="none" stroke="#d2b2b2" stroke-width="1"/></svg><svg style="left:1883.6px;top:580px" width="22.80" height="24.00" viewBox="0 0 22 23" preserveAspectRatio="none"><path d="M10 1C4 -1 0 4 1 9C2 12 6 13 10 11Z M12 1C18 -1 22 4 21 9C20 12 16 13 12 11Z" fill="#dadbd8" stroke="#c6c6c2" stroke-width="0.7"/><path d="M11 0V12M8 12L13 19M14 12L9 19" stroke="#c8b8b8" stroke-width="0.8"/><circle cx="7.5" cy="20" r="2.4" fill="none" stroke="#d2b2b2" stroke-width="1"/><circle cx="14.5" cy="20" r="2.4" fill="none" stroke="#d2b2b2" stroke-width="1"/></svg><svg style="left:1883.6px;top:612.6px" width="22.80" height="21.40" viewBox="0 0 22 22" preserveAspectRatio="none"><path d="M10 1C4 -1 0 4 1 9C2 12 6 13 10 11Z M12 1C18 -1 22 4 21 9C20 12 16 13 12 11Z" fill="#dadbd8" stroke="#c6c6c2" stroke-width="0.7"/><path d="M8 5H16M8 8H16M10 3V10M14 3V10" stroke="#b8b8b8" stroke-width="0.7"/><path d="M6 12Q3 16 13 22" fill="none" stroke="#aaa" stroke-width="0.8"/></svg><svg style="left:1884.5px;top:645.3px" width="21.00" height="21.30" viewBox="0 0 22 22" preserveAspectRatio="none"><path d="M1 2Q6 0 8 3T15 1M1 7Q6 5 8 8T15 6M1 12Q6 10 8 13T15 11" stroke="#c8c8c8" fill="none" stroke-width="0.9"/><path d="M0 1.5H20M0 6.5H20M0 11.5H20M0 16.5H20M0 21H20" stroke="#d4d4d4" stroke-width="0.6"/></svg><svg style="left:1879px;top:676.6px" width="23.00" height="22.70" viewBox="0 0 23 23" preserveAspectRatio="none"><path d="M4 16A9 9 0 0 1 9 3" fill="none" stroke="#c8c8c8" stroke-width="1"/><path d="M10 0V12L18 6Z" fill="#d8d8d8" stroke="#c8c8c8" stroke-width="0.6"/><path d="M10 12L6 22H14Z" fill="#f2f2f2" stroke="#c8c8c8" stroke-width="0.6"/></svg><svg style="left:1906.5px;top:173.25px" width="8" height="4.5" viewBox="0 0 8 4.5"><path d="M0 0H8L4.0 4.5Z" fill="#d4d4d4"/></svg><svg style="left:1906.5px;top:685.75px" width="8" height="4.5" viewBox="0 0 8 4.5"><path d="M0 0H8L4.0 4.5Z" fill="#d4d4d4"/></svg><svg style="left:19px;top:992px" width="22.00" height="22.00" viewBox="0 0 22 22" preserveAspectRatio="none"><g transform="rotate(-45 11 11)"><path d="M3.5 2V11A7.5 7.5 0 0 0 18.5 11V2H13.5V11A2.5 2.5 0 0 1 8.5 11V2Z" fill="#d9101b" stroke="#8d0b12" stroke-width="0.6"/><rect x="3.8" y="2.3" width="4.4" height="3.6" fill="#f4f4f4"/><rect x="13.8" y="2.3" width="4.4" height="3.6" fill="#f4f4f4"/></g></svg><svg style="left:54.6px;top:992px" width="19.50" height="20.00" viewBox="0 0 20 20" preserveAspectRatio="none"><path d="M3 3L8 17L12 6H18M7 9H16" fill="none" stroke="#6cbf6c" stroke-width="1.3"/><g fill="#eee" stroke="#888" stroke-width="0.7"><rect x="1.5" y="1.5" width="3" height="3"/><rect x="6.5" y="15" width="3" height="3"/><rect x="10.5" y="4.5" width="3" height="3"/><rect x="16.5" y="4.5" width="3" height="3"/><rect x="14.5" y="7.5" width="3" height="3"/></g></svg><svg style="left:68.0px;top:1011.5px" width="7" height="4" viewBox="0 0 7 4"><path d="M0 0H7L3.5 4Z" fill="#555"/></svg><svg style="left:85px;top:994px" width="20.00" height="20.00" viewBox="0 0 20 20" preserveAspectRatio="none"><g fill="none" stroke="#888" stroke-width="0.8"><rect x="4" y="2" width="3" height="3"/><rect x="12" y="4" width="3" height="3"/><rect x="8" y="12" width="3" height="3"/></g></svg><svg style="left:102.0px;top:1011.5px" width="7" height="4" viewBox="0 0 7 4"><path d="M0 0H7L3.5 4Z" fill="#555"/></svg><svg style="left:333.8px;top:992px" width="20.00" height="22.00" viewBox="0 0 20 22" preserveAspectRatio="none"><path d="M1 0.5L6 9.5V22M6 9.5L20 4" stroke="#6cbf6c" stroke-width="1.5" fill="none"/><rect x="4" y="7.5" width="4" height="4" fill="#ddd" stroke="#999" stroke-width="0.8"/></svg><svg style="left:365px;top:991.8px" width="20.50" height="21.20" viewBox="0 0 22 23" preserveAspectRatio="none"><path d="M8 1C13 0 21 1 22 6C22 10 18 11 15 12C13 12 12 10 10 9Z" fill="#bdbdbd" stroke="#444" stroke-width="0.9"/><path d="M3 1C7 -0.5 13 2 13 8C13 12 17 15 17 19C17 23 11 23 9 20C7 17 9 14 6 11C2 8 -1 3 3 1Z" fill="#8cc47c" stroke="#444" stroke-width="0.9"/></svg><svg style="left:398px;top:992px" width="22.00" height="22.00" viewBox="0 0 22 22" preserveAspectRatio="none"><path d="M1 1L21 21M21 1L1 21" stroke="#6cbf6c" stroke-width="1.5"/><rect x="9" y="9" width="4" height="4" fill="#ddd" stroke="#999" stroke-width="0.8"/></svg><svg style="left:431.3px;top:992px" width="21.70" height="22.00" viewBox="0 0 22 22" preserveAspectRatio="none"><path d="M1 21L21 1" stroke="#6cbf6c" stroke-width="1.5"/><path d="M3 2L8 10L14 7L19 19L12 12L6 14Z" fill="#f5c518" stroke="#d49a00" stroke-width="0.6"/></svg><svg style="left:476.9px;top:992px" width="20.00" height="22.00" viewBox="0 0 20 22" preserveAspectRatio="none"><path d="M2 6L7 17L19 14M2 6L19 14M7 17L1 21" stroke="#6cbf6c" stroke-width="1.3" fill="none"/><circle cx="2.5" cy="5.5" r="2.2" fill="#ccc" stroke="#888" stroke-width="0.7"/><circle cx="7" cy="17" r="2.2" fill="#ccc" stroke="#888" stroke-width="0.7"/><path d="M10 2L12 0.5L19 10L18 13L15.5 11Z" fill="#f2df3a" stroke="#999" stroke-width="0.6"/></svg><svg style="left:528.8px;top:990.9px" width="16.80" height="23.70" viewBox="0 0 17 24" preserveAspectRatio="none"><defs><linearGradient id="cyg" x1="0" x2="1"><stop offset="0" stop-color="#f2d46a"/><stop offset="0.5" stop-color="#fae88f"/><stop offset="1" stop-color="#d9a21a"/></linearGradient></defs><path d="M0.5 3V21A8 2.8 0 0 0 16.5 21V3Z" fill="url(#cyg)"/><ellipse cx="8.5" cy="3" rx="8" ry="2.6" fill="#f7e08a" stroke="#d8b84a" stroke-width="0.5"/></svg><svg style="left:553px;top:991px" width="29.30" height="23.60" viewBox="0 0 29 24" preserveAspectRatio="none"><rect x="0" y="0" width="4.5" height="24" fill="#9b4b2a"/><rect x="0" y="18" width="29" height="4" fill="#9b4b2a"/><path d="M12 4L26 16H12Z" fill="none" stroke="#d8a92a" stroke-width="1.6"/><path d="M12 4A10 10 0 0 1 22 12" fill="none" stroke="#d8a92a" stroke-width="1.6"/></svg><svg style="left:591.3px;top:995px" width="23.10" height="15.90" viewBox="0 0 23 16" preserveAspectRatio="none"><path d="M3 1Q-1 8 3 15M6 3Q3 8 6 13M20 1Q24 8 20 15M17 3Q20 8 17 13" fill="none" stroke="#f5c500" stroke-width="1.5"/><path d="M8 4Q8 9 11.5 9T15 4" fill="none" stroke="#111" stroke-width="1.8"/><rect x="10.5" y="8" width="2" height="8" fill="#111"/><circle cx="11.5" cy="6" r="1.8" fill="#2ee05a"/></svg><svg style="left:625.6px;top:991.8px" width="21.30" height="21.20" viewBox="0 0 21 21" preserveAspectRatio="none"><path d="M0.5 14L10 8L20.5 13L11 20Z" fill="#e8f06a" stroke="#666" stroke-width="0.7"/><path d="M10.5 13C8 8 5.5 6 5.5 4A5 4 0 0 1 15.5 4C15.5 6 13 8 10.5 13Z" fill="#f25a14" stroke="#b03a08" stroke-width="0.5"/></svg><svg style="left:673.1px;top:990.9px" width="24.00" height="24.00" viewBox="0 0 24 24" preserveAspectRatio="none"><rect width="24" height="24" fill="#7cb85a"/><path d="M0 24L24 0V24Z" fill="#92c870" opacity="0.6"/><circle cx="13" cy="10" r="6" fill="none" stroke="#fff" stroke-width="2"/><path d="M9 14L3 20" stroke="#fff" stroke-width="2.4" stroke-linecap="round"/></svg><svg style="left:706px;top:990.9px" width="24.00" height="24.00" viewBox="0 0 24 24" preserveAspectRatio="none"><rect width="20" height="24" fill="#f5d063"/><path d="M0 20Q6 16 10 20T20 18V24H0Z M6 0Q10 8 14 6T20 12V16Q14 10 10 12T4 0Z" fill="#4f86d6"/><path d="M0 3H5V8H0Z" fill="#b0357c"/><path d="M2 4L9 2L7 7Z" fill="#42b04a"/><path d="M10 18L22 2L24 3.5L12 20Z" fill="#8a4a20"/></svg><svg style="left:755.3px;top:990.9px" width="23.70" height="24.00" viewBox="0 0 24 24" preserveAspectRatio="none"><rect width="24" height="24" fill="#ffc8d4"/><text x="12" y="16.5" font-size="12" font-weight="normal" font-family="Liberation Sans" fill="#e8162a" text-anchor="middle">AD</text></svg><svg style="left:788.1px;top:990.9px" width="23.80" height="24.00" viewBox="0 0 24 24" preserveAspectRatio="none"><rect width="24" height="24" fill="#e4ebe4"/><text x="12" y="16.5" font-size="12" font-weight="normal" font-family="Liberation Sans" fill="#dcd4d4" text-anchor="middle">MO</text></svg><svg style="left:821px;top:990.9px" width="24.00" height="24.00" viewBox="0 0 24 24" preserveAspectRatio="none"><rect width="24" height="24" fill="#c4b8c6"/><text x="12" y="16.5" font-size="12" font-weight="normal" font-family="Liberation Sans" fill="#e0d8d8" text-anchor="middle">RO</text></svg><svg style="left:925.3px;top:990.9px" width="23.70" height="24.00" viewBox="0 0 24 24" preserveAspectRatio="none"><rect width="24" height="24" fill="#dcdcc8"/><text x="12" y="16.5" font-size="12" font-weight="normal" font-family="Liberation Sans" fill="#c0ccc4" text-anchor="middle">SC</text></svg><svg style="left:958.1px;top:990.9px" width="24.00" height="24.00" viewBox="0 0 24 24" preserveAspectRatio="none"><rect width="24" height="24" fill="#c8c0c2"/><text x="12" y="16.5" font-size="11" font-weight="normal" font-family="Liberation Sans" fill="#f0f0f0" text-anchor="middle">ADJ</text></svg><svg style="left:991.3px;top:990.9px" width="23.70" height="24.00" viewBox="0 0 24 24" preserveAspectRatio="none"><rect width="24" height="24" fill="#d6ddd9"/><text x="12" y="16.5" font-size="12" font-weight="normal" font-family="Liberation Sans" fill="#e6d4dc" text-anchor="middle">2P</text></svg><svg style="left:1024.4px;top:990.9px" width="23.10" height="24.00" viewBox="0 0 24 24" preserveAspectRatio="none"><rect width="24" height="24" fill="#f6f6f6"/><text x="12" y="16.5" font-size="11" font-weight="normal" font-family="Liberation Sans" fill="#9a9a9a" text-anchor="middle">T-</text></svg><svg style="left:1057.1px;top:990.9px" width="23.90" height="24.00" viewBox="0 0 24 24" preserveAspectRatio="none"><rect width="24" height="24" fill="#9c9c9c"/><text x="12" y="16.5" font-size="12" font-weight="normal" font-family="Liberation Sans" fill="#ffffff" text-anchor="middle">T+</text></svg><svg style="left:1090px;top:990.9px" width="24.00" height="24.00" viewBox="0 0 24 24" preserveAspectRatio="none"><rect width="24" height="24" fill="#dde6d8"/><text x="12" y="16.5" font-size="12" font-weight="normal" font-family="Liberation Sans" fill="#e8c4c4" text-anchor="middle">! !</text></svg><svg style="left:1124px;top:990.9px" width="23.10" height="24.00" viewBox="0 0 23 24" preserveAspectRatio="none"><rect width="23" height="24" fill="#b7b8c4"/><path d="M1 9L8 2V6C16 6 21 10 22 20C19 14 14 12 8 12V16Z" fill="#dcdee8"/></svg><svg style="left:1172.5px;top:991.5px" width="23.80" height="23.00" viewBox="0 0 24 23" preserveAspectRatio="none"><path d="M4 1C9 -1 14 2 18 1C22 1 24 4 22 7C20 10 16 9 12 10C8 11 4 10 2 8C0 6 1 2 4 1Z" fill="#dadbd8" stroke="#c6c6c2" stroke-width="0.8"/><path d="M2 20C0 17 3 13 8 13C11 13 12 17 9 20C7 22 4 22 2 20Z" fill="#dadbd8" stroke="#c6c6c2" stroke-width="0.8"/><path d="M10 13L18 6M12 10L17 15" stroke="#cfb8b8" stroke-width="0.8"/><circle cx="19.5" cy="5" r="1.8" fill="none" stroke="#d4aaaa"/><circle cx="18" cy="16" r="1.8" fill="none" stroke="#d4aaaa"/></svg><svg style="left:1218px;top:991.5px" width="23.30" height="23.00" viewBox="0 0 24 23" preserveAspectRatio="none"><path d="M4 1C9 -1 14 2 18 1C22 1 24 4 22 7C20 10 16 9 12 10C8 11 4 10 2 8C0 6 1 2 4 1Z" fill="#dadbd8" stroke="#c6c6c2" stroke-width="0.8"/><path d="M2 20C0 17 3 13 8 13C11 13 12 17 9 20C7 22 4 22 2 20Z" fill="#dadbd8" stroke="#c6c6c2" stroke-width="0.8"/><path d="M10 13L18 6M12 10L17 15" stroke="#cfb8b8" stroke-width="0.8"/><circle cx="19.5" cy="5" r="1.8" fill="none" stroke="#d4aaaa"/><circle cx="18" cy="16" r="1.8" fill="none" stroke="#d4aaaa"/><rect x="13" y="13" width="10" height="10" rx="1.3" fill="#d0cbbd"/><circle cx="18" cy="18" r="2.4" fill="none" stroke="#fff" stroke-width="1.1"/></svg><svg style="left:1251.3px;top:991.5px" width="21.80" height="23.00" viewBox="0 0 22 23" preserveAspectRatio="none"><path d="M10 1C4 -1 0 4 1 9C2 12 6 13 10 11Z M12 1C18 -1 22 4 21 9C20 12 16 13 12 11Z" fill="#dadbd8" stroke="#c6c6c2" stroke-width="0.7"/><path d="M11 0V12M8 12L13 19M14 12L9 19" stroke="#c8b8b8" stroke-width="0.8"/><circle cx="7.5" cy="20" r="2.4" fill="none" stroke="#d2b2b2" stroke-width="1"/><circle cx="14.5" cy="20" r="2.4" fill="none" stroke="#d2b2b2" stroke-width="1"/></svg><svg style="left:1283px;top:991px" width="23.90" height="23.50" viewBox="0 0 24 24" preserveAspectRatio="none"><path d="M10 1C4 -1 0 4 1 9C2 12 6 13 10 11Z M12 1C18 -1 22 4 21 9C20 12 16 13 12 11Z" fill="#dadbd8" stroke="#c6c6c2" stroke-width="0.8"/><path d="M9 4H14M9 6.5H14M9 9H14" stroke="#b0b0b0" stroke-width="0.8"/><path d="M10 11Q7 15 13 20" fill="none" stroke="#aaa" stroke-width="0.8"/></svg><svg style="left:1316.3px;top:991px" width="23.70" height="23.50" viewBox="0 0 24 24" preserveAspectRatio="none"><path d="M1 1H16V12H1Z" fill="none" stroke="#d8d0b0" stroke-width="0.8" stroke-dasharray="1 1"/><path d="M3 2C9 0 14 3 18 2C22 2 24 5 22 8C20 11 14 9 10 11C6 12 2 10 2 7Z" fill="#ececec" stroke="#c6c6c2" stroke-width="0.8"/><path d="M2 21C1 17 4 14 7 14C10 15 10 20 7 22Z" fill="#ececec" stroke="#c6c6c2" stroke-width="0.8"/><rect x="13" y="13" width="11" height="11" rx="1" fill="#d0d3dc"/><circle cx="18.5" cy="18.5" r="3" fill="#ddd" stroke="#fff"/></svg><svg style="left:1350px;top:991.5px" width="23.10" height="12.50" viewBox="0 0 23 13" preserveAspectRatio="none"><path d="M3 2C8 0 12 3 16 2C20 1 23 4 22 8C21 12 17 11 13 12C9 13 2 13 1 9C0 6 1 3 3 2Z" fill="#dadbd8" stroke="#c6c6c2" stroke-width="0.8"/><ellipse cx="8" cy="6.5" rx="4.5" ry="3.5" fill="#f2f2f2" stroke="#c0c0c0" stroke-width="0.6" stroke-dasharray="1 0.8"/></svg><svg style="left:1395px;top:991.5px" width="23.00" height="12.50" viewBox="0 0 24 13" preserveAspectRatio="none"><path d="M3 2C8 0 12 3 16 2C20 1 23 4 22 8C21 12 17 11 13 12C9 13 2 13 1 9C0 6 1 3 3 2Z" fill="#f4f4f4" stroke="#c4c4c4" stroke-width="0.8" stroke-dasharray="1.2 1"/><ellipse cx="7" cy="6.5" rx="4.5" ry="3.5" fill="#dedede" stroke="#c0c0c0" stroke-width="0.6" stroke-dasharray="1 0.8"/></svg><svg style="left:1440px;top:991.5px" width="23.00" height="23.00" viewBox="0 0 23 23" preserveAspectRatio="none"><path d="M3 2C8 0 12 3 16 2C20 1 23 4 22 8C21 12 17 11 13 12C9 13 2 13 1 9C0 6 1 3 3 2Z" fill="#f4f4f4" stroke="#c6c6c2" stroke-width="0.8"/><ellipse cx="8" cy="6" rx="4" ry="3" fill="#dadbd8" stroke="#c6c6c2" stroke-width="0.6"/><rect x="12" y="12" width="11" height="11" rx="1.3" fill="#d0cbbd"/><circle cx="17.5" cy="17.5" r="2.6" fill="none" stroke="#fff" stroke-width="1.1"/></svg><svg style="left:1484.4px;top:991.5px" width="23.60" height="23.00" viewBox="0 0 23 23" preserveAspectRatio="none"><path d="M3 2C8 0 12 3 16 2C20 1 23 4 22 8C21 12 17 11 13 12C9 13 2 13 1 9C0 6 1 3 3 2Z" fill="#f2f2f2" stroke="#c6c6c2" stroke-width="0.8"/><path d="M8 12L12 3" stroke="#c0c0c0"/><rect x="12" y="12" width="11" height="11" rx="1.3" fill="#d0cbbd"/><circle cx="17.5" cy="17.5" r="2.6" fill="none" stroke="#fff" stroke-width="1.1"/></svg><svg style="left:1528.8px;top:991px" width="24.00" height="23.50" viewBox="0 0 23 23" preserveAspectRatio="none"><path d="M3 2C8 0 12 3 16 2C20 1 23 4 22 8C21 12 17 11 13 12C9 13 2 13 1 9C0 6 1 3 3 2Z" fill="#e4e6ee" stroke="#bdbdc8" stroke-width="0.8"/><path d="M8 12L12 3" stroke="#c0c0c0"/><rect x="12" y="12" width="11" height="11" rx="1.3" fill="#d0cbbd"/><circle cx="17.5" cy="17.5" r="2.6" fill="none" stroke="#fff" stroke-width="1.1"/></svg><svg style="left:1561.9px;top:992px" width="24.10" height="22.50" viewBox="0 0 24 22" preserveAspectRatio="none"><path d="M2 4L7 20L12 4L18 1M2 4L11 11" fill="none" stroke="#c8d4c8" stroke-width="1.2"/><circle cx="2" cy="4" r="1.7" fill="none" stroke="#ccc"/><circle cx="18" cy="1.5" r="1.5" fill="none" stroke="#ccc"/><circle cx="22" cy="1.5" r="1.5" fill="none" stroke="#ccc"/><rect x="13" y="11" width="11" height="11" rx="1" fill="#d0d3dc"/><circle cx="18.5" cy="16.5" r="3" fill="#ddd" stroke="#fff"/></svg><svg style="left:1608px;top:991.5px" width="22.00" height="23.00" viewBox="0 0 22 23" preserveAspectRatio="none"><path d="M3 1C7 0 9 3 11 3C13 3 16 0 19 1C22 2 22 8 20 12C18 15 12 16 8 16C4 16 1 13 1 8C1 5 1 2 3 1Z" fill="#f4f4f4" stroke="#cfcfcf" stroke-width="0.9"/><path d="M4 14L11 11L17 14" fill="none" stroke="#d8d8d8" stroke-width="0.8"/><path d="M17 22Q19 22 19 15" stroke="#888" stroke-width="0.8" fill="none"/></svg><svg style="left:1641.3px;top:991.5px" width="22.50" height="23.00" viewBox="0 0 22 23" preserveAspectRatio="none"><path d="M3 1C7 0 9 3 11 3C13 3 16 0 19 1C22 2 22 8 20 12C18 15 12 16 8 16C4 16 1 13 1 8C1 5 1 2 3 1Z" fill="#f4f4f4" stroke="#cfcfcf" stroke-width="0.9"/><path d="M4 18L11 13L17 17" fill="none" stroke="#d8d8d8" stroke-width="0.8"/><text x="16" y="23" font-size="10" font-family="Liberation Serif" fill="#888">d</text></svg><svg style="left:1674.4px;top:991.5px" width="21.90" height="23.00" viewBox="0 0 22 23" preserveAspectRatio="none"><path d="M3 1C7 0 9 3 11 3C13 3 16 0 19 1C22 2 22 8 20 12C18 15 12 16 8 16C4 16 1 13 1 8C1 5 1 2 3 1Z" fill="#f4f4f4" stroke="#cfcfcf" stroke-width="0.9"/><path d="M4 14L11 11L17 14" fill="none" stroke="#d8d8d8" stroke-width="0.8"/><path d="M17 22Q19 22 19 15" stroke="#888" stroke-width="0.8" fill="none"/></svg><svg style="left:1708px;top:992.5px" width="20.00" height="20.00" viewBox="0 0 20 21" preserveAspectRatio="none"><path d="M1 10L10 1L19 10L10 20Z" fill="#d8dcd4" stroke="#cfd3cb" stroke-width="0.8"/><path d="M4 4L16 17" stroke="#aaa" stroke-width="0.7" stroke-dasharray="1 1"/></svg><svg style="left:383.5px;top:1011.0px" width="7" height="4" viewBox="0 0 7 4"><path d="M0 0H7L3.5 4Z" fill="#555"/></svg><svg style="left:459.3px;top:1000.3px" width="9" height="5" viewBox="0 0 9 5"><path d="M0 0H9L4.5 5Z" fill="#444"/></svg><svg style="left:1201.8px;top:1000.5px" width="9" height="5" viewBox="0 0 9 5"><path d="M0 0H9L4.5 5Z" fill="#d6d6d6"/></svg><svg style="left:1378.5px;top:1000.5px" width="9" height="5" viewBox="0 0 9 5"><path d="M0 0H9L4.5 5Z" fill="#d6d6d6"/></svg><svg style="left:1423.5px;top:1000.5px" width="9" height="5" viewBox="0 0 9 5"><path d="M0 0H9L4.5 5Z" fill="#d6d6d6"/></svg><svg style="left:1468.5px;top:1000.5px" width="9" height="5" viewBox="0 0 9 5"><path d="M0 0H9L4.5 5Z" fill="#d6d6d6"/></svg><svg style="left:1513.0px;top:1000.5px" width="9" height="5" viewBox="0 0 9 5"><path d="M0 0H9L4.5 5Z" fill="#d6d6d6"/></svg><svg style="left:1591.8px;top:1000.5px" width="9" height="5" viewBox="0 0 9 5"><path d="M0 0H9L4.5 5Z" fill="#d6d6d6"/></svg><svg style="left:514px;top:995px" width="6" height="18" viewBox="0 0 6 18" shape-rendering="crispEdges"><g fill="#bdbdbd"><rect x="0" y="0" width="1" height="1"/><rect x="0" y="3" width="1" height="1"/><rect x="0" y="6" width="1" height="1"/><rect x="0" y="9" width="1" height="1"/><rect x="0" y="12" width="1" height="1"/><rect x="0" y="15" width="1" height="1"/><rect x="3" y="0" width="1" height="1"/><rect x="3" y="3" width="1" height="1"/><rect x="3" y="6" width="1" height="1"/><rect x="3" y="9" width="1" height="1"/><rect x="3" y="12" width="1" height="1"/><rect x="3" y="15" width="1" height="1"/></g></svg><svg style="left:662px;top:995px" width="6" height="18" viewBox="0 0 6 18" shape-rendering="crispEdges"><g fill="#bdbdbd"><rect x="0" y="0" width="1" height="1"/><rect x="0" y="3" width="1" height="1"/><rect x="0" y="6" width="1" height="1"/><rect x="0" y="9" width="1" height="1"/><rect x="0" y="12" width="1" height="1"/><rect x="0" y="15" width="1" height="1"/><rect x="3" y="0" width="1" height="1"/><rect x="3" y="3" width="1" height="1"/><rect x="3" y="6" width="1" height="1"/><rect x="3" y="9" width="1" height="1"/><rect x="3" y="12" width="1" height="1"/><rect x="3" y="15" width="1" height="1"/></g></svg><svg style="left:744px;top:995px" width="6" height="18" viewBox="0 0 6 18" shape-rendering="crispEdges"><g fill="#bdbdbd"><rect x="0" y="0" width="1" height="1"/><rect x="0" y="3" width="1" height="1"/><rect x="0" y="6" width="1" height="1"/><rect x="0" y="9" width="1" height="1"/><rect x="0" y="12" width="1" height="1"/><rect x="0" y="15" width="1" height="1"/><rect x="3" y="0" width="1" height="1"/><rect x="3" y="3" width="1" height="1"/><rect x="3" y="6" width="1" height="1"/><rect x="3" y="9" width="1" height="1"/><rect x="3" y="12" width="1" height="1"/><rect x="3" y="15" width="1" height="1"/></g></svg><svg style="left:1162px;top:995px" width="6" height="18" viewBox="0 0 6 18" shape-rendering="crispEdges"><g fill="#bdbdbd"><rect x="0" y="0" width="1" height="1"/><rect x="0" y="3" width="1" height="1"/><rect x="0" y="6" width="1" height="1"/><rect x="0" y="9" width="1" height="1"/><rect x="0" y="12" width="1" height="1"/><rect x="0" y="15" width="1" height="1"/><rect x="3" y="0" width="1" height="1"/><rect x="3" y="3" width="1" height="1"/><rect x="3" y="6" width="1" height="1"/><rect x="3" y="9" width="1" height="1"/><rect x="3" y="12" width="1" height="1"/><rect x="3" y="15" width="1" height="1"/></g></svg><div class="a" style="left:850.3px;top:992.1px;width:69.5px;height:22.5px;border:1px solid #b4b4b4;border-radius:3px;background:#f0f0f0"></div><div class="a" style="left:905.6px;top:993px;width:1px;height:21px;background:#c0c0c0"></div><svg style="left:908px;top:996px" width="9" height="16" viewBox="0 0 9 16"><path d="M0.5 5L4.5 1L8.5 5Z M0.5 11L4.5 15L8.5 11Z" fill="#cfcfcf"/></svg><svg style="left:1351.9px;top:143.5px" width="16.10" height="13.50" viewBox="0 0 16 14" preserveAspectRatio="none"><path d="M3 1C6 0 9 3 12 2C15 1 16 4 15 7C14 10 12 9 10 10C7 11 4 13 2 11C0 9 0 3 3 1Z" fill="#e6e6e6" stroke="#888" stroke-width="0.8"/></svg><svg style="left:1352.8px;top:175.5px" width="22.20" height="18.30" viewBox="0 0 23 19" preserveAspectRatio="none"><path d="M0.5 9L6 1L20 8L14 17Z" fill="#e0d96a"/><path d="M1 11L4 6L15 11L12 16Z" fill="#73a8e0"/><path d="M0.5 13L3 9L13 14L11 18Z" fill="#c74a58"/><path d="M8 11L13 7L17 11L12 17Z" fill="#c8b47a" stroke="#8a7a4a" stroke-width="0.6"/><path d="M14 9L22 1" stroke="#a89a5a" stroke-width="2"/></svg><svg style="left:1394.5px;top:173.4px" width="13.10" height="14.30" viewBox="0 0 14 15" preserveAspectRatio="none"><g fill="#16b24a" stroke="#0a6a2a" stroke-width="0.7"><rect x="0.5" y="0.5" width="11" height="3.5" rx="1"/><rect x="2.5" y="5.5" width="11" height="3.5" rx="1"/><rect x="0.5" y="10.5" width="11" height="3.5" rx="1"/></g></svg><svg style="left:1349.7px;top:210.6px" width="22.30" height="12.80" viewBox="0 0 23 13" preserveAspectRatio="none"><path d="M4 1H22V11H4L0.5 6Z" fill="#f7da45" stroke="#c9a21e" stroke-width="0.9"/><text x="4.6" y="9.4" font-size="8.6" font-weight="bold" font-family="Liberation Sans" fill="#333" textLength="16" lengthAdjust="spacingAndGlyphs">abc</text></svg><svg style="left:1349.7px;top:242.6px" width="22.30" height="11.30" viewBox="0 0 23 12" preserveAspectRatio="none"><rect x="0.6" y="0.6" width="21.8" height="10.8" rx="5.4" fill="#f2f2f6" stroke="#d8d8e0" stroke-width="1.2"/><text x="11.5" y="9.4" font-size="9.6" font-family="Liberation Sans" fill="#222" text-anchor="middle" textLength="18" lengthAdjust="spacingAndGlyphs">abc</text></svg><svg style="left:1350.5px;top:270px" width="21.50" height="22.30" viewBox="0 0 22 22" preserveAspectRatio="none"><path d="M11 0.8L21.2 5.8L11 10.8L0.8 5.8Z" fill="#f4868a" stroke="#c81e24" stroke-width="1"/><path d="M0.8 5.8L11 10.8V21.2L0.8 16.2Z" fill="#6cc83a" stroke="#3a8a1e" stroke-width="0.8"/><path d="M21.2 5.8L11 10.8V21.2L21.2 16.2Z" fill="#f6e04a" stroke="#c8a818" stroke-width="0.8"/></svg><svg style="left:1350px;top:301.5px" width="22.00" height="23.50" viewBox="0 0 22 23" preserveAspectRatio="none"><rect x="6" y="0.5" width="10" height="6" fill="#f06a6a" stroke="#d05050" stroke-width="0.5"/><path d="M11 6.5V14M4.5 8V15M17.5 8V15M4.5 8H17.5" stroke="#d8a040" stroke-width="2" fill="none"/><rect x="0.5" y="15" width="9" height="7.5" fill="#f8dc50" stroke="#d0a828" stroke-width="0.6"/><rect x="12.5" y="15" width="9" height="7.5" fill="#8cbcf0" stroke="#5a8ac8" stroke-width="0.6"/></svg><svg style="left:1350px;top:335.6px" width="19.00" height="19.80" viewBox="0 0 19 20" preserveAspectRatio="none"><path d="M1 10C1 5 5 3 10 4V1L15 6L10 11V8C6 7.5 4 9 4 12Z" fill="#62b072"/><path d="M18 12C18 17 14 19 9 18V21L4 16L9 11V14C13 14.5 15 13 15 10Z" fill="#f0883a"/></svg><svg style="left:1810px;top:205px" width="14.60" height="14.50" viewBox="0 0 16 16" preserveAspectRatio="none"><path d="M5.5 0.5H10.5V5.5H15.5V10.5H10.5V15.5H5.5V10.5H0.5V5.5H5.5Z" fill="#fff" stroke="#3a8a3a" stroke-width="1"/></svg><svg style="left:1845px;top:206.5px" width="15.00" height="8.50" viewBox="0 0 16 10" preserveAspectRatio="none"><path d="M8 0.5L15.5 9.5H0.5Z" fill="#e4e4e4" stroke="#cfcfcf" stroke-width="0.8"/></svg><svg style="left:1812px;top:238px" width="12.00" height="4.00" viewBox="0 0 15 6" preserveAspectRatio="none"><rect x="0.5" y="0.5" width="14" height="5" fill="#fafafa" stroke="#e0c4c4" stroke-width="0.8"/></svg><svg style="left:1845px;top:235.5px" width="15.00" height="8.50" viewBox="0 0 16 10" preserveAspectRatio="none"><path d="M8 9.5L15.5 0.5H0.5Z" fill="#e4e4e4" stroke="#cfcfcf" stroke-width="0.8"/></svg><svg style="left:1811.5px;top:262px" width="13.00" height="13.00" viewBox="0 0 16 15" preserveAspectRatio="none"><path d="M0.5 0.5H11V4H4.5V14.5H0.5Z" fill="#fff" stroke="#555" stroke-width="0.9"/><rect x="4.5" y="4" width="11" height="10.5" fill="#fff" stroke="#555" stroke-width="0.9"/><rect x="10" y="9" width="5" height="5" fill="#f2d020"/></svg><svg style="left:1845px;top:261.5px" width="13.50" height="14.50" viewBox="0 0 15 16" preserveAspectRatio="none"><path d="M3 7V4A4.5 4.5 0 0 1 12 4" fill="none" stroke="#666" stroke-width="1.8"/><rect x="0.5" y="7" width="14" height="8.5" rx="1" fill="#f5d820" stroke="#b8a010" stroke-width="0.8"/></svg><svg style="left:1508px;top:388.5px" width="12.50" height="12.50" viewBox="0 0 12 12" preserveAspectRatio="none"><circle cx="2" cy="10" r="1" fill="#777"/><circle cx="6" cy="4" r="1" fill="#777"/><circle cx="10" cy="1.5" r="1" fill="#777"/></svg><svg style="left:1830px;top:418px" width="11.00" height="15.00" viewBox="0 0 12 14" preserveAspectRatio="none"><path d="M10 2.5C7 0 1.5 0.8 1.5 4C1.5 6 3.5 7 6 7C3 7 1 8.5 1 10.5C1 14 7 14.5 10.5 11.5" fill="none" stroke="#5b2a6f" stroke-width="1.5"/></svg><svg style="left:1555px;top:889px" width="23.40" height="15.30" viewBox="0 0 24 16" preserveAspectRatio="none"><path d="M0.5 7L4 3V11Z" fill="#999"/><rect x="4" y="1" width="13" height="13" fill="#f8f8f8" stroke="#777" stroke-width="0.9"/><path d="M6.5 4.5H14.5M6.5 7.5H14.5M6.5 10.5H14.5" stroke="#666" stroke-width="1"/><path d="M17 12H23L20 15Z" fill="#555"/></svg><svg style="left:1737px;top:889.5px" width="14.00" height="13.50" viewBox="0 0 14 14" preserveAspectRatio="none"><path d="M7 0.5L9 5H13.5L10 8L11.5 13L7 10L2.5 13L4 8L0.5 5H5Z" fill="#dcd8c8" stroke="#cfc9b0" stroke-width="0.5"/></svg><svg style="left:1391.5px;top:963px" width="14.50" height="12.00" viewBox="0 0 16 14" preserveAspectRatio="none"><path d="M0.5 5L6 0.5V3.5C12 3.5 15.5 6 15 10C14.5 13 12 14 9 13.5C11 12.5 12 11 11 9C10 7.5 8 7 6 7V10Z" fill="#e8822a"/></svg><svg style="left:1422px;top:963px" width="14.00" height="12.00" viewBox="0 0 16 14" preserveAspectRatio="none"><path d="M15.5 5L10 0.5V3.5C4 3.5 0.5 6 1 10C1.5 13 4 14 7 13.5C5 12.5 4 11 5 9C6 7.5 8 7 10 7V10Z" fill="#3aa06a"/></svg><svg style="left:1798.8px;top:960.5px" width="14.20" height="14.00" viewBox="0 0 16 15" preserveAspectRatio="none"><path d="M0.8 8L5 14.5L15.5 0.5C10 4 7 8 5 11L2.5 6.5Z" fill="#2e7d2e"/></svg><svg style="left:61px;top:143px" width="17.00" height="14.00" viewBox="0 0 23 19" preserveAspectRatio="none"><path d="M0.5 9L6 1L20 8L14 17Z" fill="#e0d96a"/><path d="M1 11L4 6L15 11L12 16Z" fill="#73a8e0"/><path d="M0.5 13L3 9L13 14L11 18Z" fill="#c74a58"/><path d="M8 11L13 7L17 11L12 17Z" fill="#c8b47a" stroke="#8a7a4a" stroke-width="0.6"/><path d="M14 9L22 1" stroke="#a89a5a" stroke-width="2"/></svg><svg style="left:86.7px;top:142px" width="14.20" height="15.60" viewBox="0 0 14 16" preserveAspectRatio="none"><rect x="0.5" y="5" width="9" height="10" fill="none" stroke="#666" stroke-width="0.9"/><rect x="3" y="2.5" width="9" height="10" fill="#fff" stroke="#666" stroke-width="0.9"/><path d="M7 0.5V9" stroke="#3a6fb8" stroke-width="1.4"/><circle cx="11" cy="13" r="2.8" fill="#5b9e5b" stroke="#3a7a3a" stroke-width="0.6"/></svg><svg style="left:111.7px;top:143px" width="16.30" height="14.60" viewBox="0 0 16 12" preserveAspectRatio="none"><path d="M0.5 5Q8 -2 15.5 5Q8 12 0.5 5Z" fill="#f0f0f0" stroke="#888" stroke-width="0.8"/><circle cx="7" cy="4.8" r="3" fill="#6d9ad0"/><circle cx="7" cy="4.8" r="1.2" fill="#222"/><path d="M11 9H16L13.5 12Z" fill="#555"/></svg><svg style="left:136.6px;top:142px" width="14.40" height="15.60" viewBox="0 0 15 16" preserveAspectRatio="none"><path d="M0.5 1H14.5L9 8V15.5L6 13V8Z" fill="#6d9ad0" stroke="#3f6fae" stroke-width="0.7"/><rect x="0.5" y="0.5" width="14" height="2.5" fill="#f2d020"/></svg><svg style="left:162.4px;top:142px" width="14.60" height="15.60" viewBox="0 0 15 15" preserveAspectRatio="none"><path d="M7 1.5C5 0 1 0.5 1 3C1 4.5 2.5 5.3 4.3 5.3C2.3 5.3 0.6 6.3 0.6 8C0.6 10.5 5 11 7.3 9" fill="none" stroke="#6d2f8a" stroke-width="1.3"/><path d="M7 8H14L13 15H8Z" fill="#c8c8c8" stroke="#aaa" stroke-width="0.5"/></svg><svg style="left:199px;top:142px" width="15.00" height="15.60" viewBox="0 0 15 16" preserveAspectRatio="none"><path d="M0.5 1H4M0.5 1V15M2 5H4M2 10H4" stroke="#999" stroke-width="0.8" fill="none"/><rect x="1.5" y="4" width="3" height="3" fill="#f5a020"/><rect x="1.5" y="9.5" width="3" height="3" fill="#f5a020"/><path d="M8 0.5H12V9H15L10 15.5L5 9H8Z" fill="#6d9ad0" stroke="#3f6fae" stroke-width="0.6"/></svg><svg style="left:224px;top:142px" width="15.00" height="15.60" viewBox="0 0 15 16" preserveAspectRatio="none"><path d="M0.5 1H4M0.5 1V15M2 5H4M2 10H4" stroke="#999" stroke-width="0.8" fill="none"/><rect x="1.5" y="4" width="3" height="3" fill="#f5a020"/><rect x="1.5" y="9.5" width="3" height="3" fill="#f5a020"/><path d="M8 15.5H12V7H15L10 0.5L5 7H8Z" fill="#6d9ad0" stroke="#3f6fae" stroke-width="0.6"/></svg><svg style="left:249px;top:142px" width="14.00" height="14.00" viewBox="0 0 14 14" preserveAspectRatio="none"><rect x="0.5" y="0.5" width="11" height="11" fill="none" stroke="#777" stroke-width="0.9"/><rect x="7" y="9" width="7" height="4.5" rx="1" fill="#e8323a"/><rect x="8.5" y="10.5" width="4" height="1.5" fill="#fff"/></svg><svg style="left:183.0px;top:147.75px" width="8" height="4.5" viewBox="0 0 8 4.5"><path d="M0 0H8L4.0 4.5Z" fill="#555"/></svg><svg style="left:14px;top:1032px" width="11.70" height="12.00" viewBox="0 0 12 12" preserveAspectRatio="none"><circle cx="5" cy="5" r="4" fill="none" stroke="#777" stroke-width="1.2"/><path d="M8 8L11.5 11.5" stroke="#777" stroke-width="1.5"/></svg><svg style="left:252.8px;top:1033px" width="13.30" height="10.00" viewBox="0 0 14 10" preserveAspectRatio="none"><path d="M0.5 5L4 0.5H13.5V9.5H4Z" fill="#888"/><path d="M6.5 2.5L11 7.5M11 2.5L6.5 7.5" stroke="#fff" stroke-width="1.1"/></svg><svg style="left:1211.7px;top:1030px" width="16.30" height="17.00" viewBox="0 0 17 17" preserveAspectRatio="none"><ellipse cx="8" cy="8.5" rx="5.5" ry="7" fill="#999" stroke="#333" stroke-width="1" transform="rotate(-35 8 8.5)"/><path d="M5 4L11 12" stroke="#222" stroke-width="0.8"/><circle cx="11" cy="12" r="2.5" fill="#e8e8e8" stroke="#333" stroke-width="0.7"/></svg><svg style="left:1382.4px;top:1031.4px" width="12.40" height="14.60" viewBox="0 0 13 15" preserveAspectRatio="none"><path d="M3 7V4.5A3.5 3.5 0 0 1 10 4.5V7" fill="none" stroke="#666" stroke-width="1.8"/><rect x="0.5" y="6.5" width="12" height="8" rx="1" fill="#666"/></svg><svg style="left:1796px;top:1031px" width="15.50" height="15.50" viewBox="0 0 16 16" preserveAspectRatio="none"><circle cx="8" cy="8" r="7.2" fill="none" stroke="#666" stroke-width="1"/><ellipse cx="8" cy="8" rx="3.5" ry="7.2" fill="none" stroke="#666" stroke-width="0.8"/><path d="M1 8H15M2 4.5H14M2 11.5H14" stroke="#666" stroke-width="0.8"/></svg><svg style="left:1897.8px;top:1032px" width="16.30" height="15.00" viewBox="0 0 16 15" preserveAspectRatio="none"><ellipse cx="8" cy="6.5" rx="7.8" ry="6.3" fill="#666"/><path d="M10 11L15 15L12 10Z" fill="#666"/><circle cx="4.5" cy="6.5" r="1.2" fill="#fff"/><circle cx="8" cy="6.5" r="1.2" fill="#fff"/><circle cx="11.5" cy="6.5" r="1.2" fill="#fff"/></svg><div class="t" style="left:855.60px;top:997.00px;font-size:13px;font-family:'Liberation Sans',sans-serif;font-weight:normal;color:#b4b4b4;transform:scaleX(1.0736);">0.0</div><svg style="left:349px;top:543px" width="3" height="18" viewBox="0 0 3 18" shape-rendering="crispEdges"><g fill="#a8a8a8"><rect x="0" y="0" width="1" height="1"/><rect x="0" y="3" width="1" height="1"/><rect x="0" y="6" width="1" height="1"/><rect x="0" y="9" width="1" height="1"/><rect x="0" y="12" width="1" height="1"/><rect x="0" y="15" width="1" height="1"/></g></svg><svg style="left:1340px;top:543px" width="3" height="18" viewBox="0 0 3 18" shape-rendering="crispEdges"><g fill="#a8a8a8"><rect x="0" y="0" width="1" height="1"/><rect x="0" y="3" width="1" height="1"/><rect x="0" y="6" width="1" height="1"/><rect x="0" y="9" width="1" height="1"/><rect x="0" y="12" width="1" height="1"/><rect x="0" y="15" width="1" height="1"/></g></svg><div class="a" style="left:0px;top:0px;width:1px;height:1055px;background:#000"></div><div class="a" style="left:1921px;top:0px;width:1px;height:1055px;background:#000"></div><div class="a" style="left:0px;top:1054px;width:1922px;height:1px;background:#000"></div></body></html>
